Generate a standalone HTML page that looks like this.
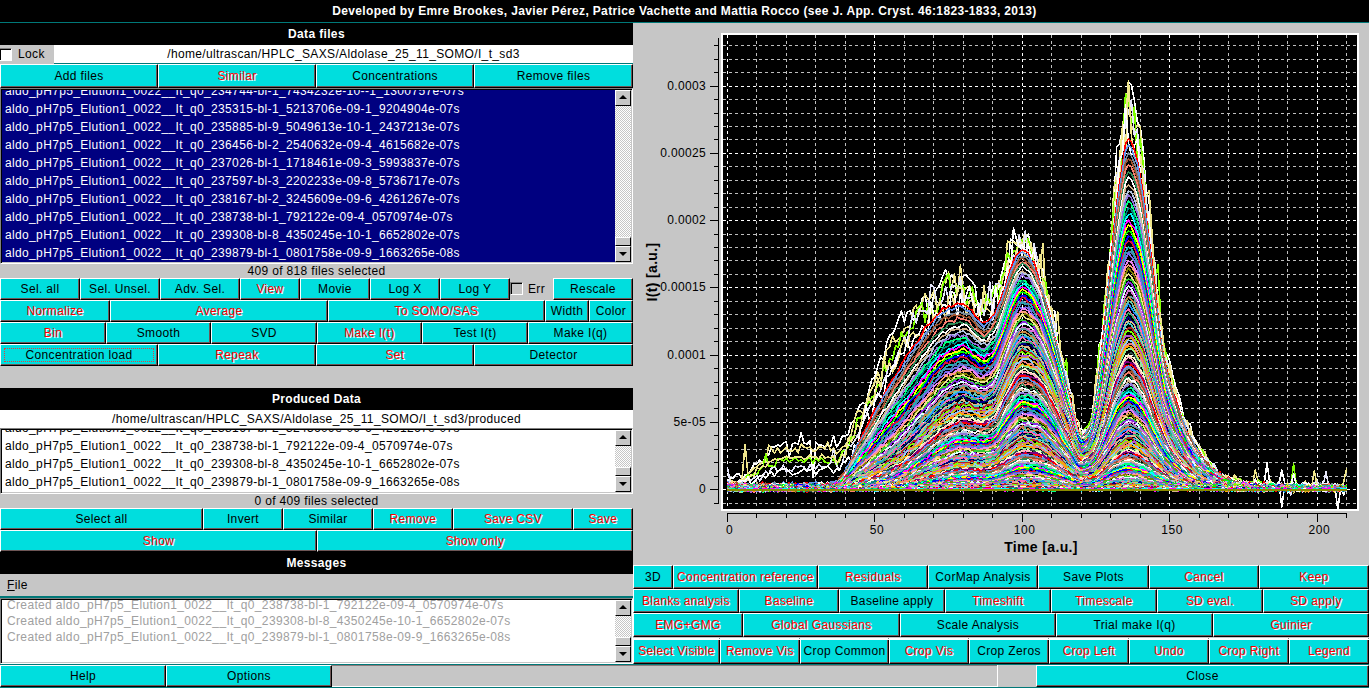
<!DOCTYPE html>
<html><head><meta charset="utf-8"><style>
*{margin:0;padding:0;box-sizing:content-box}
html,body{width:1369px;height:688px;overflow:hidden;background:#c6c6c6;position:relative;font-family:"Liberation Sans",sans-serif;font-size:12px;color:#000;letter-spacing:0.35px}
.t{position:absolute;white-space:nowrap}
.hdr{position:absolute;background:#000;color:#fff;font-weight:bold;text-align:center}
.b{position:absolute;background:#00dede;border-top:1px solid #fff;border-left:1px solid #fff;border-right:1px solid #000;border-bottom:1px solid #000;box-shadow:inset -1px -1px 0 #6e5656;white-space:nowrap;overflow:hidden;color:#000;display:flex;align-items:center;justify-content:center}
.b span{position:relative}
.b.r{color:#ff0000;text-shadow:1px 1px 0 #fff}
.cb{position:absolute;width:11px;height:11px;background:#fff;border-top:1px solid #808080;border-left:1px solid #808080;border-right:1px solid #fff;border-bottom:1px solid #fff;box-shadow:inset 1px 1px 0 #000}
.frame{position:absolute;box-sizing:border-box;border-top:1px solid #808080;border-left:1px solid #808080;border-right:1px solid #fff;border-bottom:1px solid #fff;box-shadow:inset 1px 1px 0 #000, inset -1px -1px 0 #c6c6c6}
.frame>div{}
.li{position:absolute;white-space:nowrap;line-height:18px}
.sb{position:absolute;width:16px;background:#c6c6c6}
.sbb{position:absolute;left:0;width:14px;height:14px;background:#c6c6c6;border-top:1px solid #fff;border-left:1px solid #fff;border-right:1px solid #000;border-bottom:1px solid #000}
.sbt{position:absolute;left:0;width:16px;background-color:#fff;background-image:linear-gradient(45deg,#c6c6c6 25%,transparent 25%,transparent 75%,#c6c6c6 75%),linear-gradient(45deg,#c6c6c6 25%,transparent 25%,transparent 75%,#c6c6c6 75%);background-size:2px 2px;background-position:0 0,1px 1px}
.au{position:absolute;left:3px;top:4px;width:0;height:0;border-left:4px solid transparent;border-right:4px solid transparent;border-bottom:4px solid #000}
.ad{position:absolute;left:3px;top:5px;width:0;height:0;border-left:4px solid transparent;border-right:4px solid transparent;border-top:4px solid #000}
.focus{position:absolute;left:3px;top:3px;right:3px;bottom:3px;border:1px dotted #e04040}
</style></head>
<body>
<svg width="1369" height="688" style="position:absolute;left:0;top:0" shape-rendering="crispEdges">
<rect x="721" y="33" width="638" height="478" fill="#fff"/>
<rect x="723" y="35" width="634" height="474" fill="#000"/>
<path d="M756.5 35V509M786.5 35V509M815.5 35V509M845.5 35V509M904.5 35V509M933.5 35V509M963.5 35V509M992.5 35V509M1051.5 35V509M1081.5 35V509M1110.5 35V509M1140.5 35V509M1199.5 35V509M1228.5 35V509M1258.5 35V509M1287.5 35V509M1346.5 35V509M723 503.5H1357M723 476.5H1357M723 462.5H1357M723 449.5H1357M723 435.5H1357M723 408.5H1357M723 395.5H1357M723 382.5H1357M723 368.5H1357M723 341.5H1357M723 328.5H1357M723 314.5H1357M723 301.5H1357M723 274.5H1357M723 260.5H1357M723 247.5H1357M723 234.5H1357M723 207.5H1357M723 193.5H1357M723 180.5H1357M723 166.5H1357M723 139.5H1357M723 126.5H1357M723 113.5H1357M723 99.5H1357M723 72.5H1357M723 59.5H1357M723 45.5H1357" stroke="#bebebe" stroke-width="1" stroke-dasharray="3 3" fill="none"/>
<path d="M727.5 35V509M874.5 35V509M1022.5 35V509M1169.5 35V509M1317.5 35V509M723 489.5H1357M723 422.5H1357M723 355.5H1357M723 287.5H1357M723 220.5H1357M723 153.5H1357M723 86.5H1357" stroke="#ffffff" stroke-width="1" stroke-dasharray="3 3" fill="none"/>
<svg x="723" y="35" width="634" height="474" viewBox="723 35 634 474" overflow="hidden">
<g transform="matrix(2.949,0,0,1,727.4,0)" fill="none" stroke-width="1.6" vector-effect="non-scaling-stroke" shape-rendering="crispEdges" stroke-linejoin="round">
<path d="M0 481l 1-3 1 0 1-4 1 0 1 5 1-4 1 0 1-5 1-6 1 0 1-4 1 3 1-8 1 0 1-8 1 0 1-2 1 1 1-3 1-1 1 15 1-13 1-1 1 1 1-11 1 10 1 1 1-3 1 36 1-35 1 3 1 0 1 2 1-2 1 1 1-10 1 11 1-4 1-7 1 0 1-2 1-11 1-3 1-9 1-6 1-2 1 1 1-14 1-11 1-2 1-11 1-9 1 3 1-17 1-8 1-1 1-6 1-9 1-8 1 11 1-10 1-1 1 9 1 2 1-9 1-14 1-4 1 15 1 1 1-17 1-5 1-4 1-9 1-6 1 9 1-4 1 5 1 11 1-13 1-2 1-1 1 4 1 3 1 4 1 26 1-5 1-8 1-2 1 8 1-19 1 9 1-8 1-13 1-12 1 16 1-39 1 2 1 4 1-9 1 20 1-16 1-6 1 14 1 3 1 8 1 8 1 2 1 21 1 15 1 5 1 1 1 32 1 7 1 26 1-5 1 17 1 9 1 19 1 16 1 8 1-11 1 2 1-2 1-22 1-19 1-43 1-7 1-33 1-36 1-16 1-42 1-64 1-3 1-15 1-13 1-34 1 3 1 15 1 22 1 5 1 23 1 40 1 10 1 57 1 20 1 20 1 25 1 28 1 4 1 7 1 14 1 12 1 7 1 12 1 15 1 3 1 0 1 16 1 1 1 7 1 6 1 5 1 0 1 4 1 3 1 8 1-1 1 18 1-16 1 2 1 1 1 0 1 1 1 5 1-2 1 3 1 4 1-1 1-9 1 8 1 2 1-3 1-5 1 4 1-1 1 1 1 0 1-15 1 13 1 2 1-2 1 0 1 3 1-1 1 0 1 2 1-4 1 3 1 1 1 2 1-1 1-6 1 6 1-3 1 1 1 0 1 24 1-23 1-1 1-1" stroke="#ffffff" vector-effect="non-scaling-stroke"/>
<path d="M0 484l 1-4 1 2 1 1 1 1 1-7 1-32 1 30 1-4 1-3 1-1 1-3 1-2 1 0 1-17 1 4 1 4 1-5 1 5 1-3 1-3 1 4 1 0 1-3 1 5 1-9 1 3 1 1 1-1 1 4 1 0 1-4 1 0 1 2 1-7 1 9 1-3 1 6 1-3 1-4 1-1 1-5 1-7 1-13 1-10 1 0 1 2 1-10 1-9 1-6 1-6 1-10 1 8 1-14 1-16 1-3 1-11 1 6 1-3 1-3 1-7 1-2 1 0 1-18 1-4 1 9 1-11 1-9 1 5 1-1 1-7 1 16 1-5 1-20 1 1 1-11 1 17 1-15 1 21 1-30 1 26 1-3 1-2 1 4 1 15 1 0 1 8 1-27 1 19 1-3 1 2 1-10 1-13 1 3 1-12 1-31 1 2 1-1 1 2 1-8 1 6 1-10 1 14 1 5 1 1 1 18 1-2 1-24 1 53 1 21 1-10 1 21 1-17 1 40 1 9 1 24 1 16 1 4 1 13 1 19 1 3 1-5 1-5 1-5 1-14 1-35 1-12 1-24 1-26 1-49 1-8 1-68 1-13 1-18 1-33 1-14 1-30 1 46 1 4 1-6 1 2 1 57 1 14 1-7 1 43 1 50 1 12 1 31 1 23 1 17 1-3 1 20 1 6 1 10 1 17 1 4 1 0 1 17 1-2 1 7 1 3 1 4 1 2 1 9 1 3 1 5 1 3 1 2 1 3 1-2 1 2 1 5 1-5 1 7 1-2 1 3 1-4 1 2 1 3 1-16 1 12 1 6 1-4 1 2 1-6 1 5 1-1 1 1 1-1 1 2 1-3 1 3 1 0 1-2 1 1 1 1 1 0 1 2 1-3 1 5 1-4 1-3 1 3 1 1 1-1 1 2 1-1 1-3 1 3 1-5 1-14" stroke="#f0e68c" vector-effect="non-scaling-stroke"/>
<path d="M0 482l 1 1 1 0 1-1 1 1 1-1 1-4 1-3 1 1 1-2 1 1 1-6 1-2 1-13 1 12 1 0 1 1 1-8 1 0 1 2 1-3 1 4 1-2 1-3 1 4 1-1 1 2 1-3 1-1 1 5 1-5 1 3 1-3 1 4 1 1 1-1 1-3 1 6 1-6 1-8 1 0 1-4 1-10 1 0 1-19 1 0 1-3 1-8 1-5 1-5 1-2 1-11 1 3 1-24 1 10 1-14 1 1 1-14 1 1 1-15 1 8 1-8 1-3 1-1 1-16 1-5 1-4 1 19 1-18 1 10 1-3 1 2 1-11 1-16 1-8 1-4 1 23 1-3 1-8 1 1 1-1 1 19 1-10 1-8 1 12 1 6 1 9 1-4 1-15 1 7 1-8 1-10 1 17 1-23 1-7 1-18 1 6 1-8 1 0 1-13 1 3 1 0 1-2 1 12 1 12 1 4 1 11 1 1 1 4 1 26 1 29 1-15 1 20 1 19 1 8 1-11 1 47 1 5 1 7 1 24 1-6 1-7 1-2 1-5 1-9 1-22 1-42 1-12 1-41 1-8 1-46 1-35 1-28 1 7 1-45 1-47 1 6 1 24 1-17 1 52 1-20 1 25 1 36 1 30 1 32 1 23 1-20 1 56 1 23 1 13 1 19 1 4 1 29 1-4 1 8 1 6 1 8 1 3 1 11 1 0 1 9 1 0 1 7 1 2 1 5 1 6 1 0 1 7 1-1 1 1 1 3 1 1 1-2 1 0 1 0 1 5 1 1 1-3 1 0 1 7 1-9 1 2 1 6 1-6 1 4 1 0 1 1 1 0 1-1 1-1 1 3 1-2 1-22 1 23 1 1 1-1 1-5 1 7 1 0 1-3 1-4 1 6 1-3 1 3 1-2 1-2 1 1 1 2 1-1 1 0 1-1" stroke="#7fff00" vector-effect="non-scaling-stroke"/>
<path d="M0 467l 1 17 1 0 1 1 1-5 1 7 1-5 1-2 1 0 1-2 1-2 1 5 1-5 1-5 1 3 1-6 1-1 1 4 1-1 1-5 1 7 1-2 1 1 1-5 1 1 1-1 1 1 1 4 1-6 1 3 1 1 1-5 1 3 1 0 1-1 1-3 1-14 1 16 1 5 1-7 1-12 1-6 1 1 1-5 1-4 1-7 1-8 1-6 1-8 1-6 1 0 1-6 1-6 1-9 1-7 1-11 1 10 1-14 1-7 1-6 1-9 1 5 1-17 1-12 1 10 1-13 1 1 1 0 1 3 1-29 1 2 1 14 1 4 1-5 1-13 1 13 1-15 1 1 1 4 1-13 1 27 1-6 1 0 1-1 1 19 1-3 1-13 1 15 1-11 1-22 1 38 1-36 1-1 1 4 1 5 1-15 1-13 1-9 1 2 1-22 1 18 1-22 1 26 1 3 1-16 1 14 1 20 1 12 1 8 1 9 1 11 1 5 1 27 1 7 1 12 1 5 1 14 1 10 1 20 1 19 1 1 1-8 1 8 1-11 1-12 1-26 1-26 1-29 1 5 1-53 1-26 1-31 1-51 1-20 1-5 1-33 1-7 1-13 1 36 1-7 1 35 1 5 1 31 1 21 1 29 1 13 1 48 1 26 1 16 1 7 1 10 1 15 1 13 1 8 1 10 1 2 1 9 1 5 1 7 1 5 1 2 1 9 1 2 1 3 1 7 1-3 1 6 1 7 1-3 1 3 1 1 1 3 1 1 1 0 1 4 1-3 1 0 1-1 1 3 1-2 1 5 1-1 1-4 1-1 1 1 1 4 1 0 1 0 1-4 1 4 1-2 1 10 1-10 1 1 1-1 1-1 1 1 1 1 1-2 1-1 1-2 1 7 1-3 1-13 1 16 1-1 1 0 1 1 1-1 1-2 1 3" stroke="#e6e6fa" vector-effect="non-scaling-stroke"/>
<path d="M0 485l 1-1 1-2 1 0 1 4 1-5 1-3 1 2 1-5 1 1 1-8 1 1 1-3 1 1 1-5 1-1 1-2 1 1 1-1 1-1 1-2 1 2 1 0 1-1 1 0 1 0 1 2 1-1 1-3 1 2 1 0 1 2 1-5 1 4 1-1 1 1 1-2 1 6 1-1 1-7 1 3 1-19 1 4 1-7 1-10 1 3 1-14 1-9 1-7 1 7 1-10 1-17 1 10 1-31 1 12 1-6 1 9 1-5 1-8 1-14 1-6 1 8 1-12 1-3 1 5 1-3 1 4 1-10 1-5 1-20 1 20 1-15 1-7 1 8 1 11 1-23 1-3 1 11 1-18 1 1 1 2 1 25 1-14 1-1 1 16 1 1 1-8 1-9 1 9 1 2 1 3 1 1 1-9 1-19 1 0 1-26 1 18 1-11 1-17 1-7 1-1 1 14 1-1 1-13 1 20 1 9 1-17 1 28 1 15 1-3 1 37 1 17 1 0 1 3 1 24 1 3 1 18 1-3 1 24 1 3 1 17 1-2 1-7 1 3 1-14 1-33 1-22 1-11 1-48 1-25 1-31 1-15 1-52 1-4 1-50 1 25 1-67 1 51 1 18 1 7 1-6 1 26 1 32 1 7 1 14 1 46 1 22 1 17 1 27 1 30 1-9 1 20 1 8 1 4 1 27 1-4 1 15 1-9 1 19 1-6 1 6 1 6 1 6 1 6 1 1 1 5 1 4 1-1 1 3 1 0 1-1 1 5 1-6 1 4 1 1 1 7 1-3 1 3 1-1 1 0 1-1 1 1 1-1 1-1 1-2 1 2 1 4 1-2 1-1 1 3 1 0 1-2 1 7 1-8 1 4 1-2 1-6 1 9 1-1 1-18 1 14 1 2 1-1 1 0 1 2 1-2 1 0 1-1 1 0 1 3 1-2" stroke="#f0e68c" vector-effect="non-scaling-stroke"/>
<path d="M0 483l 1 3 1-1 1-3 1-1 1 0 1 0 1-4 1 7 1-2 1-3 1-3 1-1 1 3 1-4 1-2 1 4 1-5 1-1 1-1 1 0 1 3 1 3 1-1 1-1 1-2 1-2 1 2 1-1 1-2 1 7 1-5 1-1 1-1 1-2 1 3 1 4 1-4 1 1 1-7 1-1 1-5 1 4 1-16 1 4 1-18 1-8 1-18 1 14 1-3 1-16 1-7 1 4 1-1 1-19 1-2 1-9 1 0 1-13 1 1 1-1 1-13 1 12 1-12 1-5 1-1 1-8 1 2 1 6 1-32 1 13 1-2 1 6 1-14 1 0 1 10 1-23 1 1 1 23 1-22 1 13 1-12 1-9 1 14 1 7 1-4 1 17 1 2 1-1 1-2 1-11 1-21 1 19 1-15 1-5 1-19 1 5 1-44 1 11 1 8 1-2 1 7 1-8 1 14 1-8 1 23 1 5 1 18 1 0 1 9 1 16 1 14 1 8 1 14 1 11 1 19 1 13 1 10 1 14 1 6 1-2 1 6 1 3 1 11 1-29 1-27 1-21 1-37 1-18 1-27 1-44 1-8 1-40 1-36 1-9 1-47 1 38 1 13 1-10 1-7 1 35 1 27 1 28 1-15 1 60 1 17 1 31 1 9 1 35 1 11 1 25 1-5 1-1 1 6 1 13 1 19 1-1 1 4 1 0 1 5 1 6 1 7 1 5 1 4 1 4 1 3 1 3 1 1 1 12 1-5 1-6 1 3 1 1 1 2 1 1 1-2 1 4 1 1 1-1 1 1 1-4 1 3 1-1 1-21 1 22 1-2 1 2 1-3 1 25 1-22 1 8 1-7 1-12 1 12 1 0 1-3 1 0 1 1 1 1 1 0 1 0 1-1 1 2 1-2 1 0 1 3 1-2 1 2 1 1 1 7 1-8" stroke="#ffffff" vector-effect="non-scaling-stroke"/>
<path d="M0 482l 1 3 1-2 1 1 1 2 1-2 1-1 1 3 1-1 1 2 1-2 1 0 1-3 1 5 1-3 1 0 1 0 1 0 1 0 1 1 1-1 1-1 1 4 1-4 1 2 1-1 1-1 1 0 1 1 1 0 1 2 1-2 1 0 1 0 1 1 1-2 1-1 1 0 1-2 1-6 1-3 1-5 1-7 1-7 1-6 1-6 1-7 1-5 1-6 1-7 1-6 1-2 1-6 1-6 1-6 1-5 1-5 1-3 1-5 1-7 1-5 1-5 1-3 1-5 1-2 1-4 1-6 1-7 1-2 1-2 1-4 1-3 1-3 1-5 1 1 1-3 1 1 1-2 1-2 1 1 1 0 1 2 1 3 1 1 1 6 1 2 1 5 1-1 1 0 1-3 1-3 1-4 1-8 1-8 1-6 1-12 1-9 1-8 1-6 1-3 1-2 1 1 1 2 1 8 1 1 1 10 1 11 1 8 1 12 1 8 1 14 1 12 1 11 1 13 1 11 1 12 1 13 1 13 1 10 1 12 1 5 1-3 1-3 1-1 1-15 1-16 1-23 1-27 1-29 1-29 1-29 1-31 1-27 1-22 1-18 1-20 1-5 1 3 1 8 1 10 1 16 1 17 1 24 1 23 1 22 1 25 1 28 1 25 1 18 1 11 1 12 1 11 1 6 1 10 1 10 1 8 1 7 1 7 1 3 1 6 1 2 1 6 1 4 1 2 1 6 1 0 1 6 1-3 1 7 1 1 1-3 1 5 1-1 1 2 1 3 1-2 1 1 1-3 1 4 1-3 1 3 1-1 1-3 1 4 1 0 1-1 1 2 1-2 1 0 1 1 1 2 1 1 1-2 1 0 1 2 1-3 1 0 1 0 1-1 1 2 1-1 1 1 1-2 1 2 1 0 1-1 1 3 1-4 1 2 1 0 1 0" stroke="#ff0000" vector-effect="non-scaling-stroke"/>
<path d="M0 481l 1 4 1 1 1-1 1 0 1 1 1-1 1-1 1 3 1-2 1 1 1-1 1-1 1 1 1 3 1-4 1 0 1 0 1 1 1-3 1 3 1 0 1-3 1 5 1-3 1 0 1 1 1 0 1-2 1 0 1-1 1 2 1 0 1 0 1 1 1-3 1 0 1-1 1 0 1-6 1-5 1-5 1-5 1-8 1-8 1-2 1-6 1-5 1-5 1-6 1-7 1-6 1-4 1-7 1-4 1-4 1-6 1-4 1-5 1-3 1-7 1-3 1-7 1-2 1-6 1-2 1-3 1-6 1-3 1-4 1-4 1-6 1-1 1-3 1-1 1-3 1 1 1-1 1-3 1 0 1 2 1 3 1 0 1 4 1 4 1 2 1 3 1 3 1-4 1-1 1-5 1-2 1-9 1-6 1-9 1-9 1-10 1-6 1-8 1-4 1-2 1 2 1 2 1 5 1 7 1 8 1 8 1 6 1 15 1 9 1 10 1 14 1 10 1 13 1 10 1 13 1 15 1 10 1 14 1 9 1 6 1-1 1-7 1-3 1-11 1-20 1-22 1-23 1-26 1-32 1-27 1-27 1-29 1-21 1-19 1-19 1-6 1 3 1 9 1 7 1 17 1 18 1 22 1 23 1 25 1 26 1 22 1 24 1 18 1 13 1 10 1 10 1 12 1 7 1 7 1 6 1 11 1 3 1 4 1 6 1 4 1 6 1 3 1 4 1 3 1 2 1 3 1 1 1 3 1 4 1-1 1 4 1-1 1 1 1 1 1-1 1-1 1 1 1 1 1 2 1-2 1 1 1 0 1-1 1 1 1 1 1-2 1 2 1-2 1 3 1-3 1 0 1 1 1 1 1-2 1 2 1-2 1 1 1 2 1-2 1 0 1 0 1 0 1 0 1-2 1 2 1-1 1 1 1 2 1-2 1 1" stroke="#6495ed" vector-effect="non-scaling-stroke"/>
<path d="M0 484l 1 1 1 1 1 0 1 0 1-1 1 1 1 0 1 1 1-3 1 2 1 0 1-1 1 1 1-1 1-1 1-2 1 3 1 0 1-1 1 1 1 1 1-1 1 0 1-1 1 4 1-3 1 0 1-1 1 1 1 0 1 2 1-2 1 1 1-3 1 0 1 1 1 0 1-5 1-4 1-2 1-6 1-6 1-7 1-6 1-5 1-5 1-8 1-4 1-6 1-4 1-6 1-6 1-3 1-6 1-5 1-3 1-8 1 0 1-5 1-5 1-6 1-5 1-5 1-4 1-2 1-6 1-1 1-8 1-1 1-1 1-7 1-4 1 0 1-3 1-1 1-1 1 0 1-3 1 1 1 2 1 0 1 0 1 3 1 4 1 4 1 3 1 2 1-1 1-6 1 2 1-7 1-9 1-7 1-6 1-10 1-11 1-6 1-6 1-6 1 0 1 0 1 3 1 4 1 5 1 7 1 8 1 9 1 11 1 12 1 12 1 12 1 9 1 14 1 13 1 11 1 12 1 11 1 14 1 9 1 3 1 0 1-2 1-5 1-12 1-18 1-21 1-22 1-30 1-27 1-28 1-32 1-23 1-21 1-20 1-15 1-7 1 3 1 7 1 10 1 15 1 18 1 22 1 24 1 20 1 23 1 30 1 19 1 16 1 13 1 10 1 9 1 11 1 7 1 8 1 10 1 7 1 1 1 7 1 6 1 6 1 5 1 1 1 4 1 4 1 2 1 1 1 3 1 2 1 4 1-3 1 3 1 1 1 0 1 2 1-1 1 1 1 0 1-1 1 1 1 2 1 0 1-1 1 1 1-1 1 1 1 1 1-2 1 1 1 1 1-1 1 0 1 1 1 2 1-3 1-2 1 2 1 0 1 0 1 1 1 1 1-5 1 3 1 0 1 0 1-2 1 5 1-3 1 2 1-1 1-1" stroke="#778899" vector-effect="non-scaling-stroke"/>
<path d="M0 485l 1 0 1 1 1-4 1 4 1 1 1-2 1 0 1 2 1-3 1 2 1-2 1 1 1-2 1 2 1 1 1-1 1 0 1 0 1 0 1-1 1 0 1 1 1 1 1 0 1-2 1-1 1 1 1 2 1-1 1-1 1 0 1 0 1 1 1 0 1 0 1-1 1-1 1-5 1-4 1-2 1-4 1-4 1-10 1-5 1-6 1-4 1-5 1-5 1-5 1-6 1-6 1-3 1-4 1-8 1-1 1-7 1-4 1-5 1-3 1-5 1-5 1-4 1-6 1-1 1-6 1-4 1-5 1-4 1-4 1-6 1-2 1-1 1-5 1-2 1 2 1-3 1-1 1 1 1-1 1 1 1 2 1-1 1 4 1 2 1 6 1 2 1 1 1-1 1-1 1-2 1-9 1-5 1-7 1-9 1-11 1-7 1-9 1-6 1-5 1-2 1 3 1 2 1 3 1 6 1 8 1 10 1 7 1 11 1 10 1 11 1 11 1 13 1 12 1 12 1 10 1 13 1 11 1 12 1 10 1 6 1-3 1-2 1-6 1-8 1-18 1-25 1-22 1-26 1-27 1-30 1-25 1-27 1-20 1-18 1-19 1-4 1 2 1 8 1 9 1 13 1 21 1 21 1 18 1 25 1 26 1 21 1 23 1 17 1 15 1 8 1 10 1 8 1 9 1 9 1 7 1 5 1 5 1 8 1 4 1 2 1 6 1 2 1 3 1 5 1 3 1 3 1 1 1 1 1 2 1 1 1 5 1-1 1-3 1 4 1 0 1-1 1 0 1 0 1 4 1-1 1-1 1-1 1 1 1 1 1-2 1-1 1 1 1-1 1 2 1 1 1 0 1-3 1 3 1 0 1-1 1 1 1 0 1-2 1 2 1 2 1-2 1-2 1 0 1 0 1 2 1 1 1 1 1-2 1-1 1 1" stroke="#a0522d" vector-effect="non-scaling-stroke"/>
<path d="M0 485l 1-2 1 2 1 0 1 1 1 0 1-3 1 3 1 1 1 0 1-1 1-2 1 2 1-1 1 1 1 1 1 0 1-2 1 0 1 1 1-1 1 1 1-1 1 1 1-2 1 1 1 0 1 1 1-1 1 0 1 0 1 1 1 0 1-1 1 0 1 2 1-2 1-2 1-3 1-3 1-4 1-5 1-6 1-4 1-8 1-4 1-4 1-8 1-2 1-6 1-3 1-7 1-2 1-6 1-5 1-6 1-4 1-6 1-4 1-4 1-5 1-5 1-4 1-2 1-6 1-3 1-4 1-4 1-4 1-1 1-6 1-5 1-2 1-1 1-5 1-1 1 0 1 1 1-5 1 2 1 0 1 1 1 1 1 6 1 2 1 2 1 2 1 3 1-2 1-3 1-6 1-3 1-2 1-12 1-7 1-10 1-9 1-7 1-7 1-4 1-2 1 1 1 3 1 4 1 3 1 8 1 9 1 9 1 10 1 9 1 12 1 9 1 15 1 11 1 13 1 12 1 9 1 12 1 11 1 10 1 7 1-1 1-4 1-3 1-11 1-18 1-21 1-23 1-26 1-25 1-28 1-29 1-25 1-20 1-19 1-16 1-5 1 2 1 8 1 9 1 13 1 20 1 21 1 21 1 22 1 24 1 24 1 21 1 17 1 11 1 11 1 9 1 10 1 8 1 6 1 7 1 6 1 8 1 5 1 2 1 5 1 5 1 4 1 5 1-1 1 4 1 1 1 2 1 4 1 3 1-1 1 1 1 2 1 1 1 1 1-2 1 0 1 1 1 0 1 1 1 1 1-1 1 1 1-1 1-1 1 2 1-1 1-1 1 2 1 0 1-1 1 0 1 0 1 0 1 1 1-1 1 1 1-2 1 3 1 0 1-1 1 1 1-1 1 1 1-4 1 4 1-1 1 0 1 2 1-3 1-1" stroke="#fa8072" vector-effect="non-scaling-stroke"/>
<path d="M0 487l 1 0 1-2 1 0 1 1 1 1 1 0 1 0 1-1 1 0 1 0 1-1 1 1 1 0 1-1 1 0 1 0 1 1 1-1 1 0 1-1 1 1 1-1 1 1 1-1 1 1 1 0 1 1 1-1 1 0 1 0 1 0 1-1 1 2 1 1 1-1 1-2 1-1 1-2 1-3 1-2 1-9 1-2 1-6 1-8 1-4 1-5 1-4 1-5 1-5 1-3 1-8 1-2 1-5 1-7 1-4 1-3 1-7 1-1 1-4 1-8 1-1 1-5 1-5 1-4 1-4 1-5 1-2 1-4 1-5 1-4 1-2 1-2 1-4 1-1 1-4 1 0 1 0 1-1 1-1 1 2 1-1 1 2 1 3 1 4 1 3 1 1 1 2 1-2 1-3 1-3 1-3 1-9 1-9 1-5 1-10 1-9 1-9 1-5 1-4 1-4 1 2 1 3 1 5 1 5 1 7 1 9 1 5 1 11 1 10 1 10 1 12 1 12 1 12 1 11 1 13 1 13 1 11 1 11 1 9 1 4 1-1 1-4 1-3 1-9 1-18 1-22 1-20 1-26 1-28 1-25 1-26 1-25 1-21 1-18 1-15 1-5 1 2 1 6 1 10 1 15 1 18 1 20 1 19 1 22 1 24 1 22 1 22 1 17 1 12 1 9 1 13 1 4 1 9 1 9 1 6 1 6 1 7 1 4 1 4 1 5 1 4 1 3 1 2 1 4 1 3 1 3 1 2 1 0 1 3 1 1 1-2 1 4 1-1 1 0 1-1 1 3 1 0 1 1 1 0 1-2 1 0 1 1 1 1 1-2 1 3 1-3 1 2 1 2 1-3 1 0 1 3 1-4 1 1 1 3 1-2 1 1 1 1 1-2 1 0 1 1 1 0 1 0 1 0 1 1 1-1 1-1 1 0 1 0 1 0 1 1" stroke="#2e8b57" vector-effect="non-scaling-stroke"/>
<path d="M0 486l 1 1 1-3 1 1 1 1 1 0 1 0 1 0 1 0 1 0 1 2 1 0 1-2 1 0 1 0 1-2 1 1 1-1 1 1 1-2 1 3 1-1 1 0 1 1 1-1 1 0 1 0 1 1 1 2 1-2 1 2 1-5 1-1 1 3 1-3 1 5 1-2 1-2 1-1 1-3 1-5 1-4 1-7 1-4 1-6 1-2 1-5 1-6 1-5 1-4 1-5 1-5 1-6 1-5 1-1 1-5 1-5 1-5 1-3 1-5 1-4 1-4 1-4 1-5 1-4 1-2 1-6 1-3 1-4 1-5 1-4 1-2 1-4 1-3 1 1 1-3 1-2 1-1 1 1 1-2 1-2 1 1 1 3 1 4 1 3 1 2 1 3 1 0 1 1 1-6 1-1 1-5 1-5 1-9 1-9 1-9 1-9 1-7 1-7 1-4 1-4 1 3 1 2 1 3 1 7 1 5 1 7 1 10 1 10 1 10 1 10 1 13 1 13 1 9 1 12 1 10 1 12 1 12 1 10 1 11 1 3 1-1 1 0 1-6 1-10 1-16 1-20 1-21 1-27 1-25 1-25 1-28 1-22 1-20 1-19 1-15 1-6 1 3 1 7 1 9 1 14 1 17 1 21 1 18 1 22 1 22 1 23 1 20 1 17 1 13 1 9 1 9 1 8 1 10 1 6 1 9 1 3 1 5 1 6 1 5 1 5 1 1 1 9 1-1 1 5 1 1 1 1 1 4 1 1 1 2 1 1 1 0 1 1 1 0 1 1 1 2 1 1 1-3 1 0 1 2 1 0 1-2 1 2 1 2 1-2 1-1 1 2 1 0 1 0 1-1 1-1 1 2 1 1 1-3 1 2 1 1 1-2 1-2 1 2 1 0 1 0 1 0 1 1 1 0 1 0 1 0 1-3 1 3 1 1 1 0 1-2" stroke="#ffffff" vector-effect="non-scaling-stroke"/>
<path d="M0 486l 1-1 1 1 1 1 1-3 1-1 1 2 1 3 1-3 1 3 1-5 1 4 1-3 1 2 1 2 1-3 1 1 1 0 1-2 1 1 1 1 1-1 1 1 1-1 1-1 1 0 1 1 1 2 1-1 1 0 1 0 1-1 1-1 1 1 1 1 1-1 1 0 1-2 1-2 1-2 1-3 1-7 1-6 1-4 1-4 1-6 1-4 1-5 1-3 1-4 1-5 1-5 1-3 1-5 1-5 1-3 1-5 1-4 1-5 1-2 1-6 1-5 1-4 1-5 1-1 1-7 1-3 1-2 1-5 1-4 1-2 1-4 1-4 1-3 1-1 1-2 1-3 1 0 1-1 1 1 1-1 1 0 1 2 1 3 1 3 1 1 1 6 1-1 1-2 1-2 1 0 1-3 1-9 1-9 1-9 1-11 1-8 1-7 1-7 1-3 1-2 1 2 1 2 1 2 1 7 1 5 1 8 1 10 1 9 1 10 1 8 1 13 1 11 1 12 1 10 1 12 1 13 1 9 1 10 1 14 1 0 1 1 1-5 1-1 1-12 1-15 1-19 1-23 1-23 1-25 1-26 1-25 1-25 1-16 1-20 1-16 1-3 1 3 1 3 1 11 1 13 1 17 1 18 1 22 1 20 1 23 1 23 1 18 1 17 1 12 1 10 1 7 1 9 1 8 1 7 1 5 1 9 1 4 1 5 1 4 1 7 1 2 1 2 1 6 1 1 1 4 1 1 1 2 1 0 1 2 1 3 1-1 1 2 1 0 1 1 1 0 1-1 1 0 1 2 1 0 1-1 1 1 1-1 1 0 1 1 1 2 1 0 1-1 1 0 1-1 1 1 1 0 1 2 1-3 1 1 1-1 1 0 1 0 1 1 1-2 1 1 1 3 1-3 1 2 1-2 1 1 1 0 1-1 1 1 1-1 1 2" stroke="#d2b48c" vector-effect="non-scaling-stroke"/>
<path d="M0 487l 1-1 1-1 1-1 1 1 1-3 1 5 1 0 1-2 1 1 1 1 1 0 1-1 1 0 1 0 1 0 1-1 1 1 1 1 1-2 1 1 1 1 1-2 1 0 1 2 1 0 1-4 1 2 1 0 1 0 1 1 1-1 1 0 1 1 1-1 1 0 1 0 1-2 1-3 1-1 1-2 1-7 1-4 1-5 1-4 1-6 1-4 1-6 1-1 1-5 1-5 1-5 1-3 1-4 1-5 1-4 1-2 1-8 1-1 1-6 1-3 1-4 1-3 1-6 1-1 1-6 1-5 1-4 1-4 1-2 1-7 1-4 1-1 1-2 1-1 1-4 1 0 1 0 1-2 1-1 1-1 1 3 1 0 1 2 1 3 1 2 1 3 1-1 1 2 1-2 1-6 1-1 1-8 1-8 1-8 1-10 1-7 1-10 1-5 1-6 1-1 1 1 1 1 1 4 1 6 1 5 1 7 1 11 1 7 1 12 1 11 1 9 1 12 1 12 1 11 1 10 1 13 1 8 1 11 1 12 1 4 1 3 1-5 1-5 1-10 1-15 1-19 1-22 1-24 1-24 1-24 1-26 1-24 1-17 1-18 1-13 1-6 1 1 1 7 1 10 1 12 1 17 1 17 1 20 1 24 1 20 1 21 1 20 1 14 1 12 1 9 1 10 1 8 1 11 1 2 1 9 1 7 1 4 1 5 1 4 1 6 1 0 1 4 1 3 1 3 1 4 1-1 1 5 1 1 1 2 1 0 1 1 1 1 1-1 1 0 1 3 1-1 1 0 1 1 1-1 1 1 1 1 1-3 1 1 1 0 1 0 1 0 1 0 1 1 1 0 1 0 1 1 1-1 1 0 1 2 1 0 1-2 1 2 1-2 1-1 1 2 1 1 1-1 1 2 1-3 1 0 1-1 1 0 1 2 1 3 1-3" stroke="#b0c4de" vector-effect="non-scaling-stroke"/>
<path d="M0 486l 1 1 1-2 1 0 1 0 1 1 1 1 1-1 1 0 1 1 1-1 1 0 1 1 1 0 1 0 1 0 1-1 1-1 1 0 1 1 1 2 1-3 1 3 1-2 1 0 1 0 1-1 1 0 1 1 1 1 1-2 1 1 1-1 1 1 1 0 1-1 1 1 1-2 1-3 1-1 1-2 1-6 1-5 1-4 1-7 1-4 1-4 1-3 1-5 1-2 1-6 1-3 1-5 1-4 1-4 1-7 1-4 1-1 1-6 1-2 1-6 1-2 1-4 1-5 1-4 1-3 1-4 1-3 1-2 1-8 1-2 1-5 1-1 1-5 1-2 1-1 1-4 1 2 1-3 1 3 1-2 1 1 1 4 1 3 1 1 1 1 1 4 1 0 1-2 1-2 1-1 1-6 1-5 1-10 1-8 1-11 1-8 1-5 1-9 1-3 1-5 1 4 1 0 1 3 1 8 1 6 1 3 1 11 1 10 1 11 1 9 1 9 1 15 1 10 1 8 1 13 1 11 1 10 1 14 1 10 1 1 1 1 1-4 1-4 1-8 1-15 1-19 1-21 1-25 1-24 1-21 1-29 1-22 1-16 1-18 1-14 1-6 1 3 1 8 1 7 1 12 1 17 1 19 1 21 1 18 1 20 1 26 1 17 1 13 1 12 1 9 1 9 1 7 1 10 1 8 1 5 1 6 1 5 1 5 1 3 1 5 1 4 1 2 1 4 1 3 1 0 1 5 1 0 1 5 1-2 1 1 1 0 1 2 1-1 1 3 1-2 1 2 1 2 1-1 1-2 1 0 1 1 1 1 1 0 1 0 1 0 1 0 1-1 1 1 1 1 1 0 1 0 1-1 1 0 1 1 1-1 1-1 1 1 1 0 1 1 1 1 1-3 1 2 1 0 1 0 1 1 1-1 1-1 1 0 1 0 1 0" stroke="#9370db" vector-effect="non-scaling-stroke"/>
<path d="M0 488l 1-3 1 1 1 0 1 2 1-2 1 1 1-1 1 0 1-2 1 2 1 1 1-1 1 0 1 0 1 1 1 0 1 0 1-1 1-1 1-1 1 2 1 1 1 0 1-1 1 0 1 0 1 2 1-1 1 1 1-3 1 1 1 0 1 0 1-2 1 2 1-1 1 0 1-3 1-3 1-2 1-4 1-4 1-6 1-4 1-3 1-6 1-3 1-4 1-4 1-4 1-6 1-2 1-4 1-7 1-3 1-4 1-4 1-3 1-3 1-4 1-7 1-2 1-5 1-3 1-4 1-3 1-6 1-1 1-4 1-4 1-4 1-5 1 1 1-6 1 0 1-1 1-1 1-1 1 0 1-1 1 0 1 5 1 2 1 2 1 1 1 2 1 1 1-2 1-3 1-4 1-1 1-8 1-8 1-10 1-8 1-6 1-10 1-4 1-6 1 0 1 0 1 4 1 1 1 5 1 5 1 10 1 4 1 10 1 9 1 11 1 12 1 9 1 10 1 12 1 10 1 13 1 12 1 12 1 8 1 4 1-2 1-3 1-2 1-10 1-16 1-17 1-22 1-21 1-25 1-23 1-24 1-23 1-16 1-15 1-16 1-6 1 3 1 8 1 8 1 12 1 14 1 20 1 17 1 20 1 22 1 20 1 19 1 16 1 11 1 9 1 7 1 10 1 8 1 7 1 4 1 8 1 5 1 5 1 3 1 1 1 8 1 1 1 1 1 3 1 4 1 2 1 0 1 3 1 2 1 0 1 0 1 3 1 0 1-1 1 2 1-2 1 3 1-1 1 0 1-1 1 1 1-1 1 2 1-3 1 0 1 2 1 2 1-1 1 0 1 0 1 0 1-2 1-1 1 3 1-1 1 0 1 1 1 1 1 1 1 0 1-1 1-1 1 1 1 0 1 0 1 0 1 0 1-1 1 2 1-3" stroke="#00ff7f" vector-effect="non-scaling-stroke"/>
<path d="M0 487l 1-1 1 1 1 0 1 0 1-1 1 0 1 2 1 1 1-3 1 2 1 0 1-1 1 0 1-2 1 2 1-1 1-1 1 0 1 2 1-2 1 1 1 0 1-1 1 2 1 1 1-1 1-2 1 1 1-2 1 3 1-1 1 1 1-1 1-2 1 1 1 2 1-3 1-3 1-1 1-3 1-4 1-5 1-4 1-4 1-3 1-4 1-6 1-3 1-3 1-6 1-4 1-4 1-3 1-3 1-3 1-6 1-2 1-6 1-4 1-4 1-3 1-4 1-2 1-4 1-7 1-2 1-5 1-3 1-3 1-3 1-5 1-2 1-4 1-2 1-1 1-4 1 2 1-3 1 0 1 1 1-1 1 1 1 4 1 2 1 1 1 3 1 3 1-3 1-4 1 1 1-7 1-5 1-8 1-8 1-10 1-9 1-6 1-8 1-4 1-3 1 4 1 2 1 3 1 3 1 6 1 9 1 5 1 10 1 8 1 11 1 8 1 13 1 12 1 10 1 10 1 13 1 10 1 12 1 6 1 5 1-1 1 0 1-7 1-8 1-12 1-20 1-20 1-21 1-23 1-25 1-24 1-19 1-21 1-13 1-12 1-7 1 1 1 8 1 8 1 11 1 17 1 18 1 18 1 20 1 22 1 19 1 16 1 17 1 8 1 11 1 7 1 9 1 8 1 4 1 7 1 7 1 3 1 6 1 5 1 3 1 4 1 2 1 2 1 5 1 0 1 2 1 3 1 1 1 0 1 2 1 3 1-1 1 1 1 0 1 1 1 0 1 1 1-2 1-1 1 3 1 1 1-1 1-1 1 1 1-1 1 1 1-2 1 4 1-4 1 2 1 0 1 0 1 0 1 0 1 0 1 0 1 2 1-2 1 0 1 2 1-1 1-1 1-1 1 2 1 1 1-1 1-1 1 1 1 0 1-1" stroke="#008080" vector-effect="non-scaling-stroke"/>
<path d="M0 486l 1 2 1 0 1-2 1 1 1 0 1-1 1 0 1 2 1 0 1-3 1 3 1-1 1 0 1 1 1-2 1 1 1-1 1 0 1-1 1-1 1 2 1-1 1 1 1 1 1-1 1-1 1 1 1 0 1 1 1-2 1 0 1 0 1 3 1-2 1 0 1 0 1-3 1 1 1-6 1-2 1-1 1-6 1-4 1-4 1-5 1-4 1 0 1-8 1-4 1 0 1-5 1-4 1-6 1-3 1-5 1-1 1-2 1-8 1-3 1-3 1-2 1-4 1-5 1-3 1-2 1-6 1-3 1-4 1-6 1-3 1-4 1-3 1-1 1-1 1-4 1 0 1-2 1-2 1 0 1-2 1-1 1 6 1 2 1 0 1 3 1 2 1 1 1-2 1 0 1-2 1-6 1-7 1-6 1-11 1-8 1-10 1-8 1-5 1-4 1-2 1-1 1 4 1 4 1 4 1 6 1 5 1 7 1 11 1 10 1 9 1 11 1 10 1 9 1 12 1 11 1 9 1 14 1 9 1 10 1 2 1 2 1-3 1-5 1-9 1-12 1-20 1-17 1-23 1-23 1-21 1-27 1-18 1-17 1-18 1-11 1-4 1-1 1 8 1 10 1 11 1 16 1 16 1 16 1 22 1 17 1 20 1 21 1 12 1 11 1 9 1 10 1 7 1 7 1 7 1 6 1 5 1 4 1 5 1 2 1 7 1 3 1 2 1 3 1 0 1 2 1 4 1 0 1 5 1-2 1 5 1 0 1 0 1 1 1 0 1 1 1-3 1 3 1-2 1 2 1-2 1 2 1 1 1-2 1 1 1 1 1-2 1 0 1 0 1 1 1 1 1-2 1 1 1 0 1-1 1-1 1 3 1 2 1-3 1 0 1 0 1 1 1-1 1 1 1-1 1 2 1-2 1 1 1-3 1 2 1 0" stroke="#00ffff" vector-effect="non-scaling-stroke"/>
<path d="M0 485l 1 0 1 0 1 1 1 1 1 1 1-4 1 4 1 0 1-3 1 1 1 0 1 2 1-2 1 2 1-1 1-1 1 0 1 2 1-2 1 0 1-1 1 2 1 0 1 2 1-2 1-1 1 1 1-1 1 1 1-3 1 3 1 0 1-2 1 2 1 1 1-4 1-1 1 0 1-2 1-3 1-2 1-5 1-3 1-4 1-5 1-6 1-2 1-3 1-5 1-3 1-6 1-3 1-1 1-5 1-3 1-4 1-3 1-5 1-5 1-2 1-2 1-6 1-3 1-6 1-1 1-6 1-1 1-6 1-3 1-3 1-3 1-7 1 1 1-3 1-2 1-3 1 1 1-2 1-2 1-1 1 2 1 2 1 5 1 2 1-1 1 2 1 2 1-4 1-1 1-1 1-5 1-7 1-7 1-10 1-7 1-9 1-7 1-7 1-5 1-2 1 1 1 2 1 5 1 3 1 5 1 5 1 8 1 9 1 12 1 10 1 9 1 11 1 9 1 10 1 12 1 11 1 9 1 14 1 8 1 3 1-1 1-1 1-5 1-8 1-14 1-18 1-17 1-24 1-21 1-24 1-22 1-19 1-17 1-15 1-13 1-4 1 5 1 3 1 7 1 14 1 14 1 15 1 18 1 20 1 19 1 18 1 16 1 15 1 12 1 9 1 8 1 8 1 8 1 5 1 6 1 6 1 4 1 5 1 4 1 4 1 1 1 5 1 3 1 2 1 0 1 3 1 2 1 0 1 4 1 0 1 1 1 1 1 0 1 1 1-4 1 4 1 0 1 0 1 0 1 2 1-1 1 0 1-1 1 1 1 1 1-1 1-1 1 1 1-1 1 1 1 2 1-3 1 1 1 1 1 0 1-1 1 1 1-1 1-1 1 3 1-2 1 0 1 1 1-1 1 1 1-1 1 2 1-1 1-1 1-2" stroke="#ff00ff" vector-effect="non-scaling-stroke"/>
<path d="M0 487l 1-1 1 0 1 1 1-1 1 0 1 2 1-1 1-1 1 0 1-1 1 1 1 0 1 1 1 0 1 0 1 0 1 0 1 0 1-1 1-1 1 1 1-1 1 4 1-2 1 1 1 0 1 0 1-2 1 2 1 0 1-2 1 0 1 1 1-1 1 0 1-1 1 1 1-1 1-6 1-1 1-4 1-2 1-4 1-4 1-6 1 0 1-4 1-4 1-6 1-1 1-3 1-4 1-5 1-2 1-4 1-3 1-4 1-7 1-2 1-3 1-4 1-2 1-3 1-6 1-4 1-3 1-2 1-6 1-4 1-2 1-6 1-3 1-1 1-4 1-2 1 0 1-2 1 0 1-2 1-2 1 3 1 3 1 2 1 0 1 2 1 3 1 0 1 0 1-3 1-2 1-5 1-8 1-7 1-6 1-11 1-9 1-6 1-7 1-5 1-3 1 2 1 2 1 2 1 5 1 7 1 5 1 9 1 7 1 8 1 9 1 11 1 11 1 10 1 11 1 10 1 11 1 11 1 11 1 9 1 5 1-4 1-2 1-1 1-9 1-13 1-18 1-18 1-21 1-22 1-23 1-20 1-22 1-16 1-16 1-10 1-5 1 2 1 8 1 7 1 9 1 14 1 20 1 15 1 17 1 19 1 17 1 18 1 14 1 15 1 7 1 7 1 9 1 6 1 8 1 6 1 5 1 5 1 5 1 2 1 4 1 3 1 3 1 1 1 3 1 2 1 3 1 0 1 2 1 0 1 3 1-1 1 1 1 1 1 1 1-2 1 1 1 2 1 0 1 0 1 2 1-3 1 0 1 1 1-1 1 0 1 1 1 0 1-2 1 3 1-3 1 2 1-1 1 3 1-1 1 0 1 1 1-4 1 2 1 0 1 0 1-1 1 0 1 1 1 0 1 2 1-2 1 0 1 1 1 2 1-1" stroke="#ffff00" vector-effect="non-scaling-stroke"/>
<path d="M0 487l 1-1 1 2 1-2 1 2 1-3 1 1 1 0 1 1 1 0 1 2 1-1 1-1 1 0 1 0 1 0 1-1 1 2 1-2 1-1 1 3 1 1 1-3 1 2 1-2 1 1 1 0 1 0 1-2 1 2 1-2 1 2 1 0 1-3 1 3 1-1 1 0 1 0 1-2 1-4 1-1 1-5 1-3 1-3 1-3 1-3 1-5 1-3 1-3 1-3 1-6 1-1 1-3 1-6 1-3 1-2 1-5 1-4 1-1 1-5 1-3 1-5 1-3 1-4 1-3 1-2 1-6 1-3 1-6 1-4 1-3 1-1 1-4 1-3 1-3 1-1 1-1 1-3 1 0 1-2 1 0 1 1 1-1 1 5 1 1 1 4 1-1 1 2 1 1 1-6 1 0 1-6 1-5 1-7 1-9 1-11 1-7 1-7 1-7 1-5 1-2 1 1 1 2 1 3 1 6 1 5 1 6 1 8 1 7 1 9 1 10 1 9 1 9 1 12 1 10 1 10 1 13 1 8 1 13 1 7 1 5 1-1 1-3 1-5 1-7 1-13 1-16 1-21 1-19 1-21 1-21 1-24 1-19 1-14 1-16 1-11 1-3 1 1 1 7 1 8 1 12 1 13 1 15 1 16 1 17 1 21 1 16 1 17 1 17 1 7 1 11 1 8 1 6 1 8 1 7 1 1 1 9 1 6 1 2 1 4 1 3 1 2 1 7 1 2 1-2 1 3 1 3 1 2 1 0 1 0 1 1 1 3 1 1 1-1 1 3 1-1 1 2 1-2 1-1 1 0 1 2 1-1 1-1 1 1 1-1 1 2 1 1 1-3 1 3 1-2 1 1 1 1 1 0 1-2 1 1 1 1 1 2 1-1 1 0 1-1 1-1 1-1 1 1 1 2 1-2 1-1 1 3 1-1 1-1 1 2 1-4" stroke="#00ff00" vector-effect="non-scaling-stroke"/>
<path d="M0 487l 1-1 1 1 1 1 1-2 1 2 1 0 1-1 1 1 1-1 1-1 1 3 1 0 1-4 1 5 1-3 1 1 1-1 1 0 1 0 1-1 1 1 1 0 1-1 1-2 1 1 1 0 1 2 1 1 1-2 1-2 1 3 1 0 1-1 1 0 1 1 1-1 1-1 1 0 1-3 1 0 1-6 1-4 1-3 1-5 1-2 1-3 1-2 1-5 1-5 1-3 1-1 1-6 1-2 1-3 1-4 1-2 1-3 1-5 1-3 1-3 1-7 1-4 1-3 1-2 1-2 1-5 1-4 1-4 1-5 1-3 1-3 1-3 1-2 1-3 1-2 1-1 1-2 1 0 1-1 1-2 1 3 1-2 1 5 1 0 1 4 1 3 1-2 1-1 1-1 1-4 1-4 1-7 1-8 1-6 1-8 1-9 1-10 1-3 1-7 1-1 1 0 1 4 1 0 1 7 1 5 1 3 1 8 1 10 1 7 1 11 1 7 1 12 1 12 1 9 1 11 1 8 1 12 1 9 1 9 1 3 1-1 1-2 1-3 1-6 1-15 1-13 1-20 1-21 1-20 1-22 1-21 1-17 1-18 1-12 1-10 1-6 1 1 1 7 1 7 1 10 1 14 1 15 1 17 1 18 1 20 1 15 1 18 1 15 1 7 1 11 1 7 1 6 1 9 1 5 1 6 1 4 1 2 1 9 1 3 1 3 1 5 1 1 1 3 1 1 1 0 1 2 1 3 1 2 1 1 1-1 1 2 1 0 1 0 1 3 1 0 1 1 1-4 1 2 1-2 1 3 1-1 1-1 1 0 1 2 1 1 1-2 1-1 1 2 1-2 1 4 1 0 1 0 1 0 1-2 1 1 1-1 1 0 1 2 1-2 1 2 1-2 1 1 1 0 1 0 1-1 1 0 1 2 1-3 1 3 1 1" stroke="#0000ff" vector-effect="non-scaling-stroke"/>
<path d="M0 486l 1 3 1-2 1-3 1 3 1-2 1 4 1-1 1 0 1 0 1 0 1 1 1-2 1-2 1 2 1-2 1 2 1 2 1-1 1-2 1 1 1-1 1 0 1 2 1-1 1 0 1 0 1 0 1 1 1-2 1 0 1 0 1-1 1 0 1-2 1 5 1-4 1 2 1-3 1 0 1-7 1 0 1-2 1-3 1-5 1-4 1-2 1-3 1-4 1-3 1-5 1 1 1-5 1-5 1-1 1-4 1-7 1-1 1-2 1-4 1-4 1-1 1-7 1-1 1-6 1-3 1-6 1-1 1-2 1-5 1-6 1-2 1-3 1-3 1-5 1 2 1-4 1 2 1-2 1-3 1 0 1 1 1 3 1 2 1 2 1 3 1 0 1 0 1 0 1-2 1-2 1-7 1-5 1-9 1-7 1-9 1-8 1-9 1-6 1-2 1-5 1 1 1 5 1 1 1 1 1 8 1 3 1 12 1 7 1 8 1 9 1 8 1 10 1 14 1 8 1 10 1 9 1 10 1 11 1 11 1 3 1 0 1-7 1-3 1-6 1-10 1-19 1-17 1-20 1-18 1-23 1-21 1-17 1-15 1-14 1-12 1-3 1 1 1 6 1 7 1 11 1 14 1 15 1 15 1 18 1 17 1 18 1 17 1 12 1 11 1 9 1 7 1 7 1 8 1 4 1 4 1 8 1 5 1 2 1 5 1 3 1 4 1 1 1 5 1-2 1 2 1 3 1 0 1 4 1 0 1 2 1 2 1 0 1 0 1 2 1-4 1 2 1 2 1-2 1 0 1-1 1 4 1-3 1 1 1 0 1 0 1 0 1 0 1 2 1-2 1 0 1 1 1 1 1-1 1 0 1 0 1 0 1 1 1 0 1-1 1 0 1 1 1-1 1 0 1 1 1-1 1-2 1 1 1 1 1-1 1 0" stroke="#dc143c" vector-effect="non-scaling-stroke"/>
<path d="M0 486l 1-1 1 2 1 1 1-3 1 2 1-1 1 3 1-1 1 1 1-1 1 1 1-1 1-1 1-1 1 2 1-2 1 1 1 0 1 1 1-2 1 1 1 0 1 2 1-3 1 0 1 2 1 0 1 1 1-2 1-1 1 0 1 1 1 0 1 1 1 0 1 0 1-3 1 0 1-3 1-4 1 0 1-3 1-4 1-4 1-1 1-7 1-2 1-2 1-2 1-4 1-4 1-3 1-5 1-2 1-3 1-3 1-4 1-2 1-3 1-4 1-5 1 0 1-6 1-4 1-4 1-1 1-4 1-5 1-3 1-6 1-1 1-5 1-2 1-3 1-2 1 0 1 0 1-3 1 0 1-1 1 0 1 4 1 1 1 2 1 1 1 2 1-1 1-4 1 1 1-2 1-4 1-7 1-7 1-11 1-6 1-8 1-8 1-5 1-7 1 1 1 1 1 0 1 1 1 7 1 6 1 3 1 6 1 8 1 10 1 9 1 9 1 10 1 10 1 10 1 10 1 10 1 11 1 9 1 9 1 6 1-4 1 0 1-8 1-4 1-11 1-18 1-16 1-19 1-21 1-19 1-22 1-18 1-16 1-10 1-11 1-4 1 2 1 6 1 7 1 7 1 13 1 16 1 18 1 17 1 15 1 18 1 16 1 12 1 12 1 9 1 6 1 8 1 9 1 2 1 6 1 6 1 3 1 4 1 2 1 5 1 3 1 3 1 1 1 4 1 0 1 4 1-1 1 2 1 0 1 2 1 0 1 2 1 0 1-1 1 1 1 1 1 0 1-1 1 1 1 1 1-3 1 2 1-2 1 1 1 1 1 0 1 2 1-1 1-1 1-1 1 2 1-3 1 3 1-1 1-1 1 2 1-2 1 1 1 0 1 2 1 0 1-3 1 0 1 0 1 2 1-1 1 1 1 0 1 1 1 0" stroke="#20b2aa" vector-effect="non-scaling-stroke"/>
<path d="M0 487l 1 0 1 1 1 0 1-3 1 2 1 0 1-1 1 1 1 0 1-2 1 3 1 0 1-2 1 2 1-3 1 3 1 0 1-2 1 1 1 0 1-2 1 3 1-1 1 0 1 0 1-2 1 4 1-2 1 1 1-3 1 2 1 0 1 0 1 1 1 0 1-2 1 0 1-2 1-2 1 0 1-5 1-3 1-5 1-3 1-2 1-2 1-2 1-5 1-2 1-3 1-3 1-3 1-3 1-4 1-1 1-7 1-1 1-2 1-5 1-3 1-4 1-3 1-4 1-3 1-5 1-2 1-3 1-4 1-5 1-1 1-4 1-4 1-5 1-2 1 0 1 0 1-5 1 2 1-3 1 2 1 0 1 0 1 3 1 2 1 1 1 1 1-2 1 2 1-2 1-5 1 0 1-9 1-9 1-8 1-7 1-7 1-9 1-4 1-5 1-6 1 2 1 2 1 5 1 2 1 5 1 7 1 4 1 10 1 9 1 6 1 9 1 13 1 11 1 9 1 8 1 10 1 11 1 11 1 8 1 5 1-4 1-2 1-2 1-10 1-10 1-15 1-15 1-22 1-14 1-24 1-20 1-16 1-13 1-16 1-11 1-2 1 0 1 5 1 7 1 9 1 16 1 12 1 18 1 15 1 17 1 15 1 17 1 12 1 10 1 8 1 8 1 7 1 8 1 5 1 6 1 4 1 4 1 4 1 4 1 0 1 3 1 4 1 5 1 3 1 0 1 1 1 1 1 2 1 0 1 1 1 1 1-1 1 1 1 1 1 2 1-2 1 0 1 2 1 0 1 1 1 1 1 0 1-2 1 0 1 2 1-2 1 0 1 1 1-1 1 0 1 0 1-1 1 1 1 1 1 0 1-1 1 0 1 1 1 0 1 1 1-2 1 1 1 0 1 2 1-2 1 1 1 0 1 0 1 0 1 1" stroke="#4682b4" vector-effect="non-scaling-stroke"/>
<path d="M0 486l 1 1 1 1 1-1 1 1 1 0 1-1 1-1 1 0 1 2 1-2 1 3 1-2 1-1 1 0 1 1 1 3 1-2 1 0 1-1 1-1 1 1 1 1 1 2 1-5 1 2 1 3 1-1 1-2 1 1 1-1 1 1 1-2 1 0 1 1 1 3 1-5 1 0 1-3 1 2 1-4 1-2 1-4 1-4 1-2 1-5 1 0 1-1 1-5 1-2 1-4 1-3 1-2 1-2 1-6 1-2 1-2 1-5 1-3 1-4 1-2 1-1 1-5 1-3 1-5 1-2 1-3 1-7 1-2 1-4 1-5 1-2 1-3 1-2 1-4 1 0 1-1 1-3 1 0 1-3 1 1 1 1 1 1 1 2 1 1 1 2 1 1 1 2 1-3 1-1 1-2 1-4 1-8 1-10 1-7 1-8 1-6 1-8 1-7 1-5 1 2 1-2 1 1 1 4 1 5 1 3 1 5 1 5 1 10 1 9 1 5 1 12 1 9 1 10 1 9 1 14 1 9 1 9 1 8 1 9 1 4 1-2 1-2 1-4 1-6 1-12 1-12 1-19 1-19 1-16 1-24 1-16 1-19 1-11 1-16 1-10 1-6 1 4 1 4 1 7 1 11 1 12 1 16 1 13 1 18 1 16 1 16 1 14 1 14 1 9 1 8 1 6 1 7 1 7 1 4 1 10 1 3 1 4 1 3 1 3 1 4 1 3 1 2 1 2 1 4 1-1 1 3 1 2 1 1 1 2 1 0 1-1 1 3 1-2 1 2 1 0 1-1 1 2 1 0 1-2 1 2 1-1 1 1 1 2 1-1 1-1 1-1 1 2 1-1 1 0 1-1 1 5 1-5 1 1 1 1 1 1 1-2 1 1 1-1 1 3 1-2 1 0 1 0 1 2 1-2 1 1 1 0 1-2 1 1 1 0 1 1" stroke="#7b68ee" vector-effect="non-scaling-stroke"/>
<path d="M0 487l 1-1 1 0 1 0 1 3 1-1 1 0 1 2 1-4 1 4 1-3 1-1 1 2 1 3 1-5 1 2 1-1 1 0 1 1 1-1 1 1 1-2 1 0 1 2 1-2 1 0 1 2 1-3 1 1 1 2 1-1 1 2 1-3 1-1 1 1 1 1 1 1 1-2 1-1 1-3 1-4 1 2 1-6 1-2 1-3 1-3 1-2 1-3 1-2 1-3 1-3 1-4 1-4 1 0 1-5 1-2 1-3 1-2 1-4 1-3 1-5 1-2 1-5 1-2 1-5 1-1 1-4 1-3 1-4 1-3 1-5 1-3 1-2 1-3 1-3 1-3 1 2 1-3 1-2 1 0 1-4 1 3 1 1 1 0 1 3 1 3 1 2 1-2 1-1 1-1 1-3 1-4 1-5 1-9 1-8 1-8 1-6 1-11 1-5 1-2 1-4 1 0 1 2 1 4 1 3 1 2 1 5 1 10 1 7 1 8 1 9 1 8 1 10 1 10 1 9 1 10 1 8 1 11 1 11 1 6 1 8 1-4 1 1 1-6 1-8 1-10 1-15 1-17 1-18 1-17 1-20 1-19 1-16 1-13 1-14 1-9 1-4 1 1 1 6 1 5 1 11 1 12 1 13 1 16 1 16 1 12 1 20 1 14 1 15 1 7 1 9 1 6 1 9 1 6 1 4 1 5 1 5 1 5 1 2 1 5 1 1 1 3 1 2 1 4 1 1 1 4 1-1 1 2 1 0 1 1 1 1 1 2 1-2 1 3 1-1 1-1 1 5 1-4 1 2 1 0 1 0 1 1 1-2 1-1 1 4 1-1 1-2 1 2 1 1 1 0 1-1 1 0 1 0 1 2 1-2 1 0 1-1 1 1 1 1 1-2 1 1 1 0 1 1 1-2 1 1 1 1 1-1 1 1 1-1 1-1 1 0" stroke="#ee82ee" vector-effect="non-scaling-stroke"/>
<path d="M0 487l 1 2 1-3 1 1 1 0 1-1 1 2 1-1 1 1 1 1 1-2 1 2 1-2 1 0 1-1 1 2 1 0 1-2 1 2 1-2 1 2 1 0 1-2 1 3 1-1 1 2 1-3 1 0 1 0 1-1 1 1 1 1 1-1 1 1 1 1 1 0 1-3 1-1 1 1 1-2 1-3 1-2 1-2 1-2 1-7 1-2 1-1 1-5 1-1 1-2 1-3 1-2 1-5 1 0 1-3 1-3 1-4 1-2 1-6 1-1 1-5 1-3 1 0 1-8 1-1 1-3 1-5 1-2 1-5 1-3 1-1 1-4 1-6 1-3 1-4 1 2 1-3 1 0 1-2 1 0 1-1 1 0 1 0 1 3 1 3 1 1 1 1 1-1 1 1 1-2 1-5 1-2 1-6 1-9 1-7 1-10 1-8 1-6 1-6 1-5 1-1 1 0 1 3 1 1 1 4 1 5 1 5 1 6 1 8 1 7 1 8 1 10 1 8 1 14 1 6 1 10 1 10 1 11 1 8 1 9 1 2 1 1 1-4 1-3 1-3 1-14 1-14 1-17 1-16 1-20 1-18 1-19 1-15 1-12 1-14 1-11 1-3 1 2 1 4 1 8 1 8 1 12 1 15 1 15 1 16 1 15 1 15 1 14 1 11 1 11 1 9 1 7 1 6 1 5 1 8 1 5 1 3 1 4 1 5 1 2 1 3 1 2 1 4 1 1 1 2 1 1 1 3 1 0 1 1 1 4 1-1 1 0 1-1 1 2 1-1 1 2 1 1 1-1 1 0 1-1 1 0 1 2 1-1 1 0 1 1 1-1 1 0 1 2 1-1 1 0 1 3 1-3 1 2 1-2 1 1 1 0 1-1 1 0 1 0 1 0 1 1 1 0 1-1 1-1 1 1 1 0 1 0 1 0 1 1 1-2 1 2" stroke="#ffa07a" vector-effect="non-scaling-stroke"/>
<path d="M0 489l 1-3 1 0 1 3 1-1 1 0 1-2 1-1 1 3 1-1 1 0 1 0 1 2 1-1 1 0 1-1 1 0 1 1 1-1 1 1 1 0 1-2 1 2 1-2 1 3 1 0 1-3 1 1 1 0 1 1 1-1 1 2 1 0 1-3 1 1 1 0 1 0 1-3 1 2 1-3 1-3 1-2 1-3 1 0 1-5 1-3 1-1 1-3 1-1 1-5 1-1 1-2 1-3 1-3 1-3 1-5 1-1 1-2 1-5 1-3 1-2 1-2 1-4 1-4 1-5 1-4 1 0 1-4 1-4 1-4 1-3 1-5 1-3 1-3 1 0 1-5 1 2 1-2 1-5 1 2 1 0 1 0 1 2 1-2 1 5 1 0 1 1 1 1 1-3 1 0 1-1 1-7 1-3 1-10 1-8 1-7 1-7 1-8 1-6 1-4 1-2 1-1 1 1 1 5 1 0 1 6 1 4 1 10 1 5 1 9 1 8 1 9 1 9 1 9 1 8 1 11 1 9 1 10 1 10 1 7 1 4 1 1 1-3 1-5 1-6 1-10 1-13 1-14 1-22 1-16 1-17 1-18 1-15 1-15 1-14 1-7 1-6 1 4 1 4 1 7 1 7 1 14 1 12 1 14 1 16 1 15 1 16 1 15 1 13 1 7 1 8 1 4 1 9 1 8 1 3 1 7 1 3 1 4 1 4 1 3 1 5 1 1 1 1 1 5 1 2 1-1 1 2 1 1 1-1 1 4 1 2 1 1 1-2 1 3 1-2 1-1 1 3 1-2 1 0 1 0 1-1 1 3 1 1 1-3 1 1 1 1 1 0 1-1 1 1 1-1 1-1 1 2 1 0 1 0 1 4 1-6 1 2 1-1 1 1 1 1 1 0 1-2 1 1 1 1 1-2 1 2 1-1 1 1 1-4 1 4 1 0" stroke="#808000" vector-effect="non-scaling-stroke"/>
<path d="M0 487l 1 1 1 0 1-1 1 2 1-1 1-3 1 3 1 1 1-1 1 2 1-3 1 2 1 1 1 0 1-3 1 1 1 0 1-2 1 2 1-3 1 3 1 0 1-1 1 0 1 1 1 0 1 0 1-1 1 1 1-1 1 2 1-1 1-1 1 0 1-1 1-1 1 3 1-3 1 0 1-2 1-3 1-2 1-4 1-2 1-1 1-4 1-1 1-4 1-4 1-2 1 1 1-6 1-1 1-5 1 0 1-3 1-5 1-3 1-2 1-5 1-2 1-3 1-4 1-4 1-4 1-1 1-5 1-3 1-3 1-2 1-7 1 0 1-4 1-3 1-3 1 4 1-6 1-1 1 0 1-1 1 2 1 1 1 1 1 1 1 1 1 1 1 0 1-1 1-3 1-1 1-5 1-5 1-8 1-7 1-7 1-8 1-8 1-8 1-1 1-6 1 4 1 1 1 1 1 4 1 3 1 7 1 4 1 10 1 7 1 10 1 5 1 11 1 7 1 11 1 9 1 10 1 12 1 8 1 9 1 3 1-2 1-1 1-4 1-8 1-9 1-13 1-17 1-15 1-19 1-17 1-18 1-15 1-12 1-13 1-10 1-3 1 3 1 5 1 3 1 10 1 12 1 15 1 11 1 16 1 16 1 15 1 13 1 12 1 9 1 5 1 10 1 5 1 6 1 6 1 3 1 5 1 4 1 4 1 4 1 2 1 3 1 2 1 4 1 2 1-2 1 3 1 1 1 1 1 1 1 0 1 3 1-1 1-2 1 2 1 1 1 0 1 2 1 1 1-1 1 0 1-2 1 0 1 1 1 0 1 0 1 2 1-2 1-1 1 2 1-1 1 1 1 0 1 2 1 0 1 0 1-3 1 0 1 1 1 0 1 2 1-1 1-1 1 1 1 0 1-2 1 1 1-1 1 3 1-2 1 4" stroke="#f0e68c" vector-effect="non-scaling-stroke"/>
<path d="M0 486l 1 2 1 2 1 0 1-2 1 0 1-1 1 3 1-5 1 3 1-1 1 2 1-1 1 0 1-2 1 2 1 2 1-3 1-2 1 3 1 0 1-1 1-2 1 3 1 0 1-1 1 2 1-1 1-2 1 1 1-1 1 1 1 2 1-2 1-1 1 1 1 1 1-3 1 1 1 0 1-4 1-4 1-1 1 0 1-2 1-6 1-1 1-2 1-2 1-4 1-2 1-2 1-3 1-5 1 0 1-5 1-1 1-2 1-5 1-3 1-2 1-1 1-7 1-2 1-2 1-3 1-3 1-5 1-4 1-2 1-5 1-2 1-4 1-3 1 0 1-4 1-2 1-1 1-2 1 0 1-1 1 1 1 3 1 1 1 2 1-1 1 2 1 1 1-1 1-3 1-2 1-4 1-5 1-8 1-9 1-7 1-7 1-8 1-7 1-4 1-1 1 1 1 2 1 1 1 2 1 5 1 6 1 5 1 7 1 7 1 7 1 11 1 10 1 7 1 10 1 9 1 9 1 11 1 9 1 8 1 1 1 0 1-1 1-4 1-5 1-12 1-11 1-17 1-16 1-16 1-16 1-20 1-17 1-13 1-10 1-9 1-2 1 1 1 4 1 7 1 9 1 11 1 13 1 14 1 14 1 16 1 12 1 15 1 10 1 11 1 6 1 7 1 7 1 4 1 6 1 4 1 7 1 5 1 2 1 4 1 0 1 3 1 2 1 3 1 0 1 3 1 3 1 1 1-1 1 4 1-4 1 3 1 3 1-3 1 0 1 2 1 2 1-2 1-1 1 2 1 1 1-2 1-2 1 2 1 2 1-2 1 1 1-1 1 2 1-2 1-1 1 2 1 1 1 2 1-2 1-3 1 2 1 1 1 0 1 0 1-2 1-1 1 3 1 1 1-2 1 0 1 1 1 0 1 1 1-3 1 0" stroke="#32cd32" vector-effect="non-scaling-stroke"/>
<path d="M0 487l 1-1 1 0 1 2 1-1 1 0 1 1 1-2 1 3 1 0 1-2 1 3 1-2 1-1 1 3 1-1 1-1 1 0 1 0 1-1 1 2 1-3 1 4 1-1 1-1 1 1 1-1 1 0 1 0 1 1 1-1 1 0 1 0 1 0 1-1 1 0 1 0 1 0 1-1 1-3 1 0 1-3 1-1 1-3 1-3 1-2 1-3 1-3 1-1 1-2 1-2 1-1 1-5 1-1 1-4 1-3 1-4 1-1 1-2 1-6 1-1 1-4 1-2 1-4 1-4 1-3 1-4 1-2 1-4 1-3 1-3 1-2 1-6 1-2 1 0 1-3 1-2 1-3 1 1 1-3 1 1 1 1 1 1 1 1 1 3 1 0 1 1 1 0 1-1 1-2 1-2 1-4 1-7 1-6 1-9 1-8 1-8 1-6 1-6 1-3 1-3 1 0 1 3 1 3 1-1 1 6 1 5 1 5 1 8 1 8 1 7 1 8 1 12 1 4 1 12 1 10 1 8 1 10 1 11 1 4 1 5 1-1 1-3 1-1 1-9 1-7 1-13 1-16 1-15 1-17 1-20 1-14 1-18 1-11 1-10 1-9 1-4 1 2 1 5 1 7 1 9 1 8 1 15 1 12 1 16 1 13 1 13 1 14 1 10 1 9 1 9 1 7 1 5 1 7 1 6 1 4 1 4 1 3 1 5 1 2 1 2 1 5 1 0 1 2 1 1 1 3 1-1 1 3 1 1 1 2 1 1 1-1 1 0 1 0 1 1 1 1 1 1 1-1 1-1 1 3 1-1 1-2 1 0 1 2 1-1 1 0 1 0 1-1 1 2 1 0 1-1 1-1 1 1 1 1 1 0 1 2 1-3 1 1 1 0 1 0 1 0 1 1 1 2 1-4 1 2 1 0 1-1 1 1 1 0 1-1 1 1" stroke="#8a2be2" vector-effect="non-scaling-stroke"/>
<path d="M0 490l 1-3 1 0 1 0 1 2 1-2 1 0 1 1 1 0 1-1 1 1 1 1 1-2 1 2 1 0 1-2 1 0 1 2 1 0 1-3 1 1 1 0 1 1 1-1 1 1 1 2 1-2 1-1 1 0 1 0 1 2 1-2 1 1 1 0 1 0 1-2 1 1 1 1 1-3 1 1 1-2 1-3 1-1 1-4 1-2 1-4 1-1 1-3 1-3 1 1 1-2 1-5 1-2 1 0 1-6 1-2 1 0 1-5 1-1 1-5 1-3 1-2 1-5 1-1 1-5 1-3 1-3 1 0 1-6 1-3 1-3 1-3 1-4 1-4 1-1 1-2 1-2 1-1 1-1 1-2 1 0 1 1 1 2 1 1 1 0 1 3 1-1 1 1 1-1 1-2 1-2 1-5 1-8 1-2 1-9 1-10 1-8 1-4 1-8 1-4 1-2 1 0 1 1 1 3 1 3 1 5 1 4 1 5 1 7 1 7 1 8 1 8 1 8 1 12 1 9 1 9 1 8 1 9 1 10 1 8 1 4 1-3 1-2 1-3 1-4 1-10 1-14 1-14 1-16 1-17 1-15 1-19 1-14 1-9 1-14 1-8 1-4 1 3 1 5 1 6 1 9 1 9 1 11 1 13 1 17 1 14 1 13 1 12 1 10 1 10 1 7 1 6 1 6 1 7 1 6 1 4 1 3 1 5 1 0 1 5 1 2 1 3 1 2 1 3 1 2 1 3 1-3 1 4 1 0 1 2 1 0 1 0 1 1 1 0 1 2 1-1 1-1 1 1 1 0 1-1 1 2 1-1 1 0 1-1 1 2 1 0 1 1 1-1 1 0 1 0 1 0 1-1 1 1 1 1 1 1 1-3 1 3 1-2 1 0 1 2 1 0 1 0 1-1 1 0 1 0 1 0 1 0 1 0 1 1 1-2 1 1" stroke="#e0ffff" vector-effect="non-scaling-stroke"/>
<path d="M0 487l 1 0 1 2 1-1 1 0 1-2 1 1 1 2 1 0 1-3 1 1 1 1 1 0 1 1 1-1 1 0 1 1 1-1 1 0 1 0 1-1 1 1 1 2 1-3 1 0 1-1 1 2 1 3 1-5 1 4 1-2 1 0 1-1 1 0 1 0 1 2 1 0 1-1 1-1 1-2 1-3 1-3 1 0 1-2 1-3 1-2 1-2 1-2 1-2 1-3 1-1 1-3 1-2 1-2 1-4 1 0 1-4 1-3 1-2 1-2 1-4 1-4 1-2 1-4 1-3 1-2 1-3 1-4 1-3 1-6 1-1 1-4 1-3 1-2 1-3 1 0 1-5 1 1 1-1 1-1 1-1 1-1 1 2 1 2 1 0 1 3 1 0 1-1 1 0 1-3 1 0 1-7 1-2 1-10 1-7 1-7 1-7 1-9 1-5 1-2 1-4 1 1 1 1 1 2 1 0 1 6 1 4 1 7 1 8 1 4 1 11 1 6 1 8 1 9 1 10 1 11 1 8 1 7 1 11 1 6 1 6 1-4 1 0 1-5 1-2 1-10 1-15 1-15 1-13 1-18 1-14 1-19 1-13 1-11 1-10 1-8 1-6 1 2 1 5 1 5 1 8 1 9 1 14 1 12 1 13 1 16 1 13 1 11 1 12 1 8 1 7 1 7 1 6 1 8 1 4 1 4 1 4 1 5 1 3 1 1 1 4 1 2 1 1 1 2 1 2 1 4 1-1 1 1 1 2 1 1 1 0 1 1 1 2 1-1 1 1 1-2 1-2 1 1 1 2 1 0 1 2 1-3 1 1 1 0 1-1 1 2 1-1 1 1 1-3 1 2 1 1 1 0 1 0 1-1 1 2 1-2 1 1 1 1 1 1 1-1 1 0 1 0 1-2 1 4 1-1 1-1 1 0 1-2 1 3 1-3 1 2" stroke="#da70d6" vector-effect="non-scaling-stroke"/>
<path d="M0 489l 1 0 1-2 1 2 1-2 1 2 1-1 1 0 1 0 1-1 1 3 1-2 1-1 1 0 1 1 1 1 1 0 1 0 1-1 1-1 1-1 1 1 1 1 1-1 1 1 1-1 1 1 1-1 1 1 1-1 1 0 1 2 1-3 1 2 1-1 1-1 1 0 1 1 1-2 1 1 1 0 1-3 1-4 1-1 1-5 1-1 1-1 1 1 1-5 1-1 1-5 1 0 1-3 1-2 1-2 1-4 1-2 1-3 1-1 1-4 1-1 1-3 1-5 1-3 1-6 1 0 1-6 1-1 1-3 1-4 1-2 1-2 1-4 1-3 1-2 1-3 1 0 1-4 1-2 1 1 1-1 1 0 1 3 1 1 1 2 1-1 1 2 1 0 1-1 1-2 1-1 1-4 1-7 1-7 1-7 1-7 1-8 1-7 1-7 1-5 1-1 1 0 1 2 1 2 1 3 1 5 1 4 1 5 1 7 1 7 1 6 1 10 1 7 1 10 1 9 1 8 1 10 1 8 1 8 1 9 1 4 1-2 1-4 1-3 1-3 1-10 1-12 1-12 1-18 1-16 1-14 1-19 1-11 1-13 1-9 1-7 1-3 1 0 1 2 1 8 1 7 1 11 1 12 1 13 1 14 1 10 1 16 1 11 1 11 1 9 1 7 1 7 1 3 1 7 1 8 1 2 1 4 1 2 1 6 1 2 1 1 1 2 1 3 1 1 1 4 1 2 1-2 1 3 1 0 1 1 1 1 1 0 1 1 1 2 1 0 1 0 1-1 1 1 1 1 1-2 1 3 1 0 1-5 1 5 1-2 1-1 1 3 1-1 1-2 1 2 1 0 1 1 1-2 1 0 1 0 1 3 1-4 1 0 1 1 1 1 1-1 1-1 1 2 1-1 1 0 1 0 1 2 1 0 1-1 1-1 1 1" stroke="#5f9ea0" vector-effect="non-scaling-stroke"/>
<path d="M0 487l 1 1 1-1 1-1 1 4 1-2 1 0 1-1 1 0 1 1 1 1 1 0 1-2 1 0 1 2 1-1 1 2 1-1 1-1 1 3 1-2 1-2 1 0 1 0 1 1 1 0 1 0 1-1 1 0 1 1 1-1 1 0 1 1 1-1 1 0 1-1 1 3 1-4 1-1 1 0 1 0 1-1 1 0 1-4 1-3 1-1 1-3 1-4 1 1 1-5 1-2 1 0 1-4 1-1 1 0 1-4 1-1 1-3 1-4 1 0 1-7 1-1 1-3 1-3 1-2 1-4 1-5 1-5 1 0 1-5 1-2 1-3 1-4 1 0 1-4 1-4 1 0 1-2 1 0 1-2 1-2 1 4 1 0 1 0 1 0 1 2 1 0 1 2 1-3 1-1 1-2 1-3 1-6 1-6 1-9 1-9 1-6 1-6 1-6 1-5 1-1 1 0 1 2 1 2 1 2 1 6 1 4 1 4 1 8 1 5 1 8 1 7 1 10 1 7 1 11 1 8 1 7 1 10 1 8 1 7 1 4 1-1 1-1 1-4 1-4 1-8 1-14 1-15 1-14 1-14 1-17 1-16 1-13 1-13 1-7 1-9 1-5 1 3 1 3 1 8 1 6 1 10 1 13 1 12 1 11 1 15 1 12 1 12 1 13 1 5 1 9 1 7 1 5 1 6 1 7 1 0 1 6 1 3 1 3 1 1 1 4 1 3 1 2 1 1 1 4 1 0 1 0 1 2 1 1 1 0 1 2 1 0 1 1 1-1 1 1 1 1 1-2 1 3 1-2 1 1 1 1 1-1 1 0 1 1 1 2 1-5 1 3 1-2 1 1 1 0 1 0 1 0 1-1 1 4 1-3 1 1 1 0 1-1 1-1 1 1 1 0 1 0 1 0 1 1 1-2 1 2 1-2 1 0 1 1 1-1 1 2" stroke="#cd853f" vector-effect="non-scaling-stroke"/>
<path d="M0 490l 1-3 1 0 1 1 1-1 1-1 1 2 1 0 1 1 1-1 1 1 1-1 1-1 1 1 1-1 1 1 1 1 1-2 1 1 1 0 1 0 1 0 1 0 1-2 1 2 1 0 1 0 1 2 1-2 1-2 1 2 1 0 1 0 1 1 1-1 1-2 1 1 1 1 1 1 1-5 1 0 1-1 1-3 1-2 1-2 1-3 1-1 1-1 1-1 1-3 1-2 1-3 1-1 1-2 1-2 1-5 1-1 1-4 1-1 1-3 1-3 1-3 1-5 1 0 1-4 1-2 1-4 1-4 1-2 1-3 1-4 1-2 1-4 1-2 1-3 1 0 1-1 1-5 1 0 1 0 1 0 1 1 1-1 1 4 1-2 1 2 1-1 1 1 1-1 1-2 1-2 1-5 1-7 1-5 1-8 1-6 1-6 1-9 1-5 1-4 1-2 1 1 1 2 1 1 1 3 1 5 1 2 1 6 1 6 1 8 1 5 1 9 1 9 1 12 1 5 1 8 1 9 1 10 1 6 1 8 1 6 1-2 1-1 1-6 1-3 1-9 1-13 1-12 1-16 1-15 1-14 1-18 1-12 1-13 1-6 1-8 1-6 1 1 1 7 1 5 1 7 1 11 1 10 1 12 1 15 1 11 1 13 1 12 1 9 1 10 1 5 1 5 1 7 1 7 1 6 1 3 1 4 1 3 1 4 1 1 1 1 1 6 1 0 1 2 1 2 1-2 1 3 1 4 1-2 1 3 1-1 1 1 1 0 1 0 1 1 1 0 1 1 1 0 1 0 1-2 1 1 1 0 1 0 1-1 1 4 1-3 1-1 1 2 1 1 1 0 1 1 1-1 1 0 1 1 1-1 1-2 1-1 1 2 1 0 1 1 1 0 1 1 1-2 1 1 1 3 1-3 1-1 1 1 1-1 1 1 1 0" stroke="#66cdaa" vector-effect="non-scaling-stroke"/>
<path d="M0 489l 1 0 1-1 1 0 1-1 1 2 1-2 1 1 1-1 1 4 1-3 1-1 1 1 1 0 1 0 1 0 1 0 1 0 1 1 1-2 1 2 1 0 1-1 1 0 1 0 1 2 1-2 1 0 1 0 1 2 1-2 1 1 1-1 1 0 1-2 1 3 1-2 1 3 1-4 1 0 1-3 1 1 1-2 1-4 1 1 1-4 1-2 1-2 1-1 1-1 1-1 1-6 1 0 1-2 1-2 1-3 1-1 1-4 1-2 1-3 1-4 1-1 1-2 1-5 1-3 1-4 1 1 1-5 1-4 1-3 1-4 1-4 1 0 1-5 1-1 1-2 1-3 1-1 1-2 1-1 1 0 1 0 1 2 1 2 1 2 1-1 1-1 1 3 1-3 1-2 1-2 1-1 1-9 1-7 1-6 1-6 1-7 1-8 1-6 1-4 1-2 1 1 1 1 1 4 1 1 1 3 1 5 1 4 1 7 1 6 1 9 1 6 1 9 1 11 1 7 1 8 1 6 1 12 1 7 1 7 1 4 1-3 1 0 1-3 1-6 1-8 1-10 1-16 1-12 1-13 1-19 1-14 1-12 1-12 1-9 1-8 1-5 1 4 1 5 1 3 1 7 1 11 1 14 1 9 1 14 1 11 1 13 1 12 1 10 1 9 1 5 1 8 1 4 1 4 1 4 1 7 1 4 1 4 1-1 1 6 1 1 1 2 1 1 1 2 1 3 1 0 1 1 1 1 1 1 1 4 1-2 1 1 1-1 1 2 1-1 1 0 1 1 1 1 1-1 1 0 1 1 1 0 1 1 1-1 1 0 1 1 1-3 1 1 1 3 1-3 1 1 1 2 1-1 1-1 1 0 1 0 1 2 1-2 1 0 1 2 1-2 1 1 1-1 1 1 1 0 1 1 1 0 1-2 1 2 1 0 1-2" stroke="#1e90ff" vector-effect="non-scaling-stroke"/>
<path d="M0 488l 1 0 1-2 1 1 1 1 1 0 1 2 1-3 1 2 1-1 1 1 1-2 1 1 1 0 1 0 1-1 1-1 1 0 1 2 1 0 1-1 1 3 1-2 1 1 1 0 1-1 1 2 1-1 1 0 1 0 1-1 1 0 1 1 1 0 1-2 1 0 1 2 1-1 1-2 1-3 1 2 1-3 1 0 1-2 1-3 1-2 1 1 1-6 1 1 1-3 1-2 1-1 1-2 1-2 1-3 1-3 1-2 1-4 1 1 1-5 1-3 1-1 1-4 1-2 1-2 1-3 1-6 1-1 1-1 1-4 1-3 1-5 1-2 1-3 1-3 1-2 1 0 1-1 1-4 1 1 1-1 1 0 1 2 1 1 1 1 1 0 1-1 1 2 1-3 1 1 1-3 1-5 1-6 1-5 1-7 1-7 1-8 1-7 1-5 1-4 1-4 1 3 1 1 1 1 1 1 1 5 1 4 1 7 1 4 1 9 1 7 1 7 1 6 1 10 1 8 1 9 1 7 1 10 1 8 1 7 1 4 1-1 1-2 1-4 1-4 1-7 1-14 1-11 1-16 1-13 1-15 1-14 1-13 1-12 1-8 1-9 1-3 1 5 1 3 1 4 1 8 1 10 1 9 1 11 1 14 1 14 1 11 1 12 1 7 1 8 1 9 1 4 1 8 1 4 1 4 1 2 1 3 1 5 1 5 1 2 1 1 1 3 1 2 1 2 1 2 1-1 1 3 1 1 1 1 1 0 1 0 1 2 1-2 1 4 1-3 1 0 1 2 1-1 1 0 1 1 1 0 1 1 1-2 1 1 1 2 1-1 1 0 1-2 1 1 1-1 1 2 1 0 1 0 1-2 1 1 1 0 1 0 1 0 1 1 1-1 1 2 1-2 1 1 1 0 1 0 1-2 1 0 1 1 1 2 1-1 1 0" stroke="#ff69b4" vector-effect="non-scaling-stroke"/>
<path d="M0 489l 1-1 1 0 1 0 1-2 1 3 1 1 1-2 1-2 1 1 1 2 1-1 1 0 1 1 1-2 1 3 1-1 1-1 1 1 1-2 1 1 1 0 1 1 1-2 1 0 1 2 1-2 1 2 1 0 1-1 1 1 1 1 1-3 1 0 1 3 1-4 1 3 1-3 1 1 1-1 1-2 1 0 1-2 1 0 1-3 1-1 1-6 1 2 1-3 1-1 1-2 1-4 1-1 1-2 1-2 1-1 1-4 1 1 1-5 1-2 1-3 1-3 1-3 1-1 1-1 1-7 1-3 1-3 1-2 1-4 1-3 1-4 1-3 1-2 1-2 1 1 1-6 1 0 1-2 1-1 1 1 1-1 1 1 1 2 1 0 1 1 1 3 1-1 1-4 1 0 1-3 1-2 1-5 1-7 1-7 1-8 1-6 1-8 1-5 1-4 1 0 1 0 1-1 1 1 1 4 1 1 1 8 1 3 1 9 1 4 1 6 1 8 1 8 1 10 1 8 1 8 1 9 1 9 1 5 1 10 1 1 1-1 1-2 1-3 1-4 1-8 1-10 1-14 1-13 1-15 1-13 1-16 1-10 1-11 1-10 1-7 1-4 1 2 1 4 1 5 1 10 1 6 1 11 1 12 1 12 1 12 1 12 1 12 1 7 1 10 1 4 1 7 1 5 1 6 1 4 1 4 1 3 1 6 1 3 1-2 1 5 1 2 1 1 1 4 1 2 1 0 1 0 1 2 1 1 1 0 1 2 1 0 1 0 1 2 1-3 1 2 1-1 1-1 1 2 1 0 1 0 1 1 1 2 1-3 1 1 1-1 1 1 1 0 1 0 1-3 1 1 1-1 1 1 1 1 1-1 1 0 1 1 1 0 1 1 1-1 1 0 1 1 1-1 1 2 1-1 1 0 1-1 1 1 1-2 1 2 1-2" stroke="#3cb371" vector-effect="non-scaling-stroke"/>
<path d="M0 487l 1 0 1 4 1-3 1 1 1-1 1 0 1 1 1 1 1-2 1 2 1-3 1 2 1-1 1-1 1 1 1 1 1-1 1 1 1-1 1 1 1 0 1 1 1-1 1-1 1 1 1 1 1-3 1 1 1-1 1-1 1 5 1-3 1-1 1 1 1 1 1-2 1 1 1 0 1-2 1-3 1 1 1-3 1-2 1-1 1 0 1-4 1 1 1-2 1-3 1-2 1-2 1-1 1-2 1-1 1-3 1-2 1-2 1-3 1-2 1-5 1-2 1-3 1-2 1-4 1-2 1-4 1-3 1-2 1-3 1-3 1-4 1-2 1-2 1-3 1-3 1-1 1-1 1-2 1-2 1-1 1 3 1 1 1 1 1 0 1 3 1-2 1 0 1-1 1 0 1-4 1-2 1-6 1-6 1-9 1-7 1-7 1-4 1-6 1-5 1-1 1 0 1 2 1-1 1 4 1 2 1 6 1 4 1 6 1 7 1 5 1 9 1 9 1 9 1 6 1 7 1 10 1 9 1 7 1 7 1 3 1-2 1 0 1-4 1-4 1-9 1-10 1-12 1-13 1-16 1-13 1-13 1-13 1-10 1-9 1-6 1-4 1 4 1 2 1 6 1 7 1 8 1 10 1 11 1 14 1 11 1 11 1 10 1 11 1 5 1 9 1 4 1 8 1 2 1 6 1 2 1 5 1 3 1 3 1 3 1 2 1 1 1 2 1 2 1 2 1 0 1 0 1 2 1 1 1 3 1 0 1-1 1 0 1 1 1 0 1 2 1-1 1 0 1-1 1 2 1 0 1-3 1 2 1-1 1 0 1 1 1 0 1 1 1-2 1 0 1 4 1-1 1-1 1 0 1-1 1 1 1-1 1 2 1-1 1 0 1-2 1 2 1-2 1 2 1 0 1 0 1-1 1 1 1-2 1 2 1-2" stroke="#000080" vector-effect="non-scaling-stroke"/>
<path d="M0 489l 1-1 1 0 1 2 1-2 1 2 1 0 1 0 1-2 1 1 1 0 1 0 1-2 1 1 1 0 1 3 1-2 1 0 1-2 1 0 1 1 1 0 1 0 1 0 1 0 1-1 1 2 1-2 1 1 1 0 1 0 1-2 1 3 1-1 1 0 1 0 1 0 1 0 1 0 1-1 1-1 1-2 1-2 1-1 1-2 1-3 1-1 1 0 1-3 1-1 1-2 1-2 1-2 1-1 1-1 1-4 1 0 1-3 1-4 1-1 1-3 1-3 1-2 1-3 1-2 1-3 1-5 1-3 1-3 1 0 1-7 1-2 1-2 1-3 1-3 1-1 1-1 1-3 1 2 1-3 1-2 1 4 1-1 1 2 1 1 1-1 1 2 1-1 1 0 1-4 1-1 1-2 1-7 1-7 1-8 1-6 1-7 1-6 1-3 1-7 1-1 1 1 1 0 1 4 1-1 1 6 1 2 1 5 1 8 1 5 1 6 1 8 1 8 1 6 1 11 1 7 1 6 1 10 1 10 1 3 1 4 1 0 1-2 1-3 1-3 1-8 1-11 1-11 1-14 1-12 1-15 1-14 1-14 1-9 1-7 1-9 1-2 1 1 1 3 1 8 1 4 1 9 1 11 1 12 1 10 1 11 1 12 1 9 1 11 1 9 1 5 1 5 1 6 1 4 1 7 1 1 1 5 1 3 1 1 1 5 1 0 1 3 1 3 1 1 1 1 1 1 1 0 1 3 1-1 1-1 1 3 1 2 1-2 1 0 1 0 1 0 1 1 1-1 1 1 1 1 1 2 1-4 1 2 1 3 1-4 1 3 1-1 1-1 1 1 1 0 1-1 1 2 1-2 1 0 1 0 1 2 1-4 1 4 1 1 1-3 1 1 1 1 1-2 1 1 1 1 1-1 1-1 1 2 1-1 1 1 1-1" stroke="#deb887" vector-effect="non-scaling-stroke"/>
<path d="M0 488l 1 3 1-3 1 1 1-2 1 2 1 1 1-2 1-1 1 1 1 0 1-1 1 2 1 0 1 0 1-1 1 0 1 1 1-1 1 1 1 1 1 1 1-3 1-2 1 2 1 3 1-2 1-1 1 0 1 1 1-1 1 1 1 0 1 0 1-4 1 3 1 0 1 0 1-1 1-1 1-2 1 0 1-2 1-1 1-2 1-2 1 0 1-1 1-2 1-2 1 0 1-4 1-1 1-1 1-3 1-2 1-2 1-3 1-2 1-2 1-2 1-4 1-3 1-3 1 0 1-5 1-2 1-4 1-4 1-2 1-2 1-4 1-2 1-2 1-4 1-1 1-3 1-1 1 0 1-2 1 2 1-1 1 0 1 3 1 0 1 0 1-1 1 3 1-3 1-2 1-2 1-2 1-7 1-7 1-6 1-5 1-9 1-6 1-6 1-3 1-2 1 1 1 3 1-1 1 3 1 2 1 5 1 4 1 8 1 3 1 8 1 6 1 10 1 7 1 6 1 10 1 9 1 7 1 7 1 6 1 2 1 1 1-1 1-5 1-2 1-7 1-11 1-12 1-14 1-13 1-13 1-14 1-13 1-9 1-8 1-7 1-3 1 2 1 5 1 3 1 7 1 9 1 10 1 10 1 12 1 13 1 9 1 11 1 10 1 7 1 5 1 4 1 7 1 7 1 2 1 5 1 4 1 2 1 2 1 3 1 1 1 4 1 1 1 1 1 2 1 1 1 1 1 2 1 0 1 2 1-1 1-1 1 2 1 0 1 0 1 1 1 0 1 0 1 0 1 3 1-1 1-2 1 1 1-1 1-1 1 2 1-1 1 0 1 1 1 2 1-2 1 0 1-1 1-1 1 2 1 0 1 0 1 0 1 0 1-1 1 1 1 0 1 1 1 0 1-2 1 1 1 1 1-2 1 2 1-1 1 1" stroke="#48d1cc" vector-effect="non-scaling-stroke"/>
<path d="M0 488l 1-1 1 2 1-1 1 2 1-1 1-1 1 1 1 1 1-2 1 1 1-1 1 0 1 1 1-1 1 2 1-2 1 0 1 1 1 1 1 0 1-1 1-1 1-1 1 0 1 2 1 0 1-1 1 1 1-2 1 0 1 2 1-1 1 0 1-1 1 2 1 1 1-1 1-1 1 0 1-2 1-2 1-1 1-1 1-2 1-1 1-1 1-2 1 0 1-2 1-4 1-1 1-1 1-2 1-4 1-2 1 0 1-4 1-1 1-2 1-4 1-2 1-3 1-3 1 0 1-3 1-3 1-3 1-5 1-2 1-3 1-1 1-4 1-5 1-2 1 0 1 0 1-5 1-1 1 1 1-2 1 3 1-3 1 3 1 2 1 0 1 2 1-3 1-2 1 0 1 0 1-4 1-7 1-6 1-7 1-7 1-6 1-7 1-5 1-3 1-4 1 2 1 1 1 1 1 3 1 2 1 4 1 5 1 4 1 9 1 6 1 7 1 6 1 9 1 6 1 9 1 6 1 11 1 7 1 6 1 3 1-1 1-2 1-3 1-3 1-6 1-9 1-17 1-9 1-13 1-14 1-15 1-9 1-9 1-9 1-6 1-3 1 0 1 4 1 5 1 6 1 6 1 14 1 10 1 10 1 11 1 13 1 8 1 9 1 7 1 7 1 4 1 7 1 4 1 4 1 1 1 6 1 2 1 6 1 1 1 2 1 2 1 1 1 2 1 1 1 1 1 0 1 0 1 4 1-2 1 2 1 1 1 1 1-2 1 2 1 0 1-1 1 2 1-1 1 1 1 1 1-2 1 2 1 0 1-2 1 1 1-1 1 0 1 2 1-2 1 0 1 2 1-2 1 1 1-1 1 3 1-3 1 3 1-2 1 0 1-2 1 2 1 0 1-1 1 1 1 0 1-1 1 0 1 3 1-2 1 2" stroke="#b22222" vector-effect="non-scaling-stroke"/>
<path d="M0 488l 1 0 1 1 1-1 1 1 1 1 1-2 1 1 1 0 1-1 1 0 1 0 1 1 1-1 1 2 1-3 1 2 1-1 1 0 1-1 1 2 1-1 1 1 1 0 1 0 1-1 1 0 1 0 1-1 1 2 1-2 1 1 1 1 1-2 1 2 1-1 1 0 1 1 1-2 1-1 1-1 1 0 1-2 1-2 1-2 1-1 1 0 1 0 1-5 1-1 1 0 1-1 1-2 1-3 1-2 1 0 1-4 1-2 1-1 1-3 1 0 1-4 1-5 1-1 1 0 1-7 1-2 1-2 1-3 1-3 1-3 1-4 1-1 1-4 1-2 1-2 1 1 1-2 1-4 1 2 1-3 1 1 1-1 1 3 1 2 1 0 1-1 1 1 1-2 1-1 1-1 1-4 1-6 1-6 1-6 1-7 1-6 1-7 1-5 1-6 1-1 1 3 1-2 1 2 1 3 1 1 1 5 1 4 1 6 1 4 1 8 1 7 1 7 1 9 1 8 1 8 1 6 1 9 1 7 1 8 1 0 1 1 1-2 1-3 1-6 1-6 1-9 1-10 1-12 1-13 1-16 1-13 1-7 1-11 1-7 1-9 1-1 1 1 1 4 1 5 1 6 1 7 1 9 1 12 1 12 1 9 1 12 1 8 1 10 1 6 1 7 1 8 1 2 1 6 1 4 1 2 1 4 1 3 1 4 1 2 1 2 1 2 1 2 1-2 1 4 1 0 1 1 1 1 1 1 1 1 1 0 1 2 1-4 1 1 1 1 1 0 1 2 1 0 1 1 1-3 1 3 1 1 1-2 1 1 1-1 1 1 1-1 1 1 1 0 1-1 1 1 1-1 1 2 1 1 1-1 1 0 1-3 1 0 1 2 1 0 1-1 1 3 1-2 1 0 1 0 1-2 1 1 1 1 1-1 1-1 1 2" stroke="#7fff00" vector-effect="non-scaling-stroke"/>
<path d="M0 488l 1 0 1 1 1 0 1 0 1-1 1 2 1 0 1 2 1-4 1 0 1 1 1 3 1-5 1 1 1 0 1 2 1 0 1-3 1 3 1-2 1 2 1-3 1 3 1-1 1-1 1 0 1-1 1 2 1 0 1 1 1-1 1-2 1 1 1 1 1-2 1 2 1 0 1-2 1 0 1 0 1-4 1-1 1 1 1 0 1-4 1 0 1-3 1-2 1 0 1-4 1 1 1-3 1 2 1-4 1-2 1-2 1-2 1-4 1-1 1-2 1-3 1 0 1-3 1-4 1-5 1 0 1-3 1-5 1-1 1-4 1-2 1-2 1-4 1-3 1-1 1-2 1-3 1 2 1-2 1 1 1-1 1 0 1 2 1 1 1-1 1 2 1-2 1 1 1-2 1-2 1-6 1-2 1-9 1-5 1-7 1-7 1-5 1-5 1-6 1 1 1 0 1 0 1 1 1 2 1 1 1 7 1 4 1 5 1 7 1 6 1 6 1 7 1 7 1 9 1 7 1 6 1 11 1 7 1 5 1 5 1-2 1-2 1-3 1-3 1-8 1-9 1-11 1-11 1-15 1-11 1-15 1-8 1-8 1-11 1-6 1 0 1 0 1 4 1 5 1 5 1 7 1 10 1 9 1 12 1 10 1 10 1 9 1 8 1 7 1 8 1 4 1 6 1 5 1 5 1 2 1 6 1 0 1 4 1 3 1 0 1 2 1 2 1 3 1-3 1 3 1 0 1 2 1-1 1 1 1 2 1-1 1 2 1 1 1-1 1 0 1 1 1 0 1-1 1 1 1 1 1 0 1-1 1 2 1-3 1 1 1 0 1 0 1 2 1-1 1-2 1 1 1 1 1-1 1 0 1 2 1 0 1-1 1 1 1 0 1 0 1-2 1 2 1 0 1-3 1 1 1 1 1-1 1 0 1 1 1-2" stroke="#ba55d3" vector-effect="non-scaling-stroke"/>
<path d="M0 489l 1 0 1 1 1-1 1-1 1 0 1 0 1-1 1 2 1 1 1-1 1-1 1 2 1-2 1 1 1 1 1-1 1 0 1-2 1 2 1 0 1-1 1 0 1 1 1-1 1 1 1 0 1 2 1-2 1 0 1-2 1 2 1-1 1-1 1 2 1 0 1-1 1 1 1-2 1-1 1 1 1-4 1 1 1-1 1-2 1-1 1 0 1-3 1-2 1-2 1 0 1-1 1-2 1-3 1 1 1-4 1-1 1-4 1 0 1-1 1-4 1-3 1-3 1-1 1-3 1-1 1-3 1-4 1-1 1-6 1-3 1-2 1-3 1-3 1-1 1-2 1 0 1-4 1-3 1 2 1 1 1-2 1 0 1 1 1 3 1-1 1 0 1 0 1-1 1-2 1 0 1-2 1-8 1-6 1-8 1-5 1-7 1-5 1-6 1-4 1 0 1 0 1-1 1 5 1 0 1 2 1 3 1 6 1 3 1 9 1 6 1 4 1 9 1 8 1 4 1 8 1 9 1 8 1 8 1 6 1 2 1 0 1-1 1-3 1-5 1-6 1-9 1-11 1-12 1-11 1-13 1-15 1-8 1-9 1-8 1-5 1-2 1-1 1 4 1 5 1 6 1 9 1 7 1 10 1 11 1 11 1 10 1 9 1 8 1 8 1 5 1 6 1 4 1 4 1 5 1 2 1 3 1 3 1 2 1 3 1 2 1 1 1 4 1 0 1 4 1-2 1 2 1 1 1 1 1 0 1 1 1-1 1 0 1 1 1 2 1-1 1-1 1 0 1 1 1 0 1 0 1-1 1 0 1 2 1 0 1 1 1-2 1 0 1 0 1-1 1 3 1-2 1 1 1-1 1 1 1-1 1-1 1 2 1 1 1 0 1-3 1 1 1 0 1 1 1-1 1 1 1 1 1-1 1-1 1 0 1 1" stroke="#daa520" vector-effect="non-scaling-stroke"/>
<path d="M0 490l 1-1 1-1 1 0 1 1 1 1 1 1 1-5 1 3 1 2 1-5 1 2 1 0 1-1 1 1 1 2 1-2 1 1 1-1 1 2 1-1 1 1 1 0 1 0 1-1 1 1 1 0 1-2 1-1 1 2 1 0 1-2 1 1 1 1 1-3 1 3 1 0 1-2 1 1 1 0 1-1 1-2 1-1 1-3 1 1 1-3 1-1 1-1 1 0 1-3 1 0 1 0 1-3 1-2 1-2 1-3 1-1 1 0 1-4 1 1 1-5 1-4 1 0 1-2 1-3 1-5 1 0 1-4 1-2 1-3 1-5 1 0 1-3 1-3 1-2 1-3 1-2 1 0 1-2 1-1 1-1 1 2 1-1 1 0 1 2 1 0 1 2 1 0 1-3 1-2 1 1 1-5 1-4 1-7 1-8 1-7 1-4 1-6 1-7 1 0 1-4 1 0 1 0 1 2 1 6 1 0 1 2 1 4 1 6 1 6 1 8 1 6 1 6 1 9 1 6 1 8 1 8 1 6 1 9 1 4 1 3 1-1 1-2 1-1 1-5 1-7 1-8 1-11 1-11 1-12 1-12 1-12 1-10 1-8 1-10 1-4 1-4 1 1 1 4 1 6 1 6 1 8 1 8 1 8 1 10 1 11 1 9 1 10 1 9 1 5 1 5 1 8 1 5 1 2 1 3 1 4 1 3 1 5 1 3 1 1 1 2 1 2 1 1 1-1 1 4 1 1 1 1 1 0 1 2 1 0 1 2 1-2 1 1 1 1 1 0 1 0 1 1 1-1 1 0 1 1 1-1 1 0 1 1 1-2 1 2 1 1 1-1 1 0 1-1 1 2 1-3 1 4 1-3 1 3 1-2 1 1 1-2 1 1 1-1 1 0 1 0 1 2 1-3 1 2 1 1 1 0 1 0 1-2 1 1 1 1 1 1" stroke="#87cefa" vector-effect="non-scaling-stroke"/>
<path d="M0 490l 1-1 1-1 1 0 1 2 1-2 1 3 1-2 1-2 1 2 1 0 1 1 1-2 1 2 1 0 1-1 1-1 1 1 1 0 1-1 1 2 1 0 1-2 1 0 1 0 1 2 1-2 1 0 1 1 1 0 1-1 1 1 1 0 1 1 1 0 1-2 1 2 1-1 1-1 1-1 1-1 1 1 1-3 1-1 1-1 1-2 1-1 1 0 1-2 1-1 1-2 1-3 1 1 1-3 1-1 1-3 1-2 1 1 1-3 1-1 1-2 1-3 1-6 1 0 1-2 1-3 1-4 1 1 1-5 1-3 1-2 1-6 1-1 1-3 1 1 1-4 1-1 1-2 1-1 1-2 1 1 1-1 1 2 1 1 1-1 1 2 1-1 1-1 1 2 1-4 1 0 1-5 1-4 1-6 1-5 1-9 1-5 1-6 1-4 1-4 1-3 1 1 1 2 1 0 1 3 1 1 1 4 1 2 1 8 1 6 1 6 1 5 1 7 1 7 1 9 1 5 1 7 1 9 1 8 1 5 1 1 1 1 1-2 1-3 1-5 1-3 1-11 1-9 1-13 1-11 1-12 1-11 1-9 1-11 1-6 1-6 1-2 1 0 1 3 1 5 1 5 1 7 1 9 1 11 1 10 1 9 1 9 1 10 1 8 1 7 1 5 1 6 1 4 1 5 1 3 1 3 1 3 1 4 1 4 1 0 1 4 1 0 1 0 1 3 1 1 1-2 1 2 1 4 1 0 1 0 1 0 1 0 1 1 1 0 1 0 1 1 1 1 1 0 1-2 1 2 1-2 1 3 1-1 1-2 1 4 1-3 1 0 1 1 1-2 1-1 1 2 1 0 1 2 1-1 1-1 1 2 1-2 1 1 1 1 1-1 1 1 1 0 1 0 1-2 1 0 1 0 1 0 1 0 1 1 1 0 1 1" stroke="#f08080" vector-effect="non-scaling-stroke"/>
<path d="M0 489l 1 0 1-1 1 1 1-2 1 3 1 0 1 0 1-1 1-1 1 1 1-1 1 1 1 2 1-2 1 0 1 1 1-1 1 0 1 0 1 1 1-2 1 1 1 0 1-1 1 1 1-1 1 1 1 0 1 2 1-1 1-1 1-1 1 0 1 1 1 0 1 0 1-1 1 0 1 0 1-1 1-1 1-1 1-1 1 0 1-2 1-3 1 0 1-1 1-3 1-1 1-2 1 0 1-1 1-2 1-1 1 0 1-4 1-4 1 0 1-3 1-1 1-3 1-2 1-5 1 0 1-3 1-4 1-2 1-2 1-4 1-1 1-6 1 0 1-1 1-4 1-1 1 0 1-4 1-1 1 2 1 0 1 0 1 0 1-1 1 1 1 3 1-1 1-1 1-1 1-3 1-1 1-7 1-7 1-6 1-6 1-5 1-5 1-4 1-5 1-2 1 2 1-1 1 2 1 2 1 2 1 4 1 2 1 7 1 4 1 7 1 6 1 8 1 6 1 7 1 7 1 8 1 8 1 5 1 7 1 2 1 0 1-2 1-3 1-2 1-9 1-7 1-9 1-15 1-8 1-13 1-11 1-8 1-12 1-6 1-6 1-2 1 1 1 4 1 5 1 6 1 7 1 8 1 11 1 7 1 10 1 10 1 8 1 8 1 7 1 6 1 7 1 2 1 4 1 4 1 4 1 2 1 3 1 4 1 1 1 3 1 0 1 1 1 4 1 0 1 1 1 0 1 1 1 1 1-1 1 3 1 0 1 0 1-1 1 2 1-2 1 2 1 1 1-1 1 0 1-3 1 3 1 0 1-1 1 0 1 2 1-2 1 1 1 0 1-2 1 0 1 3 1-1 1 0 1 0 1 0 1-1 1 0 1 1 1 0 1-1 1 3 1-2 1 1 1-1 1 2 1-2 1 0 1 2 1-3 1 1" stroke="#ffa500" vector-effect="non-scaling-stroke"/>
<path d="M0 490l 1 0 1-1 1 0 1 0 1 0 1 1 1-1 1 1 1 0 1-2 1 3 1-1 1-1 1-2 1 3 1 0 1 0 1-1 1-1 1 1 1-1 1 1 1-1 1 1 1 1 1-1 1 1 1-1 1-2 1 0 1 3 1-2 1 1 1-2 1 1 1 1 1 0 1-3 1 1 1-1 1-1 1-1 1 0 1-4 1 2 1-2 1 0 1-1 1-1 1-2 1 0 1-3 1 1 1-4 1-2 1-2 1-1 1-4 1 1 1-3 1-2 1-3 1-4 1-2 1-1 1-2 1-6 1-3 1 0 1-4 1-2 1-4 1 0 1-4 1-1 1 0 1 0 1-5 1-1 1 1 1 0 1 0 1 2 1 1 1-1 1 1 1 0 1-2 1-1 1-2 1-4 1-5 1-4 1-8 1-4 1-8 1-5 1-5 1-3 1-3 1 2 1 0 1 2 1 0 1 1 1 5 1 5 1 4 1 7 1 6 1 5 1 5 1 9 1 7 1 7 1 5 1 9 1 7 1 6 1 4 1-3 1 0 1-3 1-3 1-8 1-9 1-10 1-9 1-11 1-13 1-11 1-10 1-7 1-7 1-6 1-2 1 0 1 3 1 6 1 4 1 7 1 10 1 9 1 12 1 8 1 9 1 8 1 10 1 3 1 6 1 4 1 6 1 4 1 4 1 2 1 3 1 2 1 4 1 2 1 2 1 2 1 1 1 1 1 4 1-4 1 4 1-1 1 0 1 1 1 3 1-3 1 2 1 0 1 1 1 2 1-1 1-1 1-1 1 2 1 0 1-1 1-1 1 2 1 0 1 1 1-2 1 1 1-1 1 0 1 1 1 0 1-2 1 1 1 2 1-2 1 2 1 0 1-1 1 0 1 1 1 0 1-2 1 2 1-2 1 2 1 0 1-2 1 2 1-1 1 0" stroke="#90ee90" vector-effect="non-scaling-stroke"/>
<path d="M0 490l 1-2 1 0 1 2 1-3 1 1 1 1 1 1 1 0 1-1 1 0 1 1 1-4 1 2 1 2 1-1 1 0 1 1 1 1 1-3 1 0 1 0 1 0 1 4 1-3 1 1 1 0 1-1 1 1 1 1 1-3 1 1 1 1 1-1 1-1 1 0 1 1 1 0 1-3 1 1 1-1 1 1 1-2 1-2 1-1 1 1 1-3 1 0 1-1 1-2 1 1 1-4 1-1 1-2 1 0 1-2 1-1 1-2 1-2 1-2 1-3 1 0 1-5 1-2 1-1 1-4 1-1 1-5 1-1 1-3 1-4 1-2 1 0 1-6 1 0 1-1 1-3 1-3 1 1 1-2 1-1 1 3 1-2 1 1 1-1 1 2 1 2 1 0 1-1 1-3 1-2 1-1 1-7 1-5 1-6 1-7 1-4 1-7 1-5 1-4 1 0 1-1 1 2 1 0 1 2 1 4 1 1 1 5 1 4 1 7 1 4 1 7 1 6 1 6 1 8 1 7 1 6 1 8 1 8 1 4 1 5 1-2 1-1 1-3 1-3 1-5 1-10 1-9 1-12 1-11 1-11 1-10 1-10 1-9 1-5 1-4 1-3 1-1 1 3 1 5 1 7 1 6 1 6 1 10 1 9 1 9 1 9 1 10 1 8 1 5 1 5 1 7 1 4 1 2 1 4 1 5 1 2 1 1 1 6 1-1 1 2 1 2 1 3 1-1 1 0 1 2 1 2 1 0 1 1 1-1 1 1 1 1 1 0 1 0 1 1 1 0 1 0 1 0 1 2 1-2 1 0 1 0 1-1 1 0 1 2 1 0 1-1 1-2 1 3 1 0 1 0 1 1 1-2 1 3 1-2 1 1 1 0 1-2 1 1 1-1 1-1 1 3 1 0 1-3 1 1 1 2 1-2 1 1 1 0 1 0 1 0" stroke="#2f4f4f" vector-effect="non-scaling-stroke"/>
<path d="M0 490l 1-2 1 0 1 2 1-3 1 2 1 1 1-2 1 1 1 0 1-1 1 0 1 1 1-2 1 3 1-1 1 0 1-2 1 2 1 0 1-1 1 0 1 0 1 2 1 0 1-1 1-1 1 1 1 1 1 0 1 0 1-1 1-1 1 1 1 0 1 1 1-2 1 2 1-2 1-1 1-1 1 0 1 1 1-4 1 0 1-3 1 1 1 1 1-4 1-1 1 1 1-1 1-4 1-1 1 0 1 1 1-4 1-4 1 0 1-2 1-2 1-4 1 0 1-3 1-3 1-2 1-4 1-2 1-1 1-4 1-2 1-2 1-5 1-1 1-1 1-3 1-2 1-4 1 0 1 1 1-1 1 1 1 1 1-3 1 4 1-1 1 3 1-3 1-1 1 1 1-3 1-2 1-8 1-5 1-5 1-5 1-6 1-5 1-6 1-3 1-2 1-1 1 3 1 1 1 1 1 3 1 3 1 4 1 3 1 8 1 4 1 7 1 4 1 9 1 7 1 5 1 8 1 6 1 8 1 5 1 4 1-4 1 0 1-1 1-3 1-8 1-8 1-8 1-12 1-10 1-12 1-11 1-8 1-7 1-8 1-5 1-2 1 2 1 1 1 7 1 5 1 4 1 11 1 7 1 10 1 9 1 7 1 8 1 9 1 5 1 6 1 5 1 3 1 5 1 4 1 3 1 2 1 5 1 1 1 2 1 1 1 2 1 3 1-1 1 1 1 2 1 0 1 1 1-1 1 4 1-2 1 2 1 0 1-1 1-1 1 3 1-2 1 0 1 1 1 0 1 1 1 0 1-1 1 2 1-1 1 0 1 0 1 1 1-2 1 0 1 0 1 2 1 1 1-3 1 2 1-2 1 1 1 1 1 0 1 0 1 0 1-1 1 1 1-2 1 0 1 2 1 0 1 0 1-1 1 0 1-1" stroke="#fffacd" vector-effect="non-scaling-stroke"/>
<path d="M0 490l 1 0 1 0 1-3 1 3 1 1 1-2 1 1 1-2 1 0 1 0 1 2 1-2 1 1 1-1 1 1 1 0 1 0 1-2 1 2 1 0 1-1 1 1 1-1 1 1 1 0 1 0 1-1 1 2 1 0 1-1 1-1 1-1 1 1 1 2 1 0 1-3 1 2 1 1 1-2 1-2 1 2 1-1 1-1 1-2 1-2 1 0 1-2 1 0 1-2 1 1 1-4 1 1 1-4 1 1 1-2 1-2 1-1 1-3 1 0 1-3 1-3 1-2 1-3 1-1 1-4 1-2 1-3 1-3 1-2 1-2 1-2 1-2 1-3 1-4 1-1 1-1 1 0 1-2 1-4 1 2 1-1 1 0 1 3 1 0 1 0 1 3 1-2 1 1 1-5 1 1 1-4 1-5 1-5 1-7 1-5 1-6 1-5 1-7 1-3 1-1 1 0 1 1 1 1 1 1 1 3 1 3 1 4 1 5 1 6 1 4 1 7 1 4 1 8 1 8 1 3 1 10 1 5 1 8 1 4 1 5 1 0 1-2 1-2 1-3 1-7 1-7 1-11 1-10 1-10 1-13 1-8 1-10 1-7 1-6 1-6 1-3 1 2 1 4 1 5 1 4 1 6 1 7 1 10 1 9 1 7 1 8 1 10 1 7 1 5 1 6 1 3 1 5 1 5 1 4 1 1 1 5 1 3 1 1 1 2 1 0 1 2 1 2 1 2 1 0 1 1 1 0 1 2 1-1 1 1 1 1 1 0 1 2 1 0 1-1 1 0 1 1 1 0 1-1 1 2 1-1 1 1 1 0 1 0 1-1 1 1 1 0 1 1 1 0 1-4 1 4 1 1 1-2 1 0 1-1 1 2 1 1 1-4 1 3 1 0 1-2 1 2 1-2 1 0 1 0 1 1 1 2 1-1 1-1 1-1 1 3" stroke="#ffb6c1" vector-effect="non-scaling-stroke"/>
<path d="M0 488l 1 3 1 0 1-1 1-2 1 2 1-1 1 1 1 1 1 0 1-2 1-1 1 1 1 0 1 0 1-1 1 1 1-1 1-1 1 3 1-1 1 0 1 2 1-3 1 0 1 0 1-1 1 4 1-1 1 0 1-2 1 2 1-1 1 0 1-1 1 0 1 1 1-1 1 1 1-1 1-1 1 0 1-1 1-1 1 0 1-4 1 0 1-1 1 2 1-4 1-2 1 1 1-2 1 1 1-4 1-1 1-2 1-3 1 0 1-2 1-1 1-2 1-3 1-3 1-2 1-3 1-1 1-3 1-3 1-2 1-3 1-2 1-3 1-3 1-1 1 0 1-3 1-2 1 0 1-1 1-2 1 0 1 2 1-1 1 1 1 1 1 0 1 0 1-3 1 1 1-2 1-1 1-6 1-6 1-9 1-3 1-5 1-6 1-6 1-3 1 0 1 0 1 1 1 1 1 1 1 1 1 4 1 2 1 6 1 7 1 3 1 7 1 5 1 8 1 7 1 5 1 8 1 7 1 4 1 8 1 2 1-1 1-2 1-2 1-3 1-4 1-9 1-11 1-6 1-14 1-9 1-12 1-9 1-4 1-7 1-7 1 0 1 1 1 2 1 5 1 5 1 4 1 9 1 9 1 8 1 8 1 9 1 7 1 7 1 7 1 7 1 6 1 0 1 5 1 4 1 3 1 2 1 1 1 3 1 3 1 0 1 4 1 0 1 2 1-1 1 1 1 0 1 2 1 1 1 2 1-1 1 1 1-1 1 3 1-3 1 1 1-1 1 2 1-1 1 0 1 2 1-1 1-1 1 0 1 2 1 0 1-2 1 0 1 2 1-2 1 2 1-2 1 1 1-1 1 1 1 0 1-1 1 1 1 0 1-1 1 1 1 0 1-1 1 1 1 0 1 0 1 0 1 1 1 1 1-2 1 0" stroke="#800080" vector-effect="non-scaling-stroke"/>
<path d="M0 490l 1-1 1-1 1-1 1 1 1 2 1-1 1 0 1 1 1 0 1-1 1-2 1 3 1-3 1 3 1 0 1 1 1-1 1 1 1-3 1 3 1-3 1 1 1-1 1 0 1 0 1 0 1 1 1 1 1-1 1-1 1 0 1 1 1 1 1 1 1-4 1 1 1 0 1 0 1 3 1-3 1 1 1-4 1-1 1 1 1-2 1-3 1 1 1 1 1-3 1-1 1-1 1-2 1-1 1-1 1-1 1-2 1 0 1-4 1-2 1 1 1-4 1-2 1-2 1-1 1-3 1-3 1-3 1-2 1-4 1 0 1-5 1-2 1-1 1-4 1-1 1-2 1 0 1-3 1-1 1 1 1 0 1 1 1 2 1-3 1 2 1-1 1 1 1-1 1 0 1-1 1-4 1-5 1-5 1-7 1-6 1-4 1-8 1-3 1-5 1 0 1 0 1 1 1 3 1 1 1 2 1 1 1 3 1 6 1 5 1 4 1 7 1 5 1 10 1 4 1 7 1 4 1 9 1 6 1 4 1 3 1 1 1-2 1-2 1-2 1-8 1-6 1-9 1-9 1-11 1-11 1-8 1-10 1-7 1-4 1-7 1 0 1-1 1 3 1 3 1 6 1 4 1 10 1 7 1 9 1 6 1 10 1 8 1 8 1 6 1 3 1 5 1 5 1 3 1 5 1 2 1 0 1 4 1 2 1 3 1 2 1 1 1 0 1 2 1 0 1 3 1 0 1 0 1 1 1-2 1 3 1-1 1 1 1 0 1 1 1-2 1 2 1 0 1 0 1 1 1-3 1 1 1 2 1-1 1 2 1-4 1 3 1 0 1 0 1 2 1-3 1 2 1-3 1 2 1 1 1-1 1-1 1 1 1 1 1-2 1 0 1 1 1-1 1 0 1 1 1 1 1 0 1-2 1 0 1 1 1-2" stroke="#ff0000" vector-effect="non-scaling-stroke"/>
<path d="M0 488l 1 1 1 0 1 0 1 1 1-1 1 1 1 0 1 1 1-3 1 2 1-1 1 0 1 0 1-1 1 2 1-1 1 1 1 0 1 1 1-3 1 2 1-2 1 2 1-3 1 2 1-1 1 0 1 2 1-1 1 1 1-2 1 1 1 1 1 0 1-1 1 0 1-1 1-2 1 3 1-1 1 0 1-1 1-2 1 0 1-2 1 0 1-3 1 1 1-1 1-2 1 0 1-1 1-4 1 0 1-2 1 1 1-3 1-2 1 1 1-6 1-2 1 0 1-2 1-3 1-1 1-3 1-4 1-2 1-1 1-3 1-1 1-3 1-4 1-3 1 0 1-2 1-2 1 0 1-2 1 3 1-2 1 1 1 0 1-1 1 1 1 1 1 1 1-1 1-5 1-2 1 0 1-6 1-5 1-7 1-5 1-5 1-4 1-5 1-4 1-1 1 0 1 0 1 3 1 1 1 2 1 3 1 3 1 5 1 5 1 6 1 5 1 6 1 5 1 8 1 5 1 7 1 8 1 6 1 4 1 3 1 0 1-3 1-1 1-3 1-6 1-8 1-8 1-11 1-9 1-8 1-13 1-7 1-8 1-6 1-4 1-2 1 2 1 3 1 4 1 3 1 7 1 6 1 10 1 8 1 10 1 5 1 9 1 5 1 6 1 6 1 4 1 3 1 5 1 6 1 2 1 2 1 1 1 4 1-1 1 1 1 3 1 0 1 1 1 0 1 3 1 1 1 2 1-2 1 4 1-1 1-2 1 1 1 0 1 1 1-1 1 2 1 2 1-3 1 1 1 1 1 0 1-2 1 2 1-1 1 1 1-2 1 0 1 1 1-2 1 3 1-1 1 0 1 1 1 0 1-1 1-1 1 0 1 3 1-3 1 3 1 0 1-2 1 0 1 1 1-1 1 0 1-1 1 3 1-3 1 2" stroke="#6495ed" vector-effect="non-scaling-stroke"/>
<path d="M0 489l 1 0 1 0 1 0 1 1 1 0 1-1 1 0 1 1 1-2 1 2 1 1 1-2 1 1 1-1 1-1 1 0 1 0 1 1 1 1 1 1 1-2 1-1 1 2 1 0 1 0 1-2 1-1 1 1 1 2 1-2 1 0 1 0 1 2 1-3 1 2 1-1 1 2 1-2 1 0 1 0 1-2 1 1 1-1 1-2 1 1 1-3 1 0 1 1 1-3 1-1 1 1 1-3 1 0 1-5 1 2 1-3 1 0 1-2 1-3 1-1 1-1 1-3 1-2 1-3 1-2 1-2 1-2 1-2 1-3 1-2 1-3 1-3 1-4 1-1 1-1 1-2 1 1 1-2 1-6 1 3 1 2 1-1 1 2 1-1 1 0 1 2 1-1 1-2 1 0 1-2 1-3 1-3 1-7 1-3 1-7 1-7 1-4 1-4 1-4 1-1 1 0 1 1 1 1 1 1 1 1 1 4 1 3 1 5 1 5 1 4 1 5 1 7 1 6 1 6 1 7 1 6 1 5 1 6 1 7 1 1 1 0 1-3 1 0 1-3 1-7 1-6 1-8 1-8 1-12 1-9 1-9 1-10 1-3 1-9 1-5 1-2 1 1 1 5 1 2 1 4 1 6 1 8 1 7 1 9 1 9 1 7 1 9 1 3 1 8 1 3 1 6 1 2 1 7 1 3 1 1 1 2 1 3 1 1 1 4 1 1 1 0 1 1 1 2 1 1 1 1 1 0 1 0 1 2 1 3 1-3 1 0 1 1 1 3 1-2 1 0 1 1 1-1 1 0 1 1 1 0 1 2 1-4 1 2 1-1 1 0 1 0 1 0 1 1 1 1 1-1 1-2 1 1 1 1 1 1 1-2 1 2 1-1 1 1 1 0 1 0 1-1 1 1 1 0 1-2 1 1 1-1 1 2 1 0 1 0 1-1" stroke="#778899" vector-effect="non-scaling-stroke"/>
<path d="M0 487l 1 2 1 1 1-2 1 1 1 2 1-3 1 1 1 0 1 0 1 1 1-1 1 2 1-2 1-1 1 1 1-2 1 2 1 0 1 0 1 0 1 0 1 0 1 3 1-2 1-1 1 1 1 1 1-3 1 1 1 0 1 0 1 0 1 0 1 0 1 1 1-2 1 0 1 1 1-2 1 2 1-3 1 1 1-1 1-1 1-1 1-1 1 0 1-2 1-2 1-1 1 1 1-1 1-3 1 0 1-1 1-1 1-1 1-4 1-1 1-1 1-3 1-2 1-2 1-1 1-2 1-4 1-2 1-3 1-2 1-3 1-2 1-2 1-1 1-2 1-2 1-2 1 0 1-2 1-1 1 0 1-2 1 2 1 0 1 2 1 1 1-2 1 0 1-1 1-2 1 0 1 0 1-7 1-8 1-4 1-5 1-6 1-5 1-3 1-6 1 2 1-3 1 2 1 0 1 3 1 1 1 2 1 6 1 2 1 6 1 4 1 6 1 6 1 6 1 8 1 4 1 7 1 5 1 7 1 5 1 3 1 0 1-3 1 1 1-4 1-6 1-7 1-10 1-9 1-8 1-12 1-7 1-9 1-5 1-6 1-5 1-1 1-2 1 6 1 1 1 6 1 4 1 8 1 7 1 10 1 5 1 8 1 8 1 8 1 5 1 6 1 3 1 3 1 5 1 2 1 3 1 3 1 3 1 1 1 1 1 3 1 2 1-1 1 1 1 2 1 0 1 2 1 0 1 0 1 2 1-1 1 1 1 2 1 0 1-3 1 1 1 1 1 0 1 0 1 0 1-1 1 0 1 1 1 0 1 0 1 0 1 0 1 0 1 0 1 0 1 0 1 0 1-2 1 3 1 1 1-1 1 1 1-2 1 2 1-1 1-2 1 1 1 1 1 1 1-2 1-1 1 0 1 0 1 2 1 0 1 0" stroke="#a0522d" vector-effect="non-scaling-stroke"/>
<path d="M0 488l 1 1 1 1 1 0 1 0 1-1 1 0 1 1 1 0 1 0 1-1 1 1 1 0 1-1 1 0 1 0 1-1 1 0 1 2 1 1 1-2 1 0 1 0 1 0 1-1 1 1 1-2 1 3 1-1 1 1 1 2 1-3 1 0 1 0 1-1 1 1 1 0 1 1 1-1 1-1 1-1 1 0 1-1 1 1 1-1 1-1 1-2 1-1 1 0 1-2 1 0 1-1 1-1 1 0 1-4 1 1 1-4 1-1 1 0 1-4 1 1 1-3 1-1 1-4 1 0 1-2 1-3 1-3 1-3 1 0 1-3 1-2 1-3 1-4 1-1 1-1 1-2 1-1 1 0 1-2 1-1 1 2 1-2 1 2 1-1 1 2 1 0 1-2 1 0 1 0 1-2 1-2 1-5 1-6 1-5 1-5 1-5 1-5 1-5 1-5 1-1 1 2 1-1 1 1 1 3 1 2 1 4 1 1 1 6 1 2 1 5 1 6 1 7 1 7 1 4 1 6 1 6 1 6 1 7 1 6 1 2 1 0 1-2 1-4 1-2 1-4 1-8 1-10 1-5 1-10 1-11 1-8 1-7 1-8 1-5 1-6 1-3 1 3 1 4 1 2 1 5 1 5 1 8 1 7 1 9 1 6 1 7 1 7 1 6 1 7 1 4 1 6 1 1 1 2 1 5 1 4 1 1 1 3 1 1 1 3 1 2 1-1 1 2 1 1 1 1 1-1 1 4 1-1 1 2 1 1 1-1 1 2 1-2 1 1 1 1 1-1 1-1 1 3 1 0 1 0 1 0 1 0 1-1 1-1 1 0 1 1 1-1 1 1 1 0 1-2 1 1 1-1 1 2 1-1 1 1 1 1 1 0 1-1 1 0 1 1 1 0 1 1 1-4 1 3 1 0 1-2 1 2 1 0 1-1 1 1 1-1" stroke="#fa8072" vector-effect="non-scaling-stroke"/>
<path d="M0 487l 1 2 1 0 1-2 1 1 1 3 1-2 1 1 1-1 1 3 1-2 1-1 1-2 1 3 1-2 1 2 1-1 1 0 1 0 1 0 1 0 1 0 1 1 1-2 1 2 1-1 1-3 1 4 1-1 1 3 1-2 1 0 1 0 1 0 1 1 1-3 1 2 1-1 1 0 1-1 1 1 1-2 1-2 1 1 1-1 1 0 1-1 1-2 1 0 1 0 1-1 1 0 1-4 1 0 1-1 1-3 1 1 1-4 1 1 1-2 1-3 1-1 1-3 1-1 1-1 1-4 1-3 1-1 1-4 1-2 1 1 1-6 1 0 1-3 1-1 1-1 1-2 1-2 1 0 1-3 1 2 1-2 1 1 1 0 1 0 1 1 1 2 1-1 1-2 1 0 1-3 1-2 1-4 1-5 1-6 1-5 1-5 1-3 1-7 1-2 1-4 1 3 1 3 1-1 1-2 1 4 1 4 1 1 1 4 1 6 1 5 1 6 1 4 1 6 1 8 1 6 1 2 1 9 1 5 1 5 1 2 1-1 1-1 1-2 1 0 1-6 1-9 1-6 1-10 1-8 1-10 1-8 1-8 1-7 1-6 1-5 1 1 1-1 1 5 1 1 1 5 1 5 1 9 1 6 1 7 1 7 1 8 1 6 1 7 1 5 1 3 1 5 1 5 1 2 1 4 1 2 1 2 1 4 1 2 1 2 1-1 1 3 1 0 1 3 1-1 1 3 1 1 1-3 1 4 1-1 1 1 1 1 1-1 1 0 1 1 1-1 1-1 1 2 1 0 1-1 1 1 1 0 1-2 1 1 1 1 1 1 1-3 1 3 1-1 1 1 1-2 1 1 1 0 1-1 1 1 1 0 1 0 1 0 1 2 1-1 1-2 1 2 1-2 1 1 1 0 1 1 1-1 1 0 1 1 1 0 1-2" stroke="#2e8b57" vector-effect="non-scaling-stroke"/>
<path d="M0 489l 1 0 1 1 1-1 1 1 1-2 1 2 1-2 1 0 1 2 1 1 1-1 1-1 1-1 1 1 1 0 1-1 1 0 1-1 1 4 1-2 1 0 1 1 1 1 1-3 1 2 1-2 1 1 1 2 1-4 1 2 1 1 1 0 1-1 1 1 1-1 1 1 1-1 1-1 1 0 1 0 1-1 1 0 1-1 1 0 1-1 1-1 1 0 1-2 1-2 1 1 1-2 1 1 1-2 1-2 1 1 1-4 1 0 1-2 1 0 1-3 1-1 1-5 1 0 1-2 1-3 1-2 1-2 1-2 1-4 1-2 1-2 1-2 1-1 1-2 1-3 1-1 1 1 1-3 1 1 1-3 1 0 1 1 1 1 1 1 1-2 1 1 1 1 1 0 1-1 1-3 1-2 1-2 1-6 1-8 1-5 1-3 1-7 1-3 1-4 1-1 1 1 1 1 1 2 1-1 1 3 1 1 1 4 1 4 1 5 1 5 1 4 1 6 1 5 1 7 1 6 1 5 1 6 1 7 1 4 1-1 1 2 1-2 1 0 1-2 1-5 1-8 1-7 1-10 1-7 1-9 1-11 1-6 1-6 1-5 1-6 1-2 1 3 1 0 1 4 1 6 1 3 1 9 1 5 1 10 1 6 1 6 1 9 1 6 1 2 1 7 1 4 1 3 1 5 1 0 1 3 1 4 1 1 1 2 1 2 1 2 1 1 1 1 1 0 1-1 1 4 1 1 1 0 1 3 1-1 1 0 1-1 1 0 1 1 1 0 1-1 1 0 1 2 1 0 1 0 1-1 1 0 1 0 1 1 1 1 1-1 1 1 1-2 1 0 1 2 1-1 1 0 1-1 1 1 1 1 1 0 1 0 1 0 1 1 1-3 1 1 1-1 1 0 1 1 1 1 1 0 1 0 1 0 1-1 1 0 1 0" stroke="#ffffff" vector-effect="non-scaling-stroke"/>
<path d="M0 491l 1-1 1-1 1 0 1 0 1 2 1-2 1 2 1-1 1 1 1-3 1 3 1-2 1 1 1 0 1 0 1 1 1-2 1-1 1 2 1 1 1-2 1 1 1 0 1-1 1 0 1 0 1 1 1-2 1 1 1 0 1 1 1 0 1-1 1 0 1 0 1 1 1-2 1-1 1 2 1 1 1-1 1-2 1-2 1-1 1 1 1-1 1 0 1 0 1 0 1-3 1 1 1-3 1-2 1 1 1-1 1-2 1-3 1 0 1-2 1-2 1 0 1-3 1-3 1 0 1-3 1-3 1-3 1-2 1-1 1-3 1-3 1-1 1-4 1 0 1-3 1 0 1-3 1 2 1-1 1-3 1 3 1-2 1 3 1 1 1-2 1-2 1 3 1-2 1-2 1-1 1-3 1-4 1-4 1-4 1-7 1-5 1-3 1-7 1-3 1 0 1 1 1 0 1 2 1 1 1 0 1 2 1 4 1 5 1 2 1 6 1 7 1 2 1 7 1 8 1 3 1 8 1 5 1 5 1 6 1-1 1 2 1-3 1 0 1-3 1-3 1-7 1-9 1-8 1-9 1-8 1-8 1-9 1-7 1-6 1 1 1-6 1 4 1 1 1 4 1 3 1 6 1 6 1 7 1 8 1 6 1 6 1 8 1 6 1 5 1 4 1 5 1 2 1 4 1 4 1 3 1 1 1 2 1 2 1 1 1 2 1 0 1 3 1 1 1 0 1 1 1 0 1 2 1 1 1-3 1 4 1 0 1-2 1 0 1 2 1-1 1-2 1 2 1 1 1 0 1 2 1-3 1 2 1-2 1 0 1 3 1-3 1 2 1-1 1 1 1-1 1-2 1 1 1 1 1-1 1 2 1-1 1 1 1-1 1 1 1-3 1 2 1 2 1-3 1 1 1 1 1-1 1 1 1-1 1 1 1-1" stroke="#d2b48c" vector-effect="non-scaling-stroke"/>
<path d="M0 489l 1-1 1 0 1 1 1 0 1 0 1-1 1 0 1 1 1 0 1 1 1 0 1 0 1 0 1-2 1 2 1 0 1 0 1-1 1 1 1-1 1 0 1 0 1 0 1 0 1 1 1 2 1-2 1 0 1-1 1 0 1 0 1 2 1-1 1 0 1-2 1 0 1 2 1-1 1 0 1-3 1 2 1 0 1 1 1-2 1-1 1-2 1 1 1-2 1 0 1-2 1 0 1-2 1 1 1-2 1-1 1-3 1 0 1-2 1-3 1 0 1 0 1-2 1-3 1-1 1-3 1-2 1-1 1-4 1-5 1 1 1-2 1-4 1 0 1-3 1-1 1 0 1-3 1-3 1 0 1-1 1 0 1 2 1 0 1 2 1-1 1 0 1 0 1 0 1 0 1-2 1-3 1-3 1-7 1-5 1-4 1-5 1-4 1-7 1-3 1 1 1-2 1 0 1 4 1 1 1-1 1 4 1 3 1 5 1 4 1 5 1 3 1 5 1 5 1 6 1 7 1 5 1 7 1 5 1 5 1 4 1-2 1-3 1 1 1-2 1-8 1-7 1-6 1-9 1-6 1-11 1-9 1-7 1-6 1-2 1-6 1-1 1 1 1 2 1 3 1 4 1 4 1 8 1 8 1 7 1 7 1 4 1 9 1 3 1 7 1 4 1 5 1 3 1 1 1 4 1 3 1 3 1 1 1 2 1 2 1 1 1 2 1 1 1 0 1 1 1 2 1-1 1 2 1 0 1 0 1-1 1 1 1 1 1 1 1-1 1-1 1 4 1-3 1 0 1 2 1 1 1-3 1 1 1 0 1-2 1 4 1-3 1 0 1 1 1 0 1 0 1 0 1 0 1 1 1-2 1 0 1 3 1-2 1 0 1-1 1 3 1-3 1 2 1 0 1-2 1 1 1 2 1 0 1-2 1 0 1 1" stroke="#b0c4de" vector-effect="non-scaling-stroke"/>
<path d="M0 488l 1 0 1 3 1-2 1 2 1-2 1 1 1-2 1 1 1 0 1 1 1 2 1-1 1-3 1 0 1 1 1 2 1 1 1-3 1 0 1 0 1 1 1-1 1 2 1-1 1-2 1 2 1 0 1-1 1 0 1 0 1-1 1 1 1 0 1 0 1 0 1 2 1-3 1 1 1 1 1-1 1-2 1 2 1-2 1 0 1-2 1-1 1 0 1 0 1-1 1-2 1 0 1 1 1-4 1 0 1-2 1 1 1-3 1-3 1-1 1 0 1-1 1-5 1-2 1-2 1-1 1-2 1-3 1-1 1 1 1-5 1-1 1-3 1-3 1 0 1-3 1-2 1-1 1 0 1-2 1 0 1 0 1 2 1-2 1 2 1 0 1 0 1 1 1-2 1 0 1-2 1-2 1-4 1-4 1-8 1-3 1-3 1-7 1-5 1-3 1-1 1 1 1 0 1 1 1 3 1 1 1 2 1 1 1 5 1 3 1 4 1 4 1 7 1 7 1 5 1 7 1 4 1 4 1 7 1 5 1 1 1-1 1-1 1-1 1-2 1-4 1-6 1-7 1-9 1-9 1-7 1-7 1-8 1-5 1-8 1-3 1-2 1-1 1 5 1 3 1 4 1 6 1 6 1 6 1 7 1 8 1 5 1 6 1 6 1 5 1 4 1 4 1 4 1 3 1 4 1 3 1 2 1 1 1 3 1 1 1 2 1-1 1 2 1 0 1 1 1 1 1 1 1 2 1-1 1 0 1 0 1 1 1-1 1 2 1-1 1-1 1 1 1 2 1-4 1 2 1 0 1 1 1-2 1 2 1-1 1 0 1 1 1 0 1-1 1 2 1-1 1 2 1-2 1 1 1-2 1 2 1 0 1-1 1 0 1 2 1-3 1 1 1 1 1 2 1-2 1 0 1-1 1 0 1 1 1-1 1 0" stroke="#9370db" vector-effect="non-scaling-stroke"/>
<path d="M0 490l 1 0 1-1 1-2 1 3 1-1 1-1 1 1 1 1 1 0 1-2 1 1 1 1 1 0 1 0 1-1 1-1 1 1 1 1 1 0 1-2 1 1 1 1 1-1 1 2 1 0 1-2 1 1 1-1 1 1 1 0 1-1 1 2 1-2 1-1 1 3 1-1 1 0 1 0 1-2 1 2 1-2 1 1 1-3 1 0 1-2 1 2 1-2 1-1 1 3 1-4 1 0 1 0 1-2 1-1 1-1 1 0 1-3 1-2 1-1 1-2 1 1 1-6 1-1 1-2 1 0 1-3 1-2 1-2 1-2 1-3 1-3 1-1 1-2 1-2 1 0 1-4 1 0 1-1 1-1 1 1 1 0 1-1 1 3 1 1 1-3 1-2 1 1 1 0 1 0 1-2 1-2 1-4 1-6 1-4 1-5 1-4 1-6 1-3 1-3 1-1 1 1 1-2 1 2 1 3 1 0 1 1 1 4 1 4 1 4 1 5 1 4 1 5 1 5 1 6 1 5 1 6 1 5 1 7 1 5 1 1 1-1 1-2 1 0 1-3 1-4 1-7 1-6 1-10 1-7 1-7 1-10 1-5 1-4 1-8 1-1 1-3 1-1 1 4 1 3 1 2 1 9 1 5 1 5 1 6 1 7 1 5 1 10 1 4 1 5 1 5 1 2 1 5 1 2 1 3 1 3 1 2 1 1 1 2 1 2 1 1 1 1 1 2 1-1 1 2 1 0 1 1 1 1 1-2 1 3 1-1 1 0 1 1 1 1 1 0 1-1 1 2 1-3 1 2 1-2 1 1 1 3 1-4 1 1 1 1 1 2 1-4 1 3 1-2 1 0 1 1 1 1 1 0 1 0 1 1 1 0 1-1 1-2 1 2 1-2 1 2 1-1 1 1 1 0 1-2 1 3 1-2 1 0 1 0 1 1 1-2" stroke="#00ff7f" vector-effect="non-scaling-stroke"/>
<path d="M0 488l 1 2 1 0 1 0 1-1 1-1 1 0 1 1 1 0 1 0 1 1 1 1 1-2 1 2 1-1 1 0 1 1 1-2 1-1 1 1 1 2 1-2 1 1 1-1 1-1 1 1 1 1 1 0 1 1 1-1 1-1 1 0 1-1 1 1 1 0 1 1 1-1 1-1 1 2 1-2 1-2 1 4 1-3 1 0 1 1 1-3 1 0 1-1 1 1 1-2 1-2 1 2 1-1 1-3 1 0 1-2 1 0 1-2 1-2 1 0 1-3 1-1 1-1 1-2 1-2 1-4 1-2 1-1 1-3 1-2 1-1 1-3 1-1 1-3 1-1 1 0 1-5 1 2 1-2 1-1 1 0 1-1 1 1 1 2 1 0 1-1 1 1 1-1 1 1 1-3 1 0 1-4 1-2 1-5 1-5 1-5 1-4 1-5 1-4 1-3 1-2 1 3 1 1 1-2 1 2 1-1 1 4 1 5 1 2 1 4 1 3 1 6 1 4 1 6 1 6 1 4 1 6 1 7 1 4 1 5 1 0 1 0 1-1 1 0 1-4 1-5 1-3 1-10 1-5 1-10 1-6 1-11 1-5 1-4 1-7 1-3 1-2 1 2 1 2 1 2 1 7 1 2 1 4 1 7 1 10 1 5 1 4 1 8 1 7 1 2 1 4 1 6 1 2 1 1 1 6 1 0 1 4 1 1 1 3 1 2 1-1 1 2 1 0 1 2 1 0 1 1 1-1 1 2 1 1 1 0 1 0 1 1 1-1 1-1 1 2 1 1 1 0 1-2 1 1 1 0 1 2 1-1 1 0 1-1 1 1 1-1 1 0 1 2 1 0 1-1 1 0 1 1 1-1 1 0 1 1 1-1 1-2 1 0 1 4 1-3 1 2 1 1 1-1 1-1 1-1 1 1 1 1 1 0 1-2 1 1 1 0" stroke="#008080" vector-effect="non-scaling-stroke"/>
<path d="M0 489l 1 1 1 0 1 0 1 1 1-1 1 0 1 0 1 0 1 1 1-2 1 0 1 0 1-1 1 2 1-1 1 0 1 2 1-1 1 0 1 0 1-1 1-1 1 1 1 1 1-1 1 1 1 0 1 1 1-1 1 0 1-2 1-1 1 3 1 0 1-1 1 0 1 0 1-1 1-1 1 1 1-1 1 0 1 2 1-1 1 0 1-2 1-3 1 3 1-2 1-1 1-1 1 0 1-3 1 1 1-1 1-1 1-2 1 0 1-3 1-1 1-2 1-2 1 0 1-3 1-3 1 0 1-1 1-4 1-4 1-1 1-3 1 0 1-5 1 1 1-2 1-3 1-1 1-1 1 0 1 2 1-2 1 3 1-3 1 0 1 2 1 1 1 0 1-3 1 0 1-1 1-2 1-5 1-4 1-5 1-5 1-5 1-3 1-3 1-6 1 1 1-1 1 0 1 1 1 1 1 4 1-1 1 5 1 4 1 3 1 4 1 6 1 2 1 6 1 7 1 4 1 5 1 5 1 7 1 5 1 1 1-1 1-1 1-2 1 0 1-6 1-7 1-5 1-9 1-8 1-8 1-7 1-7 1-4 1-5 1-4 1-2 1 1 1 2 1 4 1 5 1 4 1 3 1 7 1 7 1 7 1 5 1 5 1 8 1 4 1 3 1 6 1 2 1 4 1 2 1 3 1 0 1 2 1 2 1 1 1 3 1 1 1 1 1 1 1 0 1 0 1 0 1 0 1 3 1 1 1-1 1 1 1-1 1 0 1 0 1 2 1-3 1 2 1-1 1 2 1-1 1-1 1 2 1-2 1 2 1-2 1 3 1-1 1 0 1-1 1 0 1-1 1 0 1 2 1 0 1-1 1 0 1 0 1 2 1-2 1 2 1-2 1 0 1 1 1 1 1-1 1 0 1-2 1 0 1 2 1-1" stroke="#00ffff" vector-effect="non-scaling-stroke"/>
<path d="M0 488l 1 1 1 2 1-2 1 1 1 0 1-1 1-1 1 2 1-1 1 0 1 0 1 1 1 0 1-1 1 0 1 1 1 0 1-1 1 1 1 0 1-1 1 1 1 1 1-1 1-2 1 2 1 0 1 0 1-1 1 2 1-2 1-1 1 1 1-1 1 2 1-2 1 2 1-3 1 2 1-3 1 3 1-1 1-1 1-1 1-1 1 0 1-2 1 2 1-1 1 0 1-1 1-1 1-1 1 0 1-1 1-2 1-2 1-2 1 0 1-3 1 0 1-3 1-3 1 1 1-1 1-4 1-2 1-1 1-5 1 1 1-4 1-2 1-1 1-2 1 0 1-3 1-1 1-1 1 0 1-1 1 1 1 0 1 1 1 0 1 2 1-3 1 1 1-2 1-1 1 0 1-3 1-3 1-5 1-5 1-6 1-3 1-4 1-4 1-3 1-1 1 3 1-1 1 1 1 0 1 0 1 4 1 3 1 4 1 2 1 6 1 4 1 2 1 8 1 5 1 4 1 4 1 8 1 5 1 3 1 3 1-1 1-2 1-1 1-3 1-3 1-7 1-6 1-8 1-8 1-6 1-8 1-7 1-5 1-5 1-2 1-1 1-1 1 2 1 5 1 1 1 4 1 7 1 7 1 6 1 7 1 5 1 6 1 6 1 4 1 5 1 3 1 1 1 5 1 2 1 3 1 1 1 1 1 4 1 0 1 2 1 0 1 1 1 0 1 2 1 0 1 0 1 1 1 1 1 1 1-2 1 2 1 1 1 0 1 1 1 0 1-3 1 1 1-1 1 3 1 0 1-1 1-2 1 1 1 1 1 0 1-2 1 2 1-1 1 1 1 2 1-1 1-2 1 3 1-1 1-2 1 0 1 3 1-4 1 3 1-1 1 1 1-1 1-2 1 4 1-1 1-2 1 3 1-1 1-1 1-1" stroke="#ff00ff" vector-effect="non-scaling-stroke"/>
<path d="M0 490l 1-1 1-1 1 1 1 1 1 0 1 0 1-1 1-1 1 2 1-1 1 0 1 0 1 0 1 1 1-1 1 1 1 0 1 0 1-1 1 0 1 2 1-1 1 0 1-1 1 0 1 0 1 0 1 1 1-2 1 2 1 0 1 0 1-2 1-1 1 1 1 0 1 1 1 1 1-1 1-1 1 0 1 0 1 0 1-1 1-1 1-1 1 2 1-3 1 1 1 0 1-3 1 1 1-3 1 0 1 0 1-2 1 0 1-1 1-3 1-1 1 0 1-3 1-2 1-4 1-1 1-1 1-1 1-1 1-3 1-1 1-4 1-2 1-2 1 0 1-2 1-1 1-2 1-2 1 1 1 0 1-2 1 2 1-1 1 1 1 1 1-1 1 0 1-2 1 1 1-1 1-3 1-4 1-7 1-2 1-6 1-3 1-4 1-4 1-3 1-2 1 0 1 1 1 2 1 1 1 0 1 4 1 2 1 4 1 5 1 2 1 6 1 3 1 5 1 5 1 4 1 5 1 6 1 6 1 3 1 2 1 0 1 0 1-1 1-4 1-3 1-6 1-7 1-7 1-7 1-9 1-7 1-8 1-4 1-3 1-3 1-2 1 1 1 1 1 4 1 4 1 3 1 8 1 3 1 7 1 6 1 6 1 6 1 5 1 5 1 4 1 3 1 2 1 3 1 3 1 3 1 2 1 0 1 1 1 3 1 2 1 1 1 1 1 0 1 1 1 2 1-2 1 1 1 1 1-1 1 2 1 1 1-1 1 1 1 0 1-1 1 1 1 0 1 1 1-2 1 1 1 0 1 0 1 0 1-1 1 0 1 0 1 0 1 0 1 2 1-2 1 2 1-1 1 0 1 1 1 0 1 0 1 0 1 0 1 1 1-1 1 0 1 0 1 1 1-1 1-1 1 0 1 0 1 0 1 0 1 1" stroke="#ffff00" vector-effect="non-scaling-stroke"/>
<path d="M0 488l 1 1 1 1 1-1 1 1 1 1 1-2 1 0 1-1 1 2 1 0 1-2 1 1 1 1 1 0 1-1 1 0 1 1 1 0 1-2 1 1 1-1 1 2 1 0 1-2 1 2 1 0 1-2 1 3 1 0 1-2 1-1 1 2 1-1 1 1 1 0 1 0 1-1 1-1 1 3 1-2 1-1 1-1 1 0 1 0 1-1 1-2 1 0 1 0 1 2 1 0 1-3 1-1 1-1 1 0 1-1 1-1 1-2 1 0 1-3 1 1 1-3 1-2 1-1 1-3 1 1 1-5 1-2 1 0 1-2 1-4 1 0 1-2 1-2 1-4 1 1 1-3 1 1 1-2 1-2 1 1 1 0 1 0 1 2 1-1 1-1 1 0 1 2 1-3 1 1 1-3 1-1 1-3 1-7 1-3 1-4 1-5 1-5 1-2 1-3 1-2 1 0 1 1 1 1 1 2 1-1 1 4 1 1 1 5 1 3 1 3 1 3 1 7 1 6 1 5 1 5 1 2 1 6 1 6 1 4 1 1 1 0 1-2 1 0 1-3 1-4 1-4 1-7 1-6 1-9 1-7 1-7 1-5 1-5 1-4 1-4 1 0 1-1 1 2 1 3 1 5 1 3 1 6 1 4 1 8 1 6 1 5 1 5 1 4 1 4 1 5 1 4 1 3 1 3 1 2 1 1 1 3 1 3 1 1 1 0 1 2 1 2 1-1 1 3 1-2 1 2 1 0 1 0 1 1 1 0 1-2 1 5 1-1 1 0 1 0 1-1 1 0 1 1 1-1 1 0 1 0 1 0 1 2 1-1 1-1 1 1 1-1 1 2 1 0 1-1 1 0 1-1 1 1 1-1 1-1 1 3 1 1 1 0 1-1 1-1 1 0 1-2 1 1 1 1 1 1 1-1 1 0 1 1 1 0 1 1 1-2" stroke="#00ff00" vector-effect="non-scaling-stroke"/>
<path d="M0 490l 1-1 1 0 1 0 1 0 1 1 1-1 1-1 1 1 1-1 1 1 1 1 1 0 1 0 1-1 1-1 1 0 1 1 1 2 1-3 1 0 1 1 1 1 1 0 1-1 1 1 1-3 1-1 1 3 1 0 1 2 1-1 1-1 1-1 1 2 1-1 1 1 1-1 1 0 1 0 1 0 1-1 1-1 1 1 1 0 1 1 1-4 1 1 1-1 1-1 1-1 1 1 1-3 1 0 1 1 1-2 1-1 1-1 1-2 1-3 1 1 1-1 1-2 1-1 1-3 1-3 1-2 1-2 1 0 1-3 1 0 1-1 1-4 1-1 1-2 1-2 1-1 1-2 1 0 1 0 1-1 1 1 1-1 1 0 1 0 1 2 1-2 1 1 1 0 1-2 1-1 1-2 1-4 1-5 1-4 1-4 1-4 1-5 1-3 1-2 1-2 1 1 1 0 1 2 1 0 1 0 1 2 1 4 1 4 1 2 1 4 1 4 1 5 1 7 1 3 1 4 1 6 1 3 1 6 1 3 1 4 1-1 1-1 1-2 1 0 1-5 1-6 1-6 1-8 1-8 1-6 1-7 1-5 1-4 1-4 1-5 1-1 1 1 1 3 1 0 1 5 1 6 1 3 1 7 1 6 1 4 1 7 1 5 1 4 1 5 1 3 1 4 1 3 1 4 1 0 1 3 1 3 1 2 1 1 1 1 1 2 1 1 1-2 1 2 1 2 1 0 1-1 1 1 1 2 1-1 1 3 1-1 1 0 1-1 1 1 1-1 1 0 1-1 1 1 1 0 1-1 1 2 1-1 1 2 1 0 1-2 1 0 1 1 1 0 1 0 1 0 1 0 1 0 1-1 1 2 1 0 1-2 1 1 1 0 1 0 1 0 1 1 1 0 1-1 1 2 1-3 1 2 1 0 1 0 1-2 1 0" stroke="#0000ff" vector-effect="non-scaling-stroke"/>
<path d="M0 489l 1-1 1 2 1-2 1 2 1-2 1 1 1 0 1 0 1-1 1 1 1 0 1 0 1 0 1 0 1 1 1-1 1 1 1-1 1 1 1 0 1 1 1 0 1-2 1 0 1 0 1 0 1-1 1 3 1-3 1 1 1-1 1 2 1 0 1-1 1 1 1-1 1 1 1-1 1-1 1 0 1 0 1-1 1 0 1 0 1 0 1 0 1 0 1-2 1 0 1 0 1-1 1 0 1-1 1-3 1-2 1 2 1 0 1-2 1-3 1 0 1-2 1-4 1-1 1 1 1-5 1 0 1-1 1-3 1-1 1-3 1-2 1-1 1-1 1-3 1-3 1 2 1-3 1 0 1 0 1-2 1 0 1 0 1 3 1-1 1-1 1 1 1 0 1 0 1-2 1-2 1 0 1-6 1-4 1-3 1-4 1-4 1-3 1-6 1-3 1-2 1 2 1-1 1 3 1 1 1 2 1 1 1 1 1 5 1 3 1 5 1 3 1 5 1 4 1 4 1 6 1 3 1 6 1 6 1 3 1 0 1 1 1 0 1-1 1-4 1-2 1-8 1-5 1-5 1-8 1-7 1-6 1-7 1-3 1-6 1-3 1-2 1 3 1 1 1 3 1 4 1 3 1 6 1 4 1 7 1 6 1 6 1 4 1 6 1 3 1 4 1 2 1 3 1 2 1 4 1 1 1 3 1 2 1 0 1 1 1 2 1 1 1 1 1 2 1-1 1 2 1-1 1 0 1 2 1 0 1-1 1 2 1 0 1 0 1-1 1 0 1-1 1 3 1-1 1 0 1 0 1 0 1 1 1-1 1-1 1 2 1-2 1 2 1-1 1-1 1 0 1 1 1 2 1-4 1 3 1-2 1 1 1 0 1 0 1 1 1-1 1 2 1-1 1-1 1-1 1 0 1 1 1 1 1 1 1-2 1 0" stroke="#dc143c" vector-effect="non-scaling-stroke"/>
<path d="M0 491l 1-2 1 0 1 1 1 0 1 0 1-2 1 1 1 1 1 0 1 1 1-3 1 2 1-2 1 0 1 1 1 1 1 0 1 0 1-1 1 1 1-1 1 1 1-1 1 0 1 1 1-2 1 2 1-1 1-1 1 2 1-1 1 3 1-2 1-1 1 0 1 0 1 0 1 0 1 1 1 1 1-3 1 1 1-2 1 0 1 1 1 1 1-5 1 3 1-3 1 2 1-2 1 1 1-2 1-1 1-2 1 0 1-1 1-2 1-2 1-1 1-1 1-1 1-3 1-1 1-1 1-2 1-2 1 1 1-6 1 0 1-3 1-2 1-2 1 0 1-1 1-4 1 0 1 2 1-4 1 2 1-1 1-1 1 4 1-2 1 1 1-2 1 1 1 1 1-2 1 1 1-3 1-5 1-5 1-5 1-3 1-4 1-3 1-6 1-2 1-1 1 1 1-2 1 3 1 0 1 2 1 2 1 2 1 4 1 4 1 2 1 5 1 4 1 6 1 3 1 5 1 5 1 4 1 6 1 3 1 3 1-2 1-1 1-1 1 0 1-4 1-6 1-8 1-6 1-3 1-10 1-6 1-6 1-5 1-4 1-2 1-3 1 2 1 0 1 5 1 2 1 5 1 5 1 5 1 6 1 4 1 8 1 2 1 7 1 3 1 4 1 4 1 2 1 3 1 2 1 2 1 2 1 2 1 1 1 2 1 0 1 2 1-1 1 1 1 2 1-1 1 2 1-1 1 2 1-1 1 1 1 1 1-2 1 0 1 0 1 1 1 3 1-2 1-1 1 2 1-1 1 0 1 0 1 0 1 1 1 1 1-2 1 0 1 0 1-1 1 1 1 1 1 0 1 1 1-3 1 0 1 2 1-2 1 0 1 2 1-1 1 0 1 1 1 1 1-1 1 0 1-2 1 0 1 2 1-1 1-1" stroke="#20b2aa" vector-effect="non-scaling-stroke"/>
<path d="M0 492l 1-4 1 1 1 1 1-1 1-1 1 1 1 1 1-1 1 0 1 0 1-1 1 1 1 1 1-1 1 1 1 0 1 1 1 0 1-2 1 1 1 0 1-3 1 4 1-2 1 1 1-1 1 1 1-1 1 1 1 0 1 1 1-1 1 0 1 0 1 0 1 1 1-2 1 0 1-1 1 0 1 3 1-4 1 0 1-1 1 2 1-1 1-1 1 0 1-2 1-1 1 1 1 1 1-3 1 0 1-1 1-3 1 1 1-3 1 0 1-2 1 1 1-2 1-2 1-2 1-1 1-3 1 0 1-4 1-2 1-1 1-1 1-3 1-1 1-2 1-1 1 0 1-3 1-1 1 0 1-1 1 1 1-1 1 2 1 0 1 2 1-2 1 0 1-1 1-1 1-1 1-3 1-3 1-2 1-7 1-1 1-6 1-3 1-4 1-2 1-2 1-2 1 1 1 2 1 2 1 1 1 1 1 3 1 3 1 3 1 3 1 4 1 4 1 7 1 4 1 4 1 5 1 6 1 3 1 3 1 2 1-1 1-2 1 2 1-4 1-3 1-4 1-8 1-5 1-5 1-8 1-10 1-3 1-3 1-5 1-4 1 0 1 1 1 3 1 2 1 2 1 4 1 5 1 6 1 6 1 6 1 5 1 3 1 4 1 6 1 3 1 3 1 2 1 2 1 3 1 1 1 3 1 1 1 2 1 1 1 1 1 2 1-1 1 2 1 2 1 1 1-3 1 2 1 1 1-1 1 1 1-1 1 1 1-1 1 2 1 1 1-1 1-1 1 0 1 2 1-1 1 1 1-2 1 1 1 0 1 0 1-1 1 1 1 1 1-2 1 2 1 0 1 0 1 1 1-1 1-1 1 1 1 0 1 1 1-1 1 0 1-2 1 1 1 1 1-1 1 2 1 0 1-1 1 0 1-1 1 0" stroke="#4682b4" vector-effect="non-scaling-stroke"/>
<path d="M0 490l 1-1 1 2 1-1 1-1 1 0 1 2 1-1 1 0 1-2 1 2 1-2 1 1 1 2 1-1 1 0 1-1 1 0 1 1 1-2 1 2 1-1 1 0 1 2 1-2 1-1 1 1 1-1 1 0 1 2 1-3 1 3 1-2 1 2 1 0 1-1 1 1 1-2 1 0 1 1 1-1 1 0 1 0 1 0 1 0 1-1 1-1 1 1 1-3 1 2 1-1 1-1 1 1 1-1 1-4 1-1 1 0 1 0 1-1 1-1 1-1 1-1 1-2 1-2 1-1 1-2 1-2 1-2 1-2 1-1 1-2 1 0 1-5 1 0 1-1 1-1 1-3 1 0 1-2 1-1 1 1 1 0 1 0 1 0 1 1 1-2 1 2 1-1 1 1 1-1 1-2 1-3 1-1 1-6 1-5 1-2 1-2 1-7 1-3 1-1 1-3 1 3 1-2 1 0 1 2 1 1 1 4 1-1 1 5 1 2 1 4 1 2 1 5 1 7 1 4 1 4 1 3 1 6 1 5 1 3 1 1 1 0 1-1 1-2 1-1 1-3 1-4 1-6 1-6 1-9 1-6 1-5 1-7 1-2 1-4 1-5 1-3 1 5 1 1 1 3 1 2 1 1 1 6 1 8 1 5 1 4 1 6 1 4 1 5 1 5 1 2 1 4 1 1 1 3 1 3 1 2 1 2 1 2 1 1 1 1 1 2 1 0 1-1 1 2 1 0 1-1 1 3 1-1 1 0 1 2 1-2 1 3 1 0 1 0 1 1 1-2 1-1 1 1 1 1 1-1 1 2 1-1 1-1 1 1 1 1 1-1 1-1 1 1 1-1 1 1 1 0 1-1 1 2 1 0 1 0 1-1 1 0 1 2 1-1 1-1 1 1 1-1 1-1 1 2 1 0 1-1 1-2 1 1 1 2 1-2 1 1" stroke="#7b68ee" vector-effect="non-scaling-stroke"/>
<path d="M0 489l 1 0 1 0 1 0 1-1 1 0 1 2 1 0 1 1 1-2 1 0 1 0 1 1 1-1 1-1 1 3 1-1 1 0 1-1 1 0 1-1 1 2 1-1 1 1 1-1 1 0 1 2 1-3 1 0 1 2 1 0 1-1 1 1 1-1 1 1 1-1 1 2 1-2 1-1 1 3 1 0 1-3 1 1 1 1 1-2 1-1 1-1 1 1 1-1 1-1 1 0 1-1 1-2 1 1 1 0 1-2 1 0 1-1 1-1 1-3 1-2 1 1 1-2 1-3 1 0 1-1 1-3 1 0 1-4 1 0 1-3 1 0 1-1 1-4 1-1 1-3 1 1 1-1 1-2 1-1 1 2 1-1 1 2 1-1 1-1 1 3 1-2 1-1 1 0 1-1 1 0 1-4 1-2 1-3 1-5 1-3 1-6 1-2 1-4 1-1 1-2 1-1 1 1 1 0 1 1 1 3 1 0 1 3 1 3 1 3 1 4 1 3 1 3 1 6 1 5 1 3 1 5 1 6 1 3 1 2 1 2 1 0 1-1 1-2 1-1 1-3 1-5 1-5 1-7 1-4 1-6 1-6 1-6 1-6 1-5 1-1 1-1 1-1 1 4 1 3 1 2 1 3 1 3 1 7 1 6 1 6 1 4 1 5 1 5 1 3 1 3 1 4 1 0 1 3 1 2 1 2 1 3 1 2 1 0 1 4 1-1 1 0 1 1 1 3 1-1 1 0 1 0 1 1 1 0 1 0 1 1 1 0 1-1 1 0 1 1 1 0 1 1 1 0 1 0 1 0 1 1 1-1 1 1 1 1 1-4 1 2 1-2 1 1 1 0 1 1 1-1 1 1 1 1 1-2 1 2 1-1 1 1 1-1 1 0 1 1 1-1 1 0 1 1 1-2 1 2 1 0 1 1 1-1 1 0 1 0 1-1" stroke="#ee82ee" vector-effect="non-scaling-stroke"/>
<path d="M0 490l 1 0 1 0 1 1 1-2 1 1 1-1 1 0 1 1 1-1 1-1 1 3 1-2 1 0 1 0 1 1 1-1 1 1 1-1 1 0 1 0 1 1 1-2 1 1 1 0 1 1 1 0 1-1 1 1 1-2 1 0 1 2 1 0 1 0 1 1 1-2 1 1 1 1 1-2 1 0 1 2 1-1 1-1 1-1 1 0 1-3 1 1 1 1 1-1 1 0 1 0 1-3 1 1 1-1 1 0 1-1 1-2 1 0 1-2 1-2 1 0 1-4 1 2 1-2 1-1 1-2 1-2 1-1 1-2 1 0 1-3 1-4 1 0 1-1 1-2 1-1 1-1 1-1 1-1 1-1 1 0 1 0 1 0 1 1 1 0 1 0 1 0 1 2 1-2 1-2 1-2 1 0 1-3 1-6 1-2 1-4 1-4 1-3 1-4 1-3 1 0 1 1 1-1 1 1 1 1 1 1 1 2 1 2 1 1 1 5 1 2 1 5 1 2 1 6 1 3 1 7 1 3 1 7 1 2 1 4 1-1 1 1 1-1 1 0 1-2 1-2 1-6 1-7 1-5 1-4 1-9 1-5 1-4 1-6 1-4 1 0 1-4 1 2 1 2 1 1 1 4 1 4 1 3 1 5 1 5 1 6 1 5 1 4 1 5 1 0 1 7 1 3 1 1 1 4 1 1 1 2 1 2 1 1 1 1 1 1 1 2 1 2 1-1 1 2 1-1 1 2 1 0 1 0 1-1 1 2 1 1 1-1 1 1 1-1 1 2 1-1 1 0 1-2 1 2 1-1 1 1 1 1 1 2 1-3 1-1 1 0 1 2 1-2 1 1 1-1 1 2 1-1 1 1 1 0 1-2 1 1 1 0 1 3 1-2 1-1 1 1 1-1 1 2 1-2 1 0 1 1 1 0 1-1 1 0 1 1 1-1" stroke="#ffa07a" vector-effect="non-scaling-stroke"/>
<path d="M0 490l 1 0 1-1 1 1 1-1 1-1 1 3 1-2 1-1 1 0 1 2 1-1 1 1 1-1 1 1 1-1 1 1 1 2 1-1 1-2 1 0 1 0 1 0 1 1 1-2 1 2 1-2 1 1 1 0 1 2 1-1 1-1 1 0 1 1 1 0 1-1 1-2 1 3 1-1 1 1 1-1 1 0 1 0 1-1 1 1 1-1 1-2 1 1 1-1 1-1 1-1 1 4 1-4 1 0 1 0 1-2 1 0 1-3 1 0 1 0 1-1 1-3 1-2 1 1 1-2 1-3 1-2 1-1 1-1 1-3 1 0 1-3 1 0 1-4 1-1 1-1 1 0 1-2 1 0 1 0 1-1 1 0 1-1 1 1 1 0 1 1 1 0 1-1 1 0 1-1 1-1 1-1 1-4 1-4 1-5 1-2 1-2 1-6 1-1 1-5 1 1 1 0 1-1 1 0 1 2 1 2 1 0 1 2 1 2 1 6 1 2 1 3 1 5 1 3 1 4 1 5 1 4 1 5 1 4 1 5 1 1 1-2 1-1 1-1 1-2 1-3 1-4 1-5 1-5 1-8 1-5 1-6 1-4 1-5 1-3 1-2 1-2 1-1 1 4 1 1 1 2 1 5 1 3 1 8 1 3 1 4 1 6 1 4 1 4 1 2 1 4 1 4 1 1 1 4 1 2 1 3 1 0 1 3 1-1 1 1 1 0 1 3 1 1 1 1 1 1 1 0 1 1 1-1 1 1 1 1 1-1 1 0 1 2 1-2 1-1 1 2 1 0 1 1 1-3 1 2 1 0 1-2 1 2 1 0 1 1 1 0 1-3 1 1 1 1 1 2 1-2 1 0 1 3 1-3 1 1 1 0 1-1 1 1 1-2 1 1 1 1 1 0 1-1 1 1 1-1 1-1 1 1 1 0 1 0 1 1 1-1" stroke="#808000" vector-effect="non-scaling-stroke"/>
<path d="M0 489l 1 2 1-2 1 0 1 2 1-2 1 0 1 1 1-1 1 0 1-1 1 1 1 0 1-1 1 0 1 3 1-1 1 0 1 1 1-1 1 1 1-1 1 0 1-1 1 0 1 0 1 1 1-1 1 1 1-2 1 1 1 2 1-2 1 2 1-1 1-1 1-1 1 0 1 1 1 0 1 2 1-2 1 0 1 0 1-1 1 0 1-1 1 1 1-2 1-1 1 0 1 0 1-1 1-2 1 0 1-1 1 1 1-2 1 0 1-1 1-1 1-1 1-2 1-1 1-3 1 1 1-3 1-3 1 0 1-3 1-1 1-4 1 1 1-1 1-1 1-3 1 1 1-2 1-1 1-2 1 1 1-2 1 0 1 4 1-2 1 1 1 0 1 0 1-2 1 0 1-1 1-2 1-2 1-6 1-4 1-3 1-2 1-4 1-4 1-2 1-1 1-1 1 3 1 1 1-2 1 3 1 2 1 2 1 2 1 5 1 1 1 3 1 6 1 3 1 4 1 3 1 5 1 5 1 2 1 4 1 2 1 0 1 0 1-1 1-4 1-2 1-4 1-4 1-8 1-5 1-6 1-5 1-5 1-4 1-4 1-3 1 1 1 0 1 3 1-1 1 4 1 2 1 6 1 4 1 4 1 5 1 6 1 3 1 4 1 5 1 4 1 1 1 4 1 2 1 2 1 1 1 1 1 1 1 1 1 2 1 0 1 4 1-1 1 0 1 0 1 2 1 0 1 2 1 0 1-1 1 1 1 0 1-2 1 1 1 1 1-1 1 1 1 0 1 0 1 1 1-1 1 0 1 0 1 1 1-2 1 0 1 2 1-1 1-1 1 1 1 1 1 0 1-2 1 2 1 0 1 0 1-2 1 1 1 1 1 1 1-2 1 1 1-1 1 0 1 0 1-1 1 1 1 1 1-1 1 1 1-1" stroke="#f0e68c" vector-effect="non-scaling-stroke"/>
<path d="M0 486l 1 3 1 0 1 1 1-2 1 1 1-1 1 1 1 2 1-1 1-1 1 0 1 2 1 1 1-2 1 0 1 1 1-2 1 1 1 0 1-1 1 1 1-1 1 0 1 0 1 0 1 1 1-1 1 1 1 0 1 0 1 0 1 0 1-1 1 2 1 0 1-2 1 1 1 0 1 2 1-4 1 2 1 0 1-3 1 2 1 0 1-1 1-1 1-2 1 2 1-1 1 0 1-1 1 0 1-1 1-1 1-2 1 0 1-1 1-1 1-1 1-2 1-1 1-1 1-2 1-1 1-2 1-2 1-1 1-1 1-1 1-3 1-1 1-3 1 0 1-1 1-1 1-1 1-2 1 0 1 0 1-1 1 2 1 0 1-2 1 0 1 0 1 0 1 1 1-1 1-2 1 0 1-4 1-4 1-4 1-4 1-1 1-4 1-3 1-5 1 0 1 2 1 0 1 0 1 1 1 1 1 1 1 3 1 1 1 5 1 2 1 4 1 4 1 4 1 5 1 3 1 3 1 4 1 6 1 2 1 1 1-1 1 1 1-3 1 0 1-3 1-3 1-5 1-8 1-4 1-5 1-6 1-5 1-7 1-2 1 0 1-3 1 2 1 0 1 4 1 1 1 5 1 4 1 3 1 5 1 6 1 3 1 4 1 2 1 6 1 1 1 4 1 3 1 2 1 3 1 1 1 2 1 2 1 1 1 2 1 0 1 1 1-1 1 1 1 0 1 0 1 0 1 2 1 0 1 0 1 0 1 2 1 0 1 0 1 0 1 0 1-1 1 1 1 0 1 0 1-1 1 1 1 2 1-2 1 1 1-2 1 1 1 1 1-1 1 0 1 0 1 0 1-1 1 2 1 0 1-2 1 0 1 1 1 2 1-2 1 2 1-2 1 0 1 2 1-1 1-1 1 1 1 1 1-3 1 2 1 0" stroke="#32cd32" vector-effect="non-scaling-stroke"/>
<path d="M0 490l 1-2 1 3 1-2 1 1 1-1 1 1 1-1 1 0 1 0 1 1 1 0 1-1 1 0 1 2 1-2 1 2 1 0 1-2 1-1 1 1 1 0 1 0 1 1 1-1 1 1 1 0 1 0 1 0 1-1 1-1 1 2 1 0 1-1 1 1 1 0 1-1 1 1 1 0 1-1 1 1 1 0 1-2 1 1 1 1 1-3 1 0 1 1 1 0 1-1 1-2 1 0 1-1 1 0 1 0 1-1 1-2 1 0 1 0 1-1 1-2 1-1 1-2 1-1 1-2 1-1 1-1 1-2 1-1 1 0 1-4 1-1 1-1 1-1 1-1 1-3 1 0 1-2 1-1 1-1 1-1 1 1 1 2 1 0 1-1 1 1 1 1 1-1 1 0 1 0 1-4 1-1 1-2 1-5 1-2 1-5 1-4 1-2 1-3 1-1 1-2 1 0 1-1 1 1 1 1 1 0 1 2 1 4 1 1 1 3 1 5 1 2 1 3 1 6 1 2 1 5 1 3 1 5 1 4 1 4 1 0 1-2 1 1 1-2 1 0 1-4 1-3 1-6 1-6 1-5 1-5 1-5 1-6 1-3 1-4 1-2 1-1 1 0 1 2 1 2 1 3 1 4 1 3 1 5 1 4 1 4 1 7 1 2 1 4 1 4 1 3 1 2 1 4 1 0 1 4 1 0 1 2 1 3 1-2 1 3 1 0 1 2 1 2 1-2 1 2 1 0 1-1 1 2 1 0 1 0 1 2 1-2 1 0 1 2 1 1 1-3 1 2 1-1 1 0 1-1 1 3 1-2 1 0 1 0 1-1 1-1 1 2 1 2 1-2 1 2 1-1 1-2 1 3 1-1 1 0 1 0 1-3 1 1 1 0 1 2 1-1 1 1 1-1 1 1 1-1 1 0 1 0 1 0 1-1 1 0 1 0" stroke="#8a2be2" vector-effect="non-scaling-stroke"/>
<path d="M0 490l 1 0 1 0 1 0 1 0 1 0 1 0 1 0 1 0 1-1 1 1 1-2 1 2 1-1 1 0 1 0 1 2 1-2 1 0 1 1 1-1 1 0 1 1 1-1 1 1 1-1 1-1 1 2 1 0 1 0 1 0 1-1 1 0 1 1 1-2 1 2 1 0 1 0 1-2 1 0 1 2 1-1 1 0 1 1 1-1 1-1 1-1 1 0 1 0 1-1 1 2 1-2 1-2 1-1 1 1 1 0 1-1 1-3 1 0 1-1 1 1 1-3 1-1 1-3 1-1 1-1 1 0 1-2 1 0 1-3 1-1 1-4 1-1 1-1 1-1 1 0 1-3 1-1 1-1 1-1 1 2 1-1 1 3 1-4 1 3 1-1 1 2 1 0 1-3 1 0 1-1 1-1 1-4 1-1 1-5 1-5 1-2 1-2 1-5 1-2 1-1 1 1 1-3 1 4 1 0 1 0 1 1 1 4 1 3 1 2 1 4 1 1 1 6 1 2 1 4 1 3 1 4 1 5 1 4 1 3 1 2 1-1 1 0 1-1 1 0 1-4 1-4 1-5 1-7 1-3 1-5 1-5 1-7 1-4 1-2 1-3 1-2 1 1 1 3 1-1 1 5 1 4 1 2 1 5 1 5 1 3 1 5 1 2 1 6 1 4 1 2 1 3 1 3 1 1 1 4 1 0 1 3 1 0 1 2 1-1 1 3 1 0 1 1 1 0 1 1 1-1 1 1 1 1 1 0 1 2 1-2 1 1 1-1 1 1 1 1 1-3 1 3 1-3 1 2 1 2 1-2 1 0 1-2 1 1 1 1 1 0 1 0 1 0 1 1 1 1 1-2 1 0 1 0 1 2 1-2 1 3 1-4 1 1 1-1 1 1 1 2 1-2 1-1 1 1 1 2 1-1 1-2 1 2 1 1 1-3 1 3" stroke="#e0ffff" vector-effect="non-scaling-stroke"/>
<path d="M0 489l 1 0 1-1 1 2 1 0 1 1 1 0 1-2 1 1 1 1 1-2 1 1 1-2 1 2 1-1 1 0 1 0 1 0 1 1 1 0 1 0 1-1 1 2 1-2 1 1 1-1 1 0 1 0 1 2 1 0 1-1 1-1 1 1 1 0 1-1 1-2 1 4 1-2 1-1 1 0 1 0 1 2 1-2 1 2 1-1 1-1 1-1 1 1 1 0 1-3 1 0 1 2 1-3 1 0 1 0 1-1 1-1 1 0 1-1 1-2 1 0 1-2 1 1 1-2 1-2 1-2 1 0 1-1 1-3 1-1 1-1 1-4 1 0 1-3 1 1 1-1 1-2 1 0 1-1 1-1 1 0 1-2 1 2 1 1 1-1 1 0 1 0 1-1 1 1 1-1 1-1 1-2 1-3 1-3 1-4 1-3 1-2 1-4 1-3 1-3 1 2 1-3 1 0 1 2 1 1 1-1 1 2 1 3 1 2 1 4 1 3 1 1 1 4 1 6 1 3 1 2 1 3 1 6 1 3 1 3 1 1 1 2 1-1 1-2 1-3 1-2 1-4 1-6 1-2 1-5 1-7 1-3 1-8 1-2 1-3 1-3 1 0 1-2 1 3 1 3 1 1 1 3 1 3 1 6 1 4 1 5 1 4 1 6 1 2 1 1 1 5 1 2 1 3 1 2 1 1 1 3 1 0 1 1 1 2 1 1 1 2 1 0 1 0 1 2 1 1 1 0 1 1 1-1 1-1 1 2 1 0 1 0 1 1 1-1 1-1 1 0 1 0 1 0 1-1 1 3 1 1 1-2 1 0 1-2 1 2 1-1 1 0 1 1 1 1 1-2 1 0 1 1 1 0 1 1 1-1 1 0 1 0 1 0 1 2 1 0 1 0 1-2 1 0 1 1 1 1 1-3 1 0 1 1 1 1 1-1 1 1" stroke="#da70d6" vector-effect="non-scaling-stroke"/>
<path d="M0 490l 1-1 1 1 1-1 1 0 1 1 1 0 1 0 1 0 1 1 1-1 1 0 1 0 1-1 1-1 1 2 1 1 1-1 1-1 1 0 1 1 1-2 1 1 1 0 1 1 1-1 1 0 1 1 1 0 1 0 1-1 1 0 1 1 1 0 1-2 1 1 1 0 1 0 1 0 1 0 1 1 1-2 1 1 1 0 1 0 1-1 1 0 1 0 1-1 1-1 1 1 1-2 1 0 1-1 1 0 1-1 1-1 1 1 1-1 1-2 1-3 1 2 1-2 1-2 1-3 1 2 1-3 1-2 1 0 1-1 1-3 1 1 1-4 1-1 1 0 1-2 1 0 1-3 1 0 1 0 1 0 1-2 1 2 1 2 1-2 1 2 1-1 1-2 1-1 1 1 1-1 1-2 1-3 1-3 1-5 1 0 1-4 1-4 1-2 1-2 1-2 1 0 1-1 1 2 1 1 1 1 1 1 1 1 1 4 1 2 1 4 1 2 1 3 1 3 1 5 1 4 1 3 1 4 1 6 1-1 1 2 1 0 1 1 1-3 1 0 1-4 1-3 1-4 1-5 1-5 1-5 1-5 1-6 1-2 1-5 1-1 1 0 1-1 1 2 1 1 1 3 1 4 1 2 1 6 1 3 1 6 1 3 1 2 1 5 1 3 1 5 1 1 1 1 1 3 1 2 1 2 1 1 1 1 1 2 1 1 1 1 1 0 1 2 1 0 1 0 1 0 1 1 1 0 1 1 1-1 1 0 1 1 1 1 1-2 1 0 1 1 1 1 1-2 1 2 1-1 1-1 1 1 1-1 1 0 1 1 1 0 1-2 1 1 1 2 1 0 1-2 1 3 1-4 1 4 1-2 1-1 1 2 1 0 1-2 1 1 1 1 1-1 1 1 1 0 1-3 1 3 1 0 1-1 1 1 1-2 1 3" stroke="#5f9ea0" vector-effect="non-scaling-stroke"/>
<path d="M0 489l 1 2 1-1 1 0 1 0 1 0 1 0 1 0 1 0 1 0 1 0 1 1 1 1 1-2 1 0 1-2 1 2 1-1 1 0 1 0 1 1 1 0 1 0 1 1 1-2 1 1 1-1 1 0 1 1 1-1 1 0 1 0 1 1 1-1 1 2 1-2 1-1 1 3 1-1 1 0 1-2 1 1 1-1 1 0 1 1 1-2 1 0 1-1 1 1 1 1 1-1 1-1 1-1 1 0 1-1 1 0 1-2 1 1 1-3 1 2 1-4 1 0 1-2 1 0 1-3 1 0 1-1 1-2 1-1 1-2 1 0 1-1 1-4 1-1 1 0 1-3 1 1 1-2 1-1 1 1 1-3 1 3 1 1 1-1 1-1 1 2 1-1 1-2 1 2 1-2 1 0 1-2 1-4 1-2 1-3 1-3 1-2 1-4 1-3 1-3 1-3 1 4 1-1 1 2 1 0 1-1 1 1 1 2 1 3 1 3 1 1 1 5 1 4 1 3 1 4 1 2 1 6 1 4 1 2 1 5 1-1 1 0 1 0 1-2 1-1 1-2 1-6 1-3 1-3 1-6 1-8 1-4 1-4 1-1 1-4 1-2 1-1 1 1 1 2 1 1 1 1 1 5 1 3 1 3 1 6 1 4 1 1 1 6 1 2 1 4 1 4 1 2 1 2 1 2 1 0 1 4 1-1 1 4 1-1 1 2 1-1 1 1 1 2 1-1 1 2 1-1 1 2 1-1 1 1 1 1 1-2 1 2 1 1 1 0 1-2 1 2 1 0 1-1 1 0 1 0 1-1 1 1 1 2 1-2 1 1 1-1 1 0 1 1 1-2 1 2 1-1 1 0 1 1 1-1 1 1 1 0 1-2 1 1 1 2 1-2 1 1 1 0 1 0 1-1 1-1 1 2 1-1 1 0 1 2 1-2 1 1" stroke="#cd853f" vector-effect="non-scaling-stroke"/>
<path d="M0 488l 1 2 1 1 1-3 1 0 1 3 1-3 1 3 1-1 1-2 1 2 1-1 1 1 1 0 1-2 1 1 1 0 1-1 1 2 1-2 1-1 1 3 1 0 1 0 1-1 1-1 1 1 1 1 1-1 1 0 1 1 1-1 1 0 1 1 1 0 1-1 1 0 1 0 1-2 1 1 1 1 1 1 1-2 1 1 1 0 1 0 1 0 1-4 1 1 1 2 1-1 1-1 1-1 1-2 1 2 1-2 1 2 1-3 1-1 1-1 1 0 1-1 1-3 1-1 1-1 1-1 1-1 1-2 1-1 1-2 1 0 1-2 1 0 1-1 1-3 1 1 1-3 1 0 1-2 1 0 1 0 1 0 1 1 1-1 1 1 1-1 1 1 1 0 1-2 1-1 1 1 1-1 1-4 1-4 1-2 1-3 1-4 1-3 1-1 1-4 1 1 1-2 1 4 1-2 1 1 1 3 1-1 1 0 1 4 1 3 1 1 1 4 1 4 1 2 1 6 1 3 1 3 1 3 1 5 1 1 1 0 1 2 1-1 1 0 1-3 1-2 1-3 1-4 1-6 1-4 1-5 1-7 1-3 1-3 1-2 1-2 1 0 1-2 1 4 1 0 1 3 1 2 1 5 1 4 1 2 1 5 1 4 1 1 1 6 1 3 1 3 1 1 1 3 1 1 1 2 1 3 1 1 1 1 1 1 1 1 1 1 1 1 1-1 1 1 1 1 1-1 1 1 1 1 1-1 1 2 1-1 1 1 1 1 1-2 1 1 1 0 1 0 1 0 1-1 1 0 1 0 1 0 1 2 1 1 1-1 1 0 1 0 1-1 1 1 1 0 1-1 1 0 1 1 1-1 1 1 1-1 1 2 1-1 1-1 1 1 1-1 1 2 1-1 1 1 1-1 1-1 1 0 1 1 1-1 1 2 1-1" stroke="#66cdaa" vector-effect="non-scaling-stroke"/>
<path d="M0 489l 1 0 1 0 1 1 1-1 1 0 1 0 1 0 1 0 1 1 1 0 1 0 1 0 1-1 1 0 1-1 1 2 1-1 1 2 1-2 1 1 1 0 1-1 1 1 1-1 1-1 1 1 1 1 1-1 1 0 1 0 1 2 1-2 1 0 1 0 1 1 1-2 1 3 1-2 1-1 1 1 1 1 1-2 1 1 1 0 1 1 1-1 1-2 1 1 1-1 1-1 1 0 1-1 1 0 1 0 1-1 1-1 1 1 1-2 1 0 1-3 1 0 1-1 1-2 1 0 1-2 1 0 1-3 1-1 1-1 1-2 1-1 1-2 1 0 1-3 1 0 1-1 1 0 1 0 1-3 1 1 1-1 1 0 1 2 1-1 1 2 1-2 1 1 1 0 1-1 1-1 1-4 1 1 1-6 1-2 1-2 1-5 1-3 1-2 1-1 1-2 1 1 1 1 1-1 1 1 1 2 1-1 1 2 1 4 1 0 1 4 1 4 1 2 1 5 1 2 1 4 1 4 1 2 1 4 1 3 1 1 1 0 1-1 1-1 1 0 1-3 1-5 1-3 1-4 1-6 1-5 1-4 1-6 1-1 1-4 1-2 1-1 1 1 1 0 1 1 1 2 1 5 1 4 1 4 1 4 1 3 1 3 1 4 1 4 1 3 1 2 1 3 1 1 1 3 1 3 1 1 1 1 1 0 1 3 1 0 1 1 1 0 1 1 1 1 1-1 1 0 1 1 1 2 1-1 1 1 1 0 1-1 1 1 1 1 1-2 1 1 1 0 1 1 1-1 1-2 1 3 1 1 1-1 1-2 1 2 1-2 1 2 1-1 1 1 1 2 1-3 1 1 1-2 1 0 1 1 1 0 1 1 1 1 1-1 1-1 1 1 1-2 1 3 1 0 1-2 1 1 1 0 1 1 1 0 1 0 1-1" stroke="#1e90ff" vector-effect="non-scaling-stroke"/>
<path d="M0 490l 1-1 1 2 1-2 1 0 1 0 1 1 1 1 1-1 1 2 1-3 1 2 1-1 1-1 1 0 1 1 1-1 1-1 1 2 1 0 1 0 1-1 1-1 1 1 1 0 1 0 1 0 1 1 1 0 1-3 1 1 1 2 1 0 1 1 1-1 1-1 1 2 1-2 1 0 1 0 1 0 1-1 1 2 1-2 1 0 1 1 1 0 1-2 1 0 1 0 1 0 1 0 1 0 1-2 1 1 1-1 1 1 1-3 1 0 1-1 1-2 1-2 1 2 1-4 1-1 1 0 1-2 1 0 1-3 1 1 1-3 1 0 1-3 1-2 1-2 1 0 1 2 1-4 1-1 1 0 1 0 1 0 1 1 1-1 1 1 1-1 1 2 1-1 1 0 1-2 1 0 1-3 1-1 1-3 1-3 1-3 1-3 1-3 1-2 1-3 1 0 1-1 1 1 1-1 1 2 1 1 1 0 1 4 1 1 1 5 1 1 1 3 1 2 1 4 1 4 1 3 1 2 1 5 1 2 1 2 1 2 1-1 1 0 1-1 1 1 1-4 1-3 1-6 1-4 1-4 1-6 1-3 1-6 1-1 1-2 1-2 1-3 1 2 1 1 1 3 1 1 1 3 1 4 1 2 1 4 1 4 1 4 1 5 1 2 1 4 1 1 1 2 1 5 1-1 1 0 1 5 1 0 1-1 1 4 1 1 1 1 1 0 1-1 1 2 1 0 1 0 1 1 1 0 1 1 1-1 1 0 1 1 1 0 1 0 1 0 1-1 1 0 1-1 1 2 1-1 1 1 1 0 1 1 1-1 1 0 1 0 1 1 1 0 1 1 1-2 1-1 1 1 1 0 1 0 1 0 1-1 1 3 1-1 1-1 1 0 1 1 1-1 1 1 1-1 1 1 1-2 1 2 1-1 1 1 1-1 1 0" stroke="#ff69b4" vector-effect="non-scaling-stroke"/>
<path d="M0 490l 1-1 1-1 1 2 1-1 1 2 1-2 1 0 1 1 1 1 1-2 1 0 1 0 1 0 1 0 1-1 1 2 1 0 1 0 1 1 1-1 1 0 1-1 1-1 1 2 1-1 1 0 1 2 1-1 1-1 1 1 1-2 1 2 1 0 1 0 1-1 1-1 1 2 1-1 1 1 1 0 1 0 1-2 1 0 1 1 1-2 1 3 1-3 1 1 1 1 1-1 1-2 1 1 1-3 1 2 1-2 1-1 1 1 1-1 1-2 1 1 1-2 1-3 1 0 1-1 1-2 1 2 1-4 1-1 1-1 1-1 1-2 1 1 1-3 1-1 1-1 1 0 1-2 1 0 1-1 1 2 1-2 1-1 1 2 1-1 1-1 1 1 1 1 1-2 1 0 1-2 1 0 1-4 1-2 1-3 1-2 1-5 1-2 1-2 1 1 1-4 1 1 1-1 1 1 1 1 1 2 1 0 1 1 1 3 1 2 1 3 1 3 1 3 1 3 1 2 1 4 1 3 1 4 1 4 1 1 1 1 1 0 1 0 1-1 1-1 1-1 1-4 1-4 1-5 1-5 1-3 1-5 1-4 1-3 1-2 1-3 1-1 1 1 1 1 1 0 1 4 1 3 1 4 1 3 1 2 1 5 1 1 1 6 1 2 1 4 1 3 1 0 1 4 1 1 1 2 1 3 1-1 1 1 1 1 1 2 1-1 1 1 1 0 1 2 1-1 1 2 1-1 1 0 1 1 1 1 1 0 1-1 1 0 1 1 1-1 1 2 1 0 1-1 1-1 1 2 1 0 1 1 1-2 1 0 1 0 1 0 1 0 1 0 1 1 1-1 1 0 1 0 1 2 1-1 1 0 1-1 1 2 1-3 1 2 1-1 1 0 1-1 1 3 1-1 1-1 1 0 1 0 1 0 1 2 1-1 1 0" stroke="#3cb371" vector-effect="non-scaling-stroke"/>
<path d="M0 489l 1 0 1 0 1 2 1-1 1-1 1 1 1 0 1-1 1 0 1 0 1 0 1 0 1-1 1 2 1-1 1 0 1 2 1-2 1 3 1-3 1 0 1 1 1-2 1 1 1 0 1 1 1 0 1-1 1 1 1-2 1 1 1-1 1 0 1 2 1-1 1 2 1-2 1 0 1 0 1 1 1-1 1 1 1-2 1 1 1-1 1 1 1-1 1 1 1-3 1 2 1-2 1 0 1 0 1-2 1 1 1 0 1-2 1 0 1-2 1 2 1-2 1-1 1-2 1 0 1-2 1-2 1-2 1-1 1 0 1-1 1-1 1-3 1-1 1-1 1-2 1-1 1 1 1-1 1 1 1-3 1 3 1-2 1 0 1 1 1-1 1 1 1-1 1 2 1-2 1-1 1-1 1-2 1-4 1-4 1-2 1-3 1-3 1-1 1-2 1-4 1 3 1 0 1 0 1 1 1 1 1 1 1 2 1 2 1 3 1 2 1 5 1 0 1 4 1 1 1 6 1 1 1 5 1 3 1 2 1 3 1-1 1-1 1-3 1 0 1-1 1-5 1-4 1-4 1-4 1-5 1-4 1-3 1-4 1-2 1-3 1 1 1-1 1 3 1 2 1 2 1 3 1 2 1 3 1 3 1 5 1 2 1 5 1 2 1 2 1 3 1 2 1 2 1 2 1 1 1 2 1 1 1 2 1-1 1 3 1-1 1 2 1 0 1 1 1 0 1 0 1-1 1 0 1 1 1 1 1 1 1-1 1 1 1-1 1 0 1 1 1 0 1-1 1 1 1 0 1-1 1 0 1 3 1-2 1-1 1 1 1 1 1-1 1 1 1-1 1 1 1 1 1-2 1 1 1 0 1 1 1-2 1 1 1 0 1-1 1 0 1 0 1 0 1 1 1 0 1-1 1 0 1 2 1-1 1 1 1-2" stroke="#000080" vector-effect="non-scaling-stroke"/>
<path d="M0 490l 1-3 1 1 1 2 1-1 1 2 1-2 1 0 1 1 1-1 1 0 1 1 1 0 1-1 1 0 1 1 1 0 1-2 1 2 1-1 1 1 1 1 1 0 1-2 1 1 1-1 1-1 1 1 1 1 1 0 1 1 1-1 1-2 1 2 1 0 1-1 1 1 1-1 1 1 1 0 1-1 1 0 1 0 1 1 1-2 1 0 1 1 1-1 1-2 1 1 1 0 1 0 1-1 1 1 1-3 1 2 1-2 1 0 1-3 1 1 1-1 1 0 1-1 1-1 1-2 1-1 1-1 1-1 1-2 1 0 1-3 1-1 1-1 1-1 1-1 1-1 1-1 1 0 1 0 1-2 1 0 1-1 1 2 1 0 1 0 1-1 1 1 1-1 1 0 1 0 1-2 1 0 1-3 1-2 1-5 1-3 1-2 1-2 1-2 1-3 1 0 1-1 1 2 1 0 1 1 1-1 1 4 1 1 1 1 1 2 1 4 1 2 1 2 1 4 1 2 1 4 1 3 1 2 1 6 1 1 1 1 1-1 1 1 1-1 1 0 1-4 1-3 1-4 1-5 1-2 1-6 1-4 1-5 1-3 1 0 1-3 1-1 1 0 1 0 1 3 1 3 1 2 1 3 1 2 1 3 1 5 1 3 1 2 1 4 1 4 1 3 1 1 1 1 1 2 1 3 1-1 1 3 1 3 1-2 1-1 1 4 1-1 1 1 1 2 1-3 1 1 1 2 1 0 1 1 1 0 1 0 1 0 1 0 1 1 1 0 1 0 1 1 1-2 1 0 1-1 1-1 1 3 1 0 1 0 1-1 1 0 1 1 1-2 1 0 1 1 1 2 1-2 1 0 1 1 1 0 1 0 1 0 1-1 1-1 1 2 1-2 1 0 1 0 1 1 1 0 1 1 1-1 1-1 1 1 1 0 1 1" stroke="#deb887" vector-effect="non-scaling-stroke"/>
<path d="M0 491l 1-2 1 1 1-1 1 1 1 0 1 0 1-2 1 2 1 0 1-1 1 1 1-1 1 0 1 1 1-1 1 2 1-2 1 1 1 0 1 0 1 0 1 0 1-1 1-1 1 2 1-1 1 2 1-3 1 1 1-1 1 0 1 1 1 1 1 0 1-1 1 2 1-2 1 0 1 0 1 0 1 0 1 0 1-1 1 1 1 0 1 0 1-1 1-1 1 0 1 1 1-2 1 1 1-1 1-1 1 1 1-1 1 1 1-3 1-1 1 0 1-2 1 0 1-2 1 0 1-1 1-2 1-2 1 0 1-2 1-1 1-1 1-1 1-2 1 1 1-2 1-1 1 0 1 0 1-2 1 0 1-1 1 2 1-1 1 1 1-2 1 1 1-1 1 2 1-3 1-1 1 0 1-2 1-1 1-5 1-3 1-3 1-2 1-2 1 1 1-3 1-1 1 1 1 0 1 1 1 0 1 0 1 1 1 5 1 2 1 3 1 2 1 2 1 3 1 3 1 3 1 2 1 4 1 3 1 3 1 2 1-1 1-2 1 1 1-2 1-2 1-3 1-4 1-4 1-3 1-5 1-5 1-2 1-3 1-3 1-1 1-3 1 2 1 1 1 1 1 2 1 2 1 4 1 4 1 1 1 4 1 4 1 2 1 4 1 4 1 0 1 2 1 4 1 2 1-1 1 2 1 2 1 1 1 0 1 2 1 0 1 1 1 2 1-1 1 1 1-1 1 0 1 0 1 0 1 0 1 2 1 0 1-1 1 3 1-1 1-1 1 1 1-1 1 1 1-1 1 1 1 0 1 0 1 0 1 0 1-1 1 1 1-1 1-1 1 1 1 0 1 0 1 1 1 1 1-1 1-1 1 2 1-1 1-1 1 0 1 0 1 0 1 0 1 1 1 0 1-1 1 2 1-2 1 0 1 0 1 0" stroke="#48d1cc" vector-effect="non-scaling-stroke"/>
<path d="M0 490l 1 0 1-1 1-1 1 0 1 3 1-1 1 0 1-2 1 1 1 2 1-1 1 1 1 0 1-2 1 0 1 1 1 0 1-1 1-1 1 3 1 0 1-1 1 0 1-2 1 1 1 1 1 0 1-2 1 3 1-2 1 1 1-1 1 2 1-1 1-1 1 1 1 0 1-1 1-1 1 2 1-1 1 0 1 0 1-1 1 0 1 0 1-1 1 2 1 0 1-1 1 0 1-1 1 1 1-3 1 1 1-3 1 2 1-2 1-1 1-1 1-1 1 1 1-3 1-2 1 0 1-2 1 0 1 0 1-2 1 1 1-2 1-2 1-3 1 0 1-1 1 2 1-4 1-1 1 1 1 0 1 0 1 0 1-2 1 3 1-1 1 1 1 0 1-1 1 0 1-2 1-1 1-3 1-3 1-4 1 0 1-4 1-2 1-3 1-1 1-2 1 1 1 2 1-1 1 0 1 1 1 2 1 1 1 2 1 2 1 4 1 1 1 4 1 1 1 4 1 4 1 2 1 3 1 3 1 1 1 2 1 0 1 0 1-1 1-1 1-2 1-3 1-5 1-2 1-5 1-4 1-5 1-3 1-2 1-2 1-3 1-1 1 0 1 3 1 2 1 1 1 2 1 2 1 5 1 3 1 3 1 2 1 4 1 3 1 3 1 1 1 2 1 3 1 2 1 1 1-1 1 2 1 1 1 1 1 3 1 1 1-2 1 2 1 0 1 1 1-1 1 0 1 1 1 0 1 1 1 0 1-1 1 1 1-1 1 2 1-1 1 0 1 1 1 0 1-1 1 1 1 0 1 0 1-1 1 0 1 1 1-2 1 1 1 1 1 0 1-1 1 0 1 1 1-1 1 1 1 0 1 0 1-2 1 1 1 0 1 1 1-1 1 0 1-1 1 3 1-1 1-1 1 0 1 0 1 1 1-1" stroke="#b22222" vector-effect="non-scaling-stroke"/>
<path d="M0 490l 1-2 1 2 1-2 1 1 1 0 1-1 1 1 1 1 1 0 1-1 1 0 1-1 1 3 1 0 1-3 1 1 1 3 1-2 1 0 1-1 1 2 1 0 1-2 1 2 1-2 1 2 1-1 1-1 1 0 1 2 1-2 1 0 1 0 1 0 1 1 1 0 1-1 1 1 1-1 1 0 1 2 1-1 1-1 1-1 1 2 1-2 1 0 1 1 1 0 1-1 1-1 1-1 1 1 1 0 1-1 1 1 1-3 1-1 1 0 1-2 1 0 1 0 1-1 1-2 1 1 1-3 1-2 1-1 1 0 1-2 1-2 1 1 1-2 1 1 1-3 1 0 1-1 1-2 1 1 1 0 1 0 1 1 1 0 1-2 1 2 1 0 1-1 1-1 1 0 1-1 1-1 1-3 1-1 1-4 1-2 1-2 1-2 1-3 1-1 1-3 1 3 1-2 1 0 1 3 1-1 1 1 1 3 1 1 1 1 1 4 1 3 1 1 1 4 1 2 1 4 1 1 1 3 1 4 1 2 1 0 1 1 1-1 1-1 1-1 1-3 1-3 1-4 1-3 1-5 1-3 1-3 1-3 1-3 1-2 1-3 1 2 1-1 1 1 1 1 1 3 1 2 1 2 1 3 1 4 1 4 1 2 1 4 1 3 1 1 1 3 1 2 1 1 1 2 1 1 1 1 1 2 1-1 1 3 1 0 1 0 1 0 1 3 1-1 1 0 1-1 1 1 1 0 1 2 1-1 1-1 1 1 1 2 1 0 1-2 1 1 1 1 1-1 1-1 1 1 1 1 1-1 1 2 1-2 1 1 1 0 1 0 1 0 1 0 1-1 1 1 1 0 1 0 1-1 1-1 1 1 1 0 1 1 1 0 1-1 1 0 1 0 1 0 1 0 1 0 1 1 1-1 1 1 1-2 1 3 1-2" stroke="#7fff00" vector-effect="non-scaling-stroke"/>
<path d="M0 489l 1 1 1-1 1 1 1-1 1 2 1-1 1 0 1-1 1 0 1 2 1 1 1-4 1 4 1-3 1 0 1 1 1-1 1 0 1 1 1 0 1 0 1 0 1-1 1 2 1-1 1 0 1-1 1 0 1 1 1 1 1-2 1-1 1 1 1 1 1-2 1 2 1-2 1 2 1-1 1 0 1 0 1 0 1 0 1 0 1 1 1-1 1-1 1-1 1 0 1 1 1-3 1 1 1 2 1-2 1 0 1 0 1 0 1-2 1-2 1 1 1-2 1 0 1-1 1-3 1 1 1-1 1-2 1-1 1 0 1-2 1-1 1-1 1-2 1-1 1-1 1-1 1 1 1 0 1-2 1 0 1 0 1 0 1 1 1 0 1 1 1-2 1 0 1 0 1-1 1 0 1-1 1-2 1-3 1-3 1-2 1-3 1-2 1-2 1-1 1-1 1 0 1-2 1 1 1 3 1 0 1 1 1 0 1 3 1 0 1 5 1 2 1 1 1 3 1 3 1 3 1 3 1 3 1 2 1 3 1 2 1-2 1-1 1-1 1 0 1-1 1-4 1-4 1-3 1-5 1-4 1-2 1-3 1-2 1-2 1-3 1 0 1 1 1-2 1 4 1 2 1 2 1 2 1 3 1 4 1 2 1 4 1 3 1 2 1 2 1 2 1 2 1 2 1 1 1 3 1 1 1 0 1 1 1 1 1 2 1 0 1 2 1-2 1 1 1 1 1 0 1-2 1 2 1-1 1 3 1-3 1 1 1 0 1 1 1 0 1-1 1 2 1-2 1 1 1 1 1 1 1-4 1 3 1-1 1 2 1 0 1-2 1-1 1 2 1 0 1-2 1 2 1 0 1-1 1 1 1 0 1-3 1 1 1 2 1-1 1 0 1 0 1 0 1 2 1-2 1 1 1 0 1-2 1 3 1-2 1 2" stroke="#ba55d3" vector-effect="non-scaling-stroke"/>
<path d="M0 488l 1 1 1 1 1 1 1-1 1 0 1-1 1 1 1 0 1-1 1 1 1 0 1-2 1 0 1 2 1-1 1 0 1 0 1 1 1 0 1 0 1-2 1 1 1 2 1-1 1 0 1-2 1 1 1-1 1 2 1 0 1-1 1-1 1 2 1-1 1 0 1 1 1-1 1 2 1-1 1-1 1 1 1-1 1-1 1 2 1-2 1 1 1 1 1 0 1-2 1 0 1-1 1-1 1 0 1 0 1-2 1 1 1 0 1-3 1 0 1 1 1-1 1-2 1 0 1-1 1-1 1-1 1 1 1-4 1-1 1 0 1-1 1-2 1 0 1-2 1 0 1-1 1 0 1-1 1-2 1 1 1-1 1 0 1 1 1 0 1 1 1 0 1-2 1 1 1-1 1 0 1 0 1-4 1-1 1-5 1-2 1-2 1 0 1-4 1-1 1-1 1 0 1-1 1 2 1 0 1 0 1 0 1 2 1 2 1 3 1 1 1 4 1 2 1 2 1 2 1 3 1 3 1 4 1 3 1 2 1 1 1-2 1 0 1-1 1-1 1 0 1-3 1-4 1-5 1-2 1-6 1-3 1-2 1-2 1-2 1-3 1-1 1 2 1 1 1 0 1 2 1 4 1 2 1 2 1 4 1 3 1 2 1 2 1 5 1 1 1 1 1 4 1 1 1 2 1 1 1 0 1 3 1-2 1 3 1 1 1 0 1 1 1 1 1-2 1 2 1-1 1 2 1-2 1 2 1-2 1 1 1-1 1 2 1 0 1 0 1-2 1 2 1-1 1 1 1 1 1 1 1-2 1 1 1-1 1-1 1 1 1 1 1-1 1 0 1 0 1 0 1 0 1-1 1 3 1-1 1-1 1-1 1 2 1-1 1-1 1 0 1 3 1-1 1-1 1 1 1 0 1-2 1 1 1 1 1-1 1 0" stroke="#daa520" vector-effect="non-scaling-stroke"/>
<path d="M0 489l 1 1 1 2 1-2 1-1 1 1 1-2 1 2 1-1 1 0 1 2 1-3 1 1 1 0 1 0 1 2 1-2 1 1 1-1 1 0 1 2 1-1 1 0 1 0 1 0 1-1 1 0 1 1 1-1 1 0 1 1 1-2 1 1 1 0 1 0 1 0 1 1 1 1 1-2 1 1 1-1 1 0 1-1 1 1 1 0 1 0 1 1 1-3 1 2 1-1 1-1 1 0 1-1 1 0 1 0 1-2 1 1 1-1 1 2 1-3 1 0 1-2 1 1 1-2 1 0 1-1 1-2 1 0 1-2 1-2 1 1 1-2 1 0 1-1 1-2 1-2 1 0 1-1 1 0 1 1 1-2 1 1 1 0 1 2 1-4 1 2 1 0 1 0 1-1 1 1 1-2 1 0 1-2 1-5 1-1 1-3 1-1 1-3 1-3 1 1 1-2 1 1 1 0 1-1 1 2 1-1 1 2 1 0 1 3 1 2 1 3 1 1 1 3 1 3 1 2 1 3 1 2 1 2 1 3 1 4 1-1 1 1 1-1 1-2 1 0 1-2 1-2 1-3 1-4 1-4 1-4 1-3 1-3 1-3 1-1 1-1 1-1 1-2 1 3 1 1 1 2 1 1 1 4 1 2 1 2 1 5 1 2 1 3 1 3 1 2 1 1 1 2 1 2 1 1 1 2 1 2 1 1 1 0 1 0 1 2 1 0 1 0 1 1 1 0 1 1 1-1 1 3 1-1 1-1 1 1 1 0 1-1 1 2 1-1 1-1 1 0 1 3 1-3 1 2 1 0 1 1 1-1 1 1 1-2 1 1 1 0 1-1 1 0 1 1 1-1 1 0 1 1 1-1 1 0 1 1 1 0 1-2 1 2 1 1 1-1 1-1 1 1 1-2 1 2 1-1 1 1 1-1 1-1 1 2 1-1 1 0" stroke="#87cefa" vector-effect="non-scaling-stroke"/>
<path d="M0 489l 1 0 1 2 1-1 1 0 1-1 1 0 1 0 1 1 1 0 1-1 1 1 1 0 1-2 1 3 1-1 1 0 1 1 1-1 1 1 1-1 1 1 1-1 1 0 1-1 1 0 1 1 1-1 1 2 1-1 1 0 1-1 1 1 1-1 1 0 1-1 1 2 1 0 1-1 1 1 1-2 1 1 1 1 1-1 1 1 1 0 1-1 1 0 1-1 1 0 1 0 1-2 1 1 1 1 1-1 1-1 1-1 1 0 1-1 1-1 1-2 1 0 1 0 1 0 1-3 1-1 1 2 1-3 1-2 1 0 1 0 1-1 1-4 1 1 1-2 1 0 1 0 1-1 1-1 1 0 1 1 1 1 1-3 1 3 1-1 1 1 1-2 1 0 1 0 1 1 1-1 1-3 1-1 1-3 1-1 1-3 1-2 1-2 1-1 1-5 1 1 1 0 1 2 1-1 1 0 1 0 1 1 1 2 1 2 1 1 1 2 1 3 1 2 1 4 1 2 1 3 1 3 1 3 1-1 1 3 1 1 1 0 1 1 1-1 1-1 1-1 1-4 1-3 1-3 1-4 1-2 1-4 1-4 1-3 1-2 1-1 1-2 1 2 1 1 1 2 1 1 1 3 1 2 1 1 1 5 1 1 1 3 1 2 1 4 1 1 1 3 1 2 1-1 1 4 1 0 1 2 1 1 1 1 1 1 1 1 1 0 1 0 1 1 1 2 1-1 1 1 1-2 1 2 1-1 1 1 1 0 1-1 1 1 1 0 1 1 1 0 1 0 1-1 1 0 1-1 1 1 1 0 1 0 1 1 1-1 1 0 1 0 1 1 1-1 1 0 1 0 1 1 1-2 1 3 1-1 1-1 1 0 1 1 1-1 1-1 1 2 1 0 1-2 1 1 1 1 1 0 1-1 1 2 1-1 1-1 1 1" stroke="#f08080" vector-effect="non-scaling-stroke"/>
<path d="M0 489l 1 1 1 0 1 0 1 0 1 0 1-1 1 1 1 0 1 0 1-2 1 1 1 2 1-3 1 1 1 1 1-2 1 1 1 1 1 0 1 1 1-2 1 0 1 1 1 1 1-2 1 0 1 1 1-2 1 2 1-1 1 1 1 0 1 0 1-2 1 1 1 1 1 0 1 0 1 1 1-2 1 0 1 1 1-1 1 1 1-2 1 1 1-2 1 1 1 0 1 0 1-1 1 0 1-1 1 0 1 0 1 0 1-2 1 0 1 0 1 0 1-2 1-1 1 0 1-3 1 2 1-2 1-1 1-1 1-2 1-1 1-1 1 0 1-2 1 1 1-3 1 1 1-3 1 0 1 1 1 0 1-1 1 1 1 0 1 1 1-1 1 0 1 0 1-1 1 0 1 1 1-3 1-2 1-2 1-3 1-1 1-1 1-5 1-1 1-2 1 0 1-1 1 1 1 0 1 2 1 1 1 2 1 0 1 1 1 1 1 4 1 1 1 3 1 1 1 1 1 5 1 2 1 3 1 3 1 1 1 1 1 1 1-1 1-3 1 0 1-2 1-3 1-1 1-4 1-4 1-3 1-3 1-3 1-2 1-1 1-3 1 0 1-1 1 1 1 3 1 0 1 4 1 2 1 4 1 0 1 4 1 1 1 3 1 4 1 2 1 1 1 2 1 1 1 3 1-1 1 2 1 1 1 1 1 2 1 0 1 1 1 0 1 0 1 1 1 0 1 0 1-1 1 1 1 0 1 0 1 0 1-1 1 3 1-1 1-1 1 0 1 2 1-1 1 0 1 2 1-1 1 1 1-3 1 2 1-1 1 0 1-1 1 1 1 1 1-1 1-1 1 1 1 1 1-1 1 2 1-3 1 1 1 0 1 2 1 0 1-2 1 0 1 0 1 0 1 1 1-1 1 0 1 1 1 0 1-2 1 1" stroke="#ffa500" vector-effect="non-scaling-stroke"/>
<path d="M0 490l 1-1 1 2 1-1 1 2 1 0 1-2 1-1 1 1 1 0 1 0 1-1 1 1 1 0 1 0 1 0 1-1 1-1 1 2 1-2 1 1 1 1 1-1 1 1 1 0 1 0 1 0 1 1 1-3 1 2 1-1 1 1 1-1 1 0 1 1 1-1 1 1 1-1 1-1 1 0 1 1 1 0 1 1 1-1 1-2 1 3 1 0 1-1 1-1 1 1 1-1 1 0 1-2 1 1 1 1 1-1 1-1 1-1 1-1 1 1 1-2 1 0 1-1 1-2 1-1 1 0 1 0 1-1 1-2 1-2 1 1 1-2 1 0 1-1 1-2 1 0 1-2 1 0 1-1 1 1 1 1 1-2 1-1 1 1 1 0 1 0 1 0 1 1 1-1 1 1 1-3 1 1 1-2 1-4 1 0 1-3 1-2 1-3 1-1 1-2 1-1 1 1 1-1 1 2 1 0 1 0 1 1 1 1 1 3 1 1 1 2 1 2 1 2 1 2 1 4 1 2 1 0 1 5 1 3 1 1 1-1 1 2 1 0 1-3 1 0 1-2 1-2 1-2 1-3 1-5 1-2 1-5 1-2 1-3 1 0 1-2 1-2 1 2 1 1 1 0 1 4 1 1 1 2 1 2 1 3 1 2 1 4 1 1 1 2 1 4 1-1 1 3 1 2 1 1 1 2 1 2 1 1 1-1 1 2 1 0 1 0 1 1 1 0 1-1 1 1 1 2 1 0 1-2 1 1 1 1 1-1 1 2 1-1 1 1 1 0 1-1 1-1 1 0 1 0 1 3 1 1 1-2 1-1 1 1 1-1 1-1 1 2 1-1 1 1 1-2 1 2 1-1 1-1 1 1 1 0 1-1 1 1 1 2 1-2 1 0 1 1 1 0 1-1 1 2 1-2 1 1 1-1 1 1 1-2 1 3 1 0" stroke="#90ee90" vector-effect="non-scaling-stroke"/>
<path d="M0 490l 1 0 1-2 1 1 1 2 1-1 1-1 1-1 1 2 1 1 1-2 1 1 1-1 1 0 1-1 1 1 1 0 1 0 1 0 1 1 1-1 1 0 1-1 1 2 1 0 1 1 1 1 1-3 1-1 1 2 1 0 1-1 1 0 1 0 1 0 1 0 1 1 1 1 1-1 1-1 1 0 1 0 1 1 1 0 1-1 1 1 1-1 1 1 1-1 1 0 1-1 1-1 1 1 1-1 1 0 1 0 1 0 1-2 1 0 1-1 1 0 1-1 1-1 1-1 1-1 1 1 1-2 1 0 1-1 1-3 1 0 1-1 1 0 1-3 1 0 1 0 1-1 1-1 1 0 1-1 1 1 1 1 1-2 1 0 1 0 1 1 1 1 1-2 1-1 1 0 1-1 1-1 1-1 1-3 1-1 1-2 1-2 1-2 1-3 1 1 1-2 1 1 1-1 1 0 1 1 1 1 1 2 1-2 1 2 1 4 1-1 1 5 1 1 1 2 1 3 1 2 1 2 1 3 1 0 1 4 1 1 1 1 1-2 1 0 1-2 1-1 1-2 1-3 1-3 1-4 1-4 1-2 1-2 1-4 1 1 1-3 1-1 1-1 1 3 1 1 1 1 1 2 1 2 1 3 1 4 1 2 1 2 1 4 1-1 1 3 1 3 1 2 1 2 1 0 1 1 1 1 1 1 1-1 1 2 1 1 1 1 1-1 1 0 1 1 1 1 1 0 1 0 1 0 1 0 1 1 1 0 1 0 1-1 1 3 1-2 1 1 1-1 1-1 1 4 1-2 1 0 1-1 1 0 1 0 1 2 1-2 1-1 1 2 1 0 1-1 1 0 1 1 1-1 1 0 1 0 1 0 1 2 1-3 1 1 1 2 1-2 1 0 1 1 1 0 1 0 1-2 1 1 1 0 1-1 1 3 1-1" stroke="#2f4f4f" vector-effect="non-scaling-stroke"/>
<path d="M0 489l 1 2 1-2 1 1 1-1 1 2 1-1 1 1 1-2 1 0 1 1 1 1 1-2 1 0 1 1 1-1 1 2 1-2 1 1 1 1 1-4 1 3 1-2 1 0 1 2 1 0 1-1 1 0 1 0 1 0 1 1 1 0 1 0 1 1 1-2 1 1 1 1 1-1 1-2 1 1 1-1 1 2 1 1 1-3 1 1 1-1 1 1 1-1 1 1 1-1 1 0 1 0 1-2 1 0 1 1 1-1 1-2 1 3 1-2 1-1 1 0 1 0 1-2 1-1 1-1 1 1 1-3 1 0 1 1 1-2 1 0 1-1 1-1 1-3 1-1 1 2 1-2 1 0 1-1 1 0 1-1 1-1 1 1 1 0 1 1 1-1 1 0 1 1 1-1 1-2 1 1 1-2 1 0 1-4 1-1 1-3 1-1 1-1 1-3 1-1 1-1 1 1 1-2 1 3 1 0 1-1 1 0 1 4 1 0 1 3 1 1 1 1 1 4 1 1 1 3 1 1 1 4 1 3 1 0 1 2 1-1 1 1 1-1 1 1 1-1 1-1 1-3 1-4 1-1 1-2 1-5 1-4 1-2 1-1 1-3 1-1 1-2 1 1 1 2 1-1 1 5 1 1 1 2 1 3 1 1 1 2 1 3 1 3 1 2 1 2 1 2 1 0 1 3 1 3 1 0 1-1 1 1 1 4 1-1 1 0 1 2 1-1 1-1 1 1 1 1 1 0 1 1 1-1 1 2 1-1 1-2 1 1 1 2 1-1 1 0 1-1 1 1 1 0 1 1 1-2 1 1 1 1 1-1 1-1 1 2 1-2 1 2 1-1 1 0 1 0 1 1 1-1 1 1 1-1 1 0 1 0 1 0 1 0 1 2 1 0 1-2 1-1 1 1 1 1 1-1 1 1 1-1 1 1 1 0 1 1 1-1" stroke="#fffacd" vector-effect="non-scaling-stroke"/>
<path d="M0 490l 1 1 1-1 1 0 1-1 1 1 1-1 1 0 1 1 1-1 1 1 1-2 1 2 1-1 1-1 1 1 1 0 1-1 1 2 1-2 1 2 1 0 1 1 1-2 1 0 1 0 1 0 1 1 1-1 1 1 1-2 1 3 1-1 1 0 1 0 1 1 1-1 1-1 1 0 1 1 1-2 1 2 1 1 1-1 1-1 1 0 1 1 1-3 1 2 1 0 1-1 1 1 1-2 1 0 1 0 1 0 1 1 1-2 1 0 1-1 1-1 1-1 1 0 1-1 1-1 1-1 1 0 1-2 1 0 1-1 1-2 1-1 1 0 1-1 1-1 1 1 1-2 1-1 1 1 1-1 1 0 1-1 1 1 1 0 1-1 1 2 1-2 1 0 1 0 1-1 1 2 1-3 1 1 1-5 1-2 1-1 1-1 1-3 1-3 1 0 1-2 1 0 1 0 1 1 1 2 1 0 1 1 1 1 1 0 1 3 1 1 1 4 1 1 1 0 1 4 1 1 1 3 1 3 1 2 1 1 1 0 1 2 1-2 1 0 1 0 1-1 1-3 1-3 1-3 1-4 1-2 1-3 1-3 1-2 1-2 1-2 1 1 1 0 1 1 1 0 1 2 1 2 1 1 1 4 1 2 1 4 1 0 1 2 1 4 1 3 1 1 1 1 1 0 1 2 1 0 1 3 1 1 1 1 1-1 1 1 1 1 1 1 1-1 1 0 1 0 1 1 1 2 1-2 1 0 1 1 1-1 1 1 1-2 1 3 1-2 1 2 1-1 1 0 1 1 1-1 1 1 1-2 1 1 1-1 1 3 1-2 1 1 1 0 1 0 1 1 1-2 1 1 1 1 1-3 1 2 1-1 1-1 1 2 1-1 1 2 1-1 1-1 1 1 1-1 1 1 1-1 1 1 1 0 1 0 1 0 1-1" stroke="#ffb6c1" vector-effect="non-scaling-stroke"/>
<path d="M0 488l 1 2 1 0 1 1 1-2 1 0 1 1 1-1 1 2 1-1 1 1 1-1 1 0 1-1 1 1 1 0 1 1 1-1 1 0 1 0 1-1 1 1 1 0 1 1 1-2 1 0 1 2 1-1 1 0 1 0 1 0 1-1 1 1 1 0 1 0 1 0 1 1 1 0 1-1 1-1 1 1 1 0 1 0 1 0 1-1 1 1 1-2 1 0 1 1 1-1 1 0 1 1 1-2 1 1 1-2 1 2 1-1 1 0 1-3 1 2 1-2 1 0 1-1 1-1 1-2 1 0 1 0 1-2 1 1 1-2 1-1 1 0 1-1 1-1 1-2 1 0 1 1 1-3 1 0 1-1 1 1 1 0 1-1 1 0 1 2 1 0 1 0 1-2 1 1 1 1 1-2 1-1 1-3 1-1 1-1 1-3 1 0 1-1 1-5 1 0 1 0 1-2 1 2 1-1 1 0 1 0 1 2 1 0 1 3 1 0 1 3 1 2 1 3 1 2 1 2 1 2 1 1 1 2 1 4 1 2 1 1 1-3 1 1 1 1 1-3 1-1 1-2 1-3 1-2 1-3 1-3 1-2 1-2 1-2 1-4 1-2 1 1 1-1 1 2 1 2 1 0 1 3 1 3 1 0 1 2 1 4 1 1 1 3 1 2 1 1 1 2 1 3 1 1 1 0 1 2 1 1 1 0 1 1 1 2 1 0 1 0 1-1 1 1 1 0 1 0 1 2 1-1 1 0 1 1 1-1 1-1 1 4 1-1 1-1 1-1 1 1 1-1 1 2 1 0 1 2 1-3 1 0 1 2 1-2 1 1 1-1 1 1 1 0 1-1 1 0 1 1 1-2 1 2 1-1 1 2 1-2 1 0 1 0 1-1 1 2 1 0 1 0 1 1 1-2 1-1 1 1 1-1 1 2 1-2 1 1 1 0" stroke="#800080" vector-effect="non-scaling-stroke"/>
<path d="M0 490l 1 0 1 1 1-2 1-1 1 1 1 0 1 2 1 0 1-1 1 0 1 0 1 0 1 0 1-1 1 1 1 0 1-1 1 1 1-1 1 1 1 0 1 0 1-1 1 2 1-1 1 0 1 2 1-2 1-2 1 0 1 2 1-1 1 1 1-1 1 0 1 1 1-2 1 2 1 0 1-1 1 1 1-1 1-1 1 1 1-1 1 2 1-2 1 1 1 1 1-2 1-1 1 1 1-1 1 1 1-1 1-2 1 2 1-1 1 0 1 0 1-2 1 0 1-3 1 0 1 1 1-3 1 0 1-1 1-2 1 0 1 0 1 0 1 0 1-4 1 1 1 0 1-2 1-1 1 2 1-1 1 1 1 0 1-2 1 1 1-2 1 2 1 1 1-1 1 1 1-4 1 0 1-1 1-2 1-1 1-2 1-2 1-3 1-1 1-2 1 2 1-3 1 2 1 1 1-1 1 0 1 1 1 2 1 2 1-1 1 4 1 0 1 4 1 4 1-1 1 1 1 2 1 3 1 2 1 1 1 2 1 0 1-3 1 1 1-2 1 0 1-1 1-3 1-4 1-2 1-2 1-4 1-2 1-3 1 0 1-1 1-1 1 2 1-1 1 0 1 1 1 3 1 2 1 3 1 2 1 3 1 1 1 2 1 4 1 2 1 0 1 2 1 0 1 2 1 1 1 1 1 1 1-1 1 3 1 0 1-1 1 1 1 0 1 1 1 1 1-1 1 1 1-1 1 2 1-1 1 1 1 0 1-1 1 1 1 0 1-1 1 0 1 1 1 1 1 0 1-3 1 1 1 1 1 0 1 0 1-1 1 1 1 0 1-2 1 3 1 0 1-3 1 2 1-1 1 1 1-1 1 0 1 0 1 0 1 1 1 0 1 0 1-2 1 2 1-1 1-1 1 2 1 1 1 0 1-1 1-1" stroke="#ff0000" vector-effect="non-scaling-stroke"/>
<path d="M0 490l 1-2 1 2 1 0 1 0 1 0 1-2 1 2 1 1 1-1 1 0 1-1 1 1 1-1 1-1 1 0 1 1 1 2 1-1 1 0 1 0 1 0 1 1 1-2 1 1 1-1 1 1 1 0 1-1 1 0 1 2 1 0 1-2 1 1 1 0 1 0 1 1 1-2 1 0 1 2 1-1 1-2 1 2 1 1 1-1 1-1 1 0 1-1 1 1 1 1 1-2 1 0 1 0 1 0 1-1 1 0 1 0 1 0 1-2 1 0 1 0 1 0 1-1 1 0 1-3 1 1 1-2 1-1 1-1 1 1 1-1 1-2 1 1 1-2 1-2 1 0 1-1 1 0 1 0 1-2 1 1 1 1 1-1 1 0 1 1 1 0 1 1 1-1 1-1 1 0 1-1 1-1 1-2 1-1 1 0 1-4 1-1 1-4 1 0 1-1 1-1 1 0 1 0 1 1 1 0 1 1 1 2 1-1 1 2 1 2 1 2 1 2 1 0 1 3 1 3 1 0 1 3 1 2 1 0 1 2 1 4 1-2 1 0 1 0 1 0 1-2 1-4 1-1 1-3 1-3 1-5 1-2 1-1 1-1 1-3 1 0 1-2 1 1 1 1 1 2 1 1 1 0 1 4 1 2 1 1 1 3 1 2 1 2 1 2 1 1 1 1 1 2 1 1 1 3 1-2 1 2 1 1 1 0 1 3 1-1 1 1 1-1 1 1 1 0 1 3 1-3 1 2 1-1 1-1 1 1 1 0 1 2 1-2 1 2 1-1 1 1 1 0 1 0 1 0 1 0 1 0 1 0 1 0 1 0 1-1 1 0 1 0 1 1 1 0 1-1 1 1 1 0 1-1 1 0 1 1 1 1 1-1 1-1 1 0 1-1 1 2 1 0 1-1 1 1 1 0 1 0 1-1 1 1 1 0 1-1 1 2" stroke="#6495ed" vector-effect="non-scaling-stroke"/>
<path d="M0 489l 1 0 1 1 1 0 1 1 1-1 1 1 1-2 1 1 1 0 1-1 1 1 1 0 1-1 1 1 1 0 1-1 1 0 1 1 1-1 1-1 1 1 1 0 1 1 1 0 1 0 1-2 1 1 1 2 1-1 1 0 1 1 1-2 1 0 1 0 1 0 1 2 1-2 1 1 1 0 1 0 1 0 1-1 1-1 1 3 1-2 1 0 1 0 1-1 1 0 1 0 1-1 1 1 1-1 1 2 1-1 1-2 1 0 1-2 1 1 1 0 1-1 1-1 1 0 1 0 1-1 1-1 1-2 1 0 1 1 1-2 1-3 1 0 1 0 1 1 1-3 1 0 1-1 1 0 1 0 1 1 1 0 1-2 1 2 1-1 1 2 1-2 1 0 1 1 1 0 1-1 1-2 1-3 1-1 1 1 1-3 1-2 1-2 1-3 1 0 1 0 1-1 1 1 1 0 1-1 1 3 1-1 1 2 1 0 1 2 1 1 1 3 1 1 1 2 1 1 1 3 1 3 1 2 1 2 1 1 1 2 1-2 1-2 1 1 1 0 1-1 1-3 1-1 1-4 1-3 1-4 1-1 1-2 1-2 1-1 1-2 1 2 1-2 1 1 1 2 1 1 1 1 1 2 1 0 1 4 1 2 1 2 1 3 1 1 1 1 1 1 1 4 1 1 1-1 1 1 1 3 1-2 1 2 1 1 1-1 1 1 1 2 1-1 1 1 1-2 1 2 1 1 1 0 1 1 1-1 1 0 1-1 1 1 1 1 1 1 1 0 1-2 1 0 1 0 1 1 1-1 1 1 1 0 1-1 1 0 1 0 1 0 1 1 1 0 1-1 1 2 1-1 1-1 1 1 1 0 1 1 1-1 1-1 1 1 1-1 1 0 1 2 1-1 1-1 1 0 1 1 1 0 1 0 1 1 1-2 1 0" stroke="#778899" vector-effect="non-scaling-stroke"/>
<path d="M0 491l 1-2 1 1 1-1 1 1 1 0 1-1 1 1 1 0 1 0 1-1 1 2 1-1 1-1 1 0 1-1 1 1 1 2 1-1 1 1 1-3 1 2 1-1 1-1 1 0 1 2 1 0 1-1 1-1 1 2 1-2 1 1 1 1 1 0 1 0 1-2 1 3 1-2 1 0 1 1 1-1 1 1 1-1 1 0 1 1 1-1 1 1 1 0 1-3 1 1 1 0 1 0 1 0 1 0 1 0 1-1 1 0 1-1 1-1 1 0 1-1 1 0 1-1 1 2 1-2 1-1 1-1 1 0 1-1 1-1 1-1 1 0 1-2 1-1 1 0 1 1 1-1 1-2 1 1 1-1 1-1 1 1 1 0 1-1 1 2 1-1 1-1 1-1 1 3 1-2 1-1 1-1 1-2 1 0 1-2 1-2 1-2 1-1 1-1 1-2 1 1 1-2 1 1 1 0 1 0 1 1 1 0 1 2 1 3 1-1 1 2 1 2 1 2 1 2 1 2 1 0 1 2 1 3 1 1 1 3 1 0 1 0 1-1 1 1 1-2 1-1 1-1 1-3 1-3 1-2 1-3 1-3 1-2 1-1 1-2 1-1 1-1 1 2 1-1 1 2 1-1 1 3 1 2 1 3 1 0 1 4 1 1 1 2 1 0 1 4 1 0 1 2 1 0 1 3 1 1 1 1 1 0 1 1 1-1 1 2 1-1 1 1 1 1 1 0 1 0 1 1 1 0 1-1 1 0 1 0 1 0 1 2 1-1 1-1 1 0 1 1 1 1 1-1 1 0 1 2 1-1 1-1 1 1 1-1 1 1 1 0 1-2 1 3 1-2 1 0 1 1 1 1 1 0 1-2 1 0 1 1 1-2 1 1 1 0 1 0 1 2 1-1 1-1 1 1 1-1 1 1 1-1 1 0 1 0 1 2 1 0" stroke="#a0522d" vector-effect="non-scaling-stroke"/>
<path d="M0 489l 1 0 1 0 1 0 1 0 1 2 1-2 1-1 1 1 1 2 1-2 1 1 1 1 1-1 1-1 1 2 1-2 1 1 1-1 1 2 1-1 1 0 1-1 1-1 1 2 1-1 1 1 1 0 1 0 1-1 1 1 1 0 1-1 1 0 1 2 1-1 1 1 1-1 1 0 1 0 1 0 1 0 1 1 1 0 1-3 1 1 1 0 1 1 1 0 1-2 1 2 1-1 1-1 1 1 1-3 1 1 1 1 1-1 1-1 1-1 1 0 1 0 1-2 1-2 1 1 1 0 1-3 1 1 1 0 1 0 1-1 1-1 1 0 1-2 1 0 1-1 1-2 1 0 1 1 1 0 1 0 1-2 1 1 1 1 1-1 1 2 1-1 1 0 1-2 1 1 1-1 1-1 1-1 1 0 1-4 1-1 1-2 1-2 1-2 1-1 1 1 1 0 1 0 1 0 1 1 1 0 1 1 1 0 1 2 1 2 1 0 1 3 1-1 1 3 1 3 1 1 1 1 1 3 1 3 1 2 1-1 1-2 1 1 1 0 1 1 1-4 1-1 1-2 1-3 1-2 1-4 1-2 1 0 1-3 1-1 1-1 1-1 1 1 1 1 1 2 1 1 1 1 1 1 1 1 1 3 1 4 1 0 1 2 1 2 1 2 1 0 1 2 1 1 1 1 1-1 1 2 1 1 1 0 1 1 1 0 1 2 1-1 1 2 1-1 1-1 1 3 1-2 1 1 1-1 1 1 1 2 1-3 1 1 1 1 1-1 1 2 1 0 1-3 1 1 1 1 1 0 1 1 1-2 1 1 1-1 1 1 1-2 1 0 1 0 1 2 1-1 1 0 1 0 1 1 1 1 1-2 1 1 1-1 1 1 1-1 1 0 1 0 1 0 1 1 1 0 1 0 1 0 1-1 1 1 1 0 1 1" stroke="#fa8072" vector-effect="non-scaling-stroke"/>
<path d="M0 490l 1-1 1 1 1 1 1-2 1 0 1-1 1 2 1-1 1 1 1-2 1 1 1 1 1 0 1 0 1-1 1 3 1-3 1 1 1-2 1 1 1 0 1 1 1-2 1 2 1-1 1-1 1 1 1 0 1 2 1-2 1-1 1 2 1-1 1 0 1 1 1 1 1-1 1-1 1 1 1 0 1-1 1 1 1-1 1 1 1-1 1 1 1-1 1 0 1-1 1 1 1-1 1 0 1-1 1 1 1 0 1-2 1 2 1-1 1-1 1-1 1-1 1-1 1 0 1-1 1 0 1 1 1-1 1-2 1 0 1-1 1-1 1-1 1-1 1-1 1 1 1 0 1-2 1-1 1 1 1-1 1 1 1 0 1 1 1-1 1 1 1-1 1 0 1-2 1 1 1-1 1 1 1-2 1-2 1-2 1-1 1-2 1-2 1-1 1 0 1-2 1 0 1 0 1 1 1 2 1 0 1 1 1 0 1 0 1 3 1 1 1 1 1 2 1 2 1 1 1 1 1 3 1 2 1 2 1 1 1 0 1-1 1 1 1 0 1-3 1 0 1 0 1-4 1-2 1-3 1 0 1-5 1-1 1 0 1-3 1 0 1-1 1 0 1 1 1 0 1 2 1 1 1 1 1 3 1 0 1 4 1 3 1-1 1 3 1 2 1 0 1 2 1 1 1 1 1-2 1 3 1 2 1-1 1 1 1 0 1 2 1-1 1 0 1 0 1 2 1-1 1 0 1 1 1-1 1 1 1 1 1-2 1 2 1 0 1-1 1 0 1-1 1 1 1 2 1-1 1-1 1-1 1 2 1 0 1-1 1 1 1 0 1-2 1 1 1 1 1-1 1-1 1 2 1-2 1 1 1 1 1 0 1-1 1 2 1-1 1 0 1 1 1-2 1 1 1-1 1 1 1 1 1-1 1 0 1 0 1 0" stroke="#2e8b57" vector-effect="non-scaling-stroke"/>
<path d="M0 491l 1-3 1 3 1-1 1-1 1 0 1 0 1 1 1 0 1-2 1 1 1 1 1-2 1 2 1 0 1-1 1 0 1 0 1 1 1 0 1 0 1 0 1-1 1 1 1 0 1-1 1 0 1 1 1 0 1 0 1-2 1 3 1-2 1 1 1-1 1 1 1-1 1 0 1 0 1 1 1-1 1 0 1 0 1 1 1-1 1-3 1 2 1 1 1 0 1 1 1-1 1-1 1 0 1 0 1 0 1-1 1-1 1 0 1 1 1-1 1-1 1-1 1 1 1 0 1-4 1 2 1-1 1-1 1-1 1 1 1-2 1 0 1-1 1-2 1 1 1-1 1-2 1 1 1 0 1-1 1 0 1-1 1 2 1-1 1-1 1 2 1 0 1-1 1 0 1 0 1-1 1-1 1-1 1 0 1-4 1 0 1-2 1-1 1-2 1-2 1 1 1 0 1-1 1 4 1-2 1 1 1-1 1 2 1 0 1 1 1 2 1 1 1 2 1 2 1 2 1 3 1-1 1 3 1 1 1 4 1-2 1 0 1 0 1-1 1 0 1-1 1-2 1-1 1-3 1-2 1-3 1-3 1-1 1-1 1-2 1-1 1-1 1 0 1 2 1 1 1 1 1 1 1 2 1 1 1 3 1 1 1 2 1 2 1 0 1 2 1 2 1 3 1 1 1-2 1 2 1 1 1 0 1 1 1 1 1 0 1-1 1 2 1 1 1 0 1-1 1 1 1 0 1 1 1-1 1 0 1-1 1 2 1-1 1 1 1 1 1-2 1 0 1 0 1 0 1 0 1 0 1 1 1-1 1 1 1-1 1-2 1 3 1-1 1 0 1 0 1 1 1 0 1 0 1 0 1 0 1 0 1 0 1 0 1 0 1-2 1 3 1-2 1 1 1 0 1 0 1-1 1 0 1 0 1 2 1-1 1-1" stroke="#ffffff" vector-effect="non-scaling-stroke"/>
<path d="M0 488l 1 1 1 0 1-1 1 2 1 0 1 0 1-1 1 1 1-1 1 1 1-1 1 0 1 0 1 0 1 1 1-1 1 1 1-2 1 2 1-1 1 1 1 0 1-1 1 1 1-2 1 0 1 1 1 0 1 1 1 0 1 0 1 0 1 0 1 0 1 2 1-1 1-1 1-1 1 0 1 0 1 0 1 2 1-2 1 0 1-1 1 0 1 1 1 0 1 0 1 0 1-1 1 0 1 1 1-1 1-1 1 0 1-1 1 2 1-2 1 1 1-2 1 0 1-2 1-1 1 2 1-2 1 0 1-2 1 1 1-1 1-1 1-1 1-1 1 0 1 0 1 0 1-2 1 0 1-1 1 2 1 0 1-2 1 1 1 0 1 0 1-1 1 0 1 0 1 0 1 0 1-1 1-2 1-1 1-2 1-2 1 1 1-2 1-2 1-1 1 0 1 0 1 0 1 1 1 1 1-2 1 1 1 1 1 3 1 0 1 0 1 3 1 0 1 3 1 0 1 2 1 3 1 1 1 2 1 0 1 1 1 0 1-1 1 2 1-2 1 0 1-2 1-4 1-1 1-1 1-3 1-3 1-1 1-1 1-3 1 0 1 0 1-1 1 2 1 1 1 1 1 1 1 2 1 1 1 2 1 2 1 0 1 3 1 1 1 2 1 2 1 1 1-2 1 3 1 0 1 2 1 1 1 1 1 0 1-1 1 2 1 0 1 0 1 1 1-2 1 1 1 2 1-1 1 0 1 0 1 0 1 1 1 0 1-1 1 0 1 0 1 0 1 1 1-1 1 1 1 0 1-1 1 0 1 1 1 0 1-1 1 1 1-2 1 1 1 0 1 0 1 1 1 0 1-1 1 0 1 2 1-1 1-1 1 1 1 0 1-1 1 1 1-1 1 0 1 0 1 0 1 0 1 1 1 0 1-1 1 0" stroke="#d2b48c" vector-effect="non-scaling-stroke"/>
<path d="M0 490l 1 0 1-1 1 0 1 1 1 0 1 1 1-2 1 1 1 0 1 0 1 1 1-1 1 1 1-1 1 0 1-1 1 1 1-1 1 1 1-1 1 1 1-1 1-1 1 2 1-1 1 1 1-1 1 0 1 1 1-1 1 0 1 1 1-1 1 0 1 1 1 0 1 0 1-1 1 2 1-1 1 0 1-2 1 1 1 1 1 0 1-1 1 0 1 1 1-3 1 2 1-1 1 0 1 2 1-3 1 0 1 1 1-2 1 0 1 0 1-1 1 1 1-1 1-2 1 0 1 1 1-2 1-1 1 1 1-1 1-2 1 0 1-2 1 0 1 0 1-1 1 1 1 0 1-1 1 0 1-1 1 1 1-1 1 1 1 0 1 1 1-1 1 1 1-2 1 1 1-1 1 0 1-2 1-1 1-2 1-2 1-1 1-2 1-1 1 0 1-3 1 1 1 2 1-1 1 0 1 0 1 2 1 0 1 2 1 1 1-1 1 4 1 0 1 2 1 2 1 1 1 2 1 1 1 2 1 2 1 0 1 0 1 1 1-3 1 0 1-1 1-1 1-3 1 0 1-4 1-2 1-1 1-1 1-3 1-2 1 0 1 0 1 0 1 1 1 1 1 0 1 1 1 1 1 3 1 1 1 3 1 1 1 1 1 2 1 3 1 0 1 0 1 3 1-2 1 2 1 0 1 1 1 0 1 3 1-1 1 1 1-2 1 2 1 0 1 2 1-1 1 0 1 1 1-2 1 1 1 0 1 1 1-1 1 2 1-2 1 0 1 1 1-1 1 1 1 0 1-1 1 0 1 2 1-2 1 1 1-1 1 1 1 0 1-1 1 1 1 0 1 0 1-1 1 2 1-1 1 0 1-1 1 0 1 0 1 1 1 1 1-1 1-1 1 1 1 0 1-2 1 2 1-1 1 1 1-1 1 0" stroke="#b0c4de" vector-effect="non-scaling-stroke"/>
<path d="M0 489l 1 1 1-1 1-1 1 1 1 2 1-2 1 0 1 1 1-1 1 0 1-1 1 1 1 2 1 0 1-2 1 1 1 2 1-2 1 0 1 0 1 1 1 0 1-1 1-2 1 2 1-1 1 1 1 0 1-2 1 1 1 1 1 0 1 1 1 0 1-2 1 1 1 0 1-1 1 0 1 1 1 0 1-1 1 0 1 1 1-2 1 1 1-1 1 1 1 0 1-2 1 1 1 1 1-2 1 1 1-2 1 1 1-2 1 1 1 0 1 0 1-1 1-1 1-1 1 1 1-1 1 0 1-2 1-1 1 1 1 0 1-3 1 1 1 0 1-1 1 0 1-1 1-1 1 1 1-1 1 0 1-2 1 1 1 1 1 1 1-2 1 0 1 0 1 1 1 0 1 0 1-2 1 0 1-2 1-3 1 1 1-2 1 0 1-3 1-1 1 0 1 0 1-1 1 2 1 0 1-1 1 1 1 0 1 3 1 1 1 0 1 2 1 0 1 2 1 2 1 1 1 1 1 3 1 2 1 1 1 0 1-1 1 2 1-2 1 0 1-1 1-2 1-3 1 0 1-4 1-2 1 0 1-2 1-2 1-1 1-1 1 0 1-1 1 1 1 2 1 1 1 0 1 2 1 2 1 3 1-1 1 3 1 1 1 2 1 2 1-1 1 3 1 1 1 0 1 2 1-1 1 2 1-1 1 1 1 0 1 0 1 1 1 1 1-1 1-1 1 1 1 0 1 1 1-1 1 1 1 0 1 1 1-2 1 1 1-1 1 1 1 0 1 1 1 0 1 0 1 0 1-1 1 2 1-2 1 0 1 1 1 0 1-1 1 0 1 0 1 0 1 1 1 0 1 0 1-1 1 1 1-2 1 0 1 2 1 0 1-3 1 1 1 2 1 0 1-1 1 1 1 1 1-2 1 0 1 2 1 0" stroke="#9370db" vector-effect="non-scaling-stroke"/>
<path d="M0 489l 1-1 1 2 1 0 1-2 1 2 1 0 1 0 1 0 1 0 1 0 1-1 1 3 1-1 1-2 1 1 1 0 1 0 1-2 1 1 1 2 1-2 1 2 1-1 1 0 1 0 1 0 1-1 1 0 1 1 1-1 1 1 1 1 1-1 1 1 1-2 1 1 1 0 1-2 1 2 1-1 1 0 1 1 1-2 1 3 1-1 1-2 1 2 1-1 1-1 1 2 1-1 1 1 1-2 1 0 1 0 1-1 1 0 1-1 1 1 1-1 1 0 1-1 1-2 1 2 1-1 1-2 1 0 1 1 1-3 1 1 1-2 1 1 1-1 1 0 1-1 1-1 1 0 1-2 1 2 1 1 1 0 1-2 1-1 1 3 1-2 1 1 1 1 1-3 1 1 1 0 1-1 1-1 1-1 1-1 1-2 1 0 1-3 1-2 1 0 1 1 1-1 1 1 1-1 1 0 1 0 1 2 1 1 1-2 1 3 1 1 1 0 1 3 1 1 1 3 1 0 1 0 1 3 1 2 1 2 1 0 1-1 1 0 1 1 1-2 1 0 1-1 1-4 1-2 1-2 1 0 1-4 1 0 1-2 1-2 1-1 1 0 1 0 1 2 1 2 1-1 1 0 1 3 1 2 1-1 1 5 1 0 1 1 1 3 1 0 1 2 1 1 1 1 1-1 1 2 1 1 1 0 1 1 1 0 1-1 1 2 1 0 1-1 1 1 1 1 1 0 1-2 1 2 1 1 1-1 1 1 1-2 1 2 1-1 1 0 1 0 1 1 1 0 1 0 1-1 1 0 1 2 1-2 1 1 1-1 1 0 1 0 1 1 1-1 1 0 1 0 1 1 1-1 1 1 1-1 1 1 1 0 1 1 1-1 1 0 1-1 1 0 1 0 1 1 1 0 1 0 1-1 1 1 1 0 1-1 1 0" stroke="#00ff7f" vector-effect="non-scaling-stroke"/>
<path d="M0 490l 1 1 1-3 1 0 1 2 1-1 1 0 1 0 1 1 1 0 1-1 1 1 1 0 1-1 1 0 1 1 1 1 1 0 1-2 1 1 1-2 1 1 1 0 1-1 1 2 1-2 1 2 1 0 1 0 1-1 1 0 1 1 1 0 1-1 1 1 1-1 1 0 1 0 1 1 1 0 1 0 1 0 1 0 1 0 1-1 1 0 1 0 1 0 1 1 1-2 1 1 1-1 1 1 1 0 1 0 1 0 1-2 1 0 1-1 1 0 1-1 1 0 1 1 1-2 1 2 1-3 1 0 1-1 1 0 1 0 1-2 1 0 1 0 1-2 1 2 1-1 1-2 1 1 1 0 1-1 1 1 1-1 1 0 1-1 1 0 1 1 1 0 1 0 1-1 1 0 1 1 1-2 1-1 1 0 1-3 1-1 1 1 1-3 1-2 1 0 1 0 1 0 1-1 1 2 1 1 1-1 1 1 1-1 1 2 1 1 1 1 1 1 1 2 1-1 1 3 1 1 1 2 1 1 1 1 1 1 1 2 1-1 1 0 1 0 1-2 1 1 1-2 1-2 1-1 1-1 1-4 1-3 1 0 1-2 1 0 1 0 1-1 1 0 1 1 1 0 1 1 1 1 1 2 1 1 1 1 1 3 1 1 1 2 1 2 1 1 1 0 1 1 1 1 1 0 1 3 1 0 1-1 1 2 1-1 1 2 1-1 1-1 1 1 1 1 1-1 1 0 1-1 1 2 1 1 1 0 1-1 1-1 1 1 1-1 1 0 1 2 1 0 1-1 1 1 1-1 1 0 1 0 1 1 1-1 1 1 1-1 1-1 1 2 1-1 1 2 1-1 1 0 1 0 1 0 1 0 1-2 1 2 1-1 1 1 1-1 1-1 1 2 1-1 1-1 1 2 1-1 1 1 1 2 1-3 1 0 1 2" stroke="#008080" vector-effect="non-scaling-stroke"/>
<path d="M0 490l 1-1 1 1 1 0 1-1 1 0 1 1 1 1 1 0 1-2 1 1 1-1 1 1 1 0 1 0 1 0 1 0 1 0 1-1 1 1 1-2 1 2 1-1 1 0 1 1 1-1 1 0 1 0 1 1 1 0 1 0 1-1 1 2 1-2 1 0 1 0 1 2 1-2 1 1 1 0 1-1 1 1 1 0 1-1 1 0 1 1 1 1 1-4 1 2 1 1 1-1 1-1 1 1 1 0 1-1 1 0 1 0 1-1 1 1 1-2 1 1 1-3 1 2 1-1 1-1 1 0 1-1 1 1 1 0 1-2 1 0 1-2 1 0 1-1 1 1 1-1 1-1 1 2 1-3 1 0 1 0 1 2 1-1 1-1 1-1 1 3 1-2 1 1 1-1 1-2 1 1 1-1 1 0 1-2 1-1 1 1 1-2 1-2 1-1 1-2 1 0 1 0 1 0 1 0 1 2 1 0 1 1 1-1 1 3 1 0 1 1 1 1 1 1 1 0 1 2 1 1 1 3 1 3 1-1 1 3 1-1 1 0 1 1 1-2 1-1 1 0 1-2 1-1 1-2 1-2 1-2 1-2 1-1 1-1 1-1 1-2 1 1 1-1 1 1 1 3 1-2 1 1 1 2 1 2 1 0 1 3 1 3 1-1 1 0 1 4 1 1 1 0 1 2 1 0 1 0 1 1 1 0 1 1 1 0 1 1 1 0 1 0 1 0 1 0 1 3 1-2 1 0 1-1 1 1 1 0 1 0 1 1 1-1 1 0 1 1 1-1 1 1 1 1 1-1 1-1 1 1 1-1 1 1 1-1 1 0 1 1 1-1 1 0 1 1 1 0 1 0 1 0 1-2 1 1 1 1 1 0 1 0 1 0 1-1 1 1 1 1 1 0 1-1 1-1 1 0 1 1 1-2 1 2 1-1 1 0 1 1" stroke="#00ffff" vector-effect="non-scaling-stroke"/>
<path d="M0 490l 1-1 1 0 1 2 1-2 1 1 1 0 1 1 1-2 1 1 1 0 1 0 1 0 1-1 1 2 1 0 1-2 1-1 1 1 1 1 1 0 1-1 1 0 1 0 1 0 1 1 1 0 1 1 1-1 1-1 1 2 1-2 1 0 1 1 1 0 1 0 1-2 1 3 1-3 1 2 1 1 1-2 1 1 1 1 1-2 1 0 1 0 1 0 1 1 1-1 1-1 1 1 1 0 1-1 1 0 1 1 1-1 1-1 1 0 1 1 1-2 1 0 1-1 1 0 1-1 1 1 1-1 1-1 1 0 1 0 1-1 1-1 1-2 1 2 1-1 1-1 1-1 1 0 1 2 1-2 1-1 1 1 1-1 1 2 1-1 1 0 1 1 1-2 1 1 1-1 1 0 1 0 1 0 1-3 1-1 1-1 1 0 1-3 1-2 1 0 1-1 1 4 1-2 1 0 1 1 1 0 1-1 1 1 1 1 1 2 1 0 1 2 1 1 1 1 1 1 1 1 1 2 1 1 1 2 1 0 1 0 1 1 1 1 1-2 1 1 1 0 1-2 1-3 1-3 1-1 1 0 1-3 1 0 1-1 1-1 1-2 1-1 1 0 1 1 1 0 1 2 1 0 1 1 1 3 1 2 1 1 1 1 1 2 1 0 1 2 1 0 1 2 1 0 1 0 1 1 1 0 1 0 1 2 1 1 1-1 1 2 1-1 1 0 1 0 1 0 1 0 1 0 1 2 1 0 1 0 1-2 1 1 1 0 1 1 1-1 1 1 1 1 1-2 1 0 1-1 1 1 1 0 1 2 1-3 1 2 1-2 1 3 1-1 1-1 1 1 1 0 1-1 1 1 1-1 1 1 1-1 1 2 1-1 1-2 1 3 1-1 1-2 1 0 1 2 1 0 1 0 1-2 1 2 1 0 1-1 1 0" stroke="#ff00ff" vector-effect="non-scaling-stroke"/>
<path d="M0 489l 1 0 1 0 1 0 1 1 1 0 1 0 1-1 1 1 1 0 1 0 1-1 1 1 1-1 1 1 1-2 1 1 1 2 1-1 1 0 1-1 1 1 1-1 1 1 1-1 1 0 1 0 1 1 1-1 1 1 1-1 1 0 1 1 1-1 1 1 1-1 1 0 1 0 1 0 1 0 1 0 1 1 1-1 1 0 1 2 1-1 1-1 1-1 1 2 1-1 1 1 1-1 1-1 1 0 1 0 1 1 1-3 1 2 1-2 1 0 1 1 1-1 1 1 1-1 1-1 1 0 1-1 1 1 1-4 1 3 1-2 1-1 1 0 1 0 1-1 1-1 1-1 1 2 1 0 1-2 1-1 1 0 1 1 1 1 1 0 1 0 1-1 1 1 1-1 1-1 1 2 1-3 1 1 1-2 1 0 1-3 1 0 1-1 1-2 1-1 1 0 1-1 1 1 1 1 1 0 1-1 1 2 1 0 1 2 1 0 1 0 1 3 1 0 1 0 1 2 1 3 1 0 1-1 1 5 1 0 1-1 1 1 1 0 1 1 1-1 1-2 1 0 1-3 1-1 1-1 1-3 1-2 1 0 1-2 1-1 1-1 1 0 1 0 1 1 1 0 1 1 1 2 1 0 1 3 1 1 1 1 1 1 1 1 1 2 1 0 1 1 1 2 1 0 1 2 1-1 1 0 1 2 1 0 1 0 1 1 1 0 1-1 1 3 1-3 1 1 1 2 1-2 1 1 1 0 1-1 1 1 1 1 1-1 1 1 1 1 1-1 1 0 1 0 1 1 1-2 1 0 1 1 1 0 1 0 1-1 1 1 1-1 1 1 1-1 1 0 1 0 1 1 1 0 1 0 1 0 1-1 1 0 1-1 1 1 1 0 1 0 1 1 1 0 1 0 1-1 1 1 1 2 1-3 1 0 1 1 1 1" stroke="#ffff00" vector-effect="non-scaling-stroke"/>
<path d="M0 490l 1 0 1 0 1 0 1-1 1 1 1 0 1 0 1 1 1-2 1 0 1 1 1 0 1-1 1 2 1-1 1 0 1 0 1 0 1-1 1 0 1 0 1 1 1 0 1 0 1 0 1-1 1 2 1-1 1-1 1 1 1 0 1 0 1 0 1-1 1 0 1 1 1-1 1 1 1-1 1 1 1-1 1 2 1-3 1 2 1 0 1 0 1 0 1-2 1 2 1-2 1 1 1 0 1-2 1 0 1 0 1 1 1 0 1 0 1 1 1-3 1 0 1 0 1 0 1-2 1 0 1 0 1 1 1-3 1 1 1 0 1-1 1-2 1 2 1-2 1 0 1 0 1 0 1 0 1-1 1 0 1 0 1 0 1 0 1 0 1 0 1 0 1 0 1 0 1-1 1 1 1-2 1-1 1-1 1-1 1-1 1-1 1 0 1-2 1-1 1 1 1-1 1 0 1-2 1 2 1 1 1 0 1 0 1 3 1-1 1 2 1 0 1 1 1 3 1 0 1 0 1 2 1 1 1 2 1 1 1 0 1 0 1 0 1 1 1-2 1-1 1 0 1-2 1-1 1-3 1-2 1-1 1-1 1-1 1 1 1-3 1 1 1-1 1 1 1 1 1 0 1 2 1 1 1 0 1 2 1 1 1 2 1 1 1 1 1 0 1 1 1 1 1 1 1 1 1 1 1 0 1 0 1 0 1 3 1 0 1-1 1-1 1 3 1-1 1-1 1-2 1 2 1 0 1 2 1-2 1 1 1 1 1 0 1 0 1-1 1 0 1-2 1 2 1 0 1 2 1-1 1-1 1 0 1-1 1 1 1 1 1-1 1 1 1-2 1 1 1 1 1 0 1-1 1 1 1 0 1-1 1 1 1 1 1-2 1 1 1 0 1 0 1-1 1 0 1 0 1 0 1 0 1 1 1-1 1 0 1 0" stroke="#00ff00" vector-effect="non-scaling-stroke"/>
<path d="M0 490l 1 0 1 0 1-1 1 0 1 1 1 0 1-1 1 1 1-1 1 0 1 1 1 0 1 0 1-2 1 1 1 0 1 0 1 1 1 0 1-1 1 0 1 1 1 0 1 0 1 0 1-1 1 1 1 0 1 1 1-2 1 1 1 0 1 1 1-1 1-2 1 2 1-1 1 1 1 1 1-1 1 0 1-2 1 3 1-2 1 1 1 0 1 0 1-1 1 0 1-1 1 1 1-1 1 0 1 0 1-1 1 1 1 0 1-2 1-1 1 2 1 0 1-2 1 1 1-2 1 2 1-1 1-1 1-1 1 0 1-2 1 0 1 0 1 0 1-1 1 1 1 0 1-1 1 0 1-2 1 2 1-2 1 1 1-1 1 0 1 2 1-1 1 1 1-1 1 0 1-1 1 0 1-2 1 2 1-3 1-1 1-1 1-1 1-1 1 0 1-1 1 0 1 1 1-2 1 3 1-1 1 0 1 1 1 1 1 1 1 1 1 1 1 0 1 1 1 1 1 1 1 2 1 1 1 0 1 4 1-2 1 0 1 1 1-1 1-1 1 0 1-2 1-1 1-2 1-1 1-3 1 0 1-2 1-1 1-1 1 0 1 0 1 0 1 2 1 0 1 0 1 1 1 1 1 2 1 0 1 2 1 1 1 2 1 0 1 1 1 0 1 2 1 2 1 0 1-1 1 2 1-1 1 1 1 0 1 1 1-1 1 1 1 3 1-2 1-1 1 1 1-1 1 1 1 0 1 0 1 0 1 0 1-1 1 0 1 2 1-2 1 1 1 1 1 0 1-2 1 2 1 1 1-1 1 1 1-3 1 0 1 1 1 2 1-2 1 0 1 0 1 0 1 2 1-2 1 0 1 0 1 0 1 1 1-1 1 1 1-2 1 2 1 0 1 0 1-1 1 1 1 1 1-1 1-1 1 1 1-1" stroke="#0000ff" vector-effect="non-scaling-stroke"/>
<path d="M0 489l 1-1 1 2 1 1 1-1 1 0 1-1 1 1 1-2 1 1 1 1 1 1 1-2 1-1 1 1 1-1 1 2 1 1 1-2 1 2 1 0 1-2 1-1 1 1 1 0 1 1 1-2 1 1 1 1 1 0 1-1 1 2 1-2 1 2 1-1 1 0 1 0 1 0 1 0 1-1 1 1 1-1 1 0 1 1 1-1 1 0 1 2 1-1 1 0 1-1 1 0 1 1 1-3 1 2 1-1 1 0 1 1 1-1 1-1 1 0 1 1 1-1 1-2 1 1 1 1 1-2 1 1 1-1 1-2 1 0 1 0 1-1 1-1 1 2 1-2 1-1 1 1 1-1 1-1 1 1 1-1 1 0 1 2 1-2 1 1 1-1 1 1 1 1 1-2 1 1 1-1 1 1 1-2 1-1 1-1 1-2 1 0 1-1 1-1 1-1 1 0 1 0 1 0 1 1 1-1 1 1 1 1 1 1 1 0 1 1 1 1 1 0 1 0 1 1 1 3 1 0 1 1 1 3 1-1 1 1 1 1 1-1 1 1 1-1 1 0 1 0 1-2 1-2 1-1 1-1 1-1 1-3 1-1 1 0 1 0 1-1 1-1 1-1 1 3 1-1 1 1 1 0 1 1 1 2 1 1 1 1 1 2 1 0 1 1 1 2 1-1 1 3 1 1 1-1 1 2 1 0 1-1 1 1 1 1 1 0 1 1 1-1 1 0 1 2 1 0 1-1 1-1 1 1 1 0 1 0 1 1 1-2 1 2 1 2 1-3 1 0 1 1 1 0 1 1 1-2 1 0 1 1 1-2 1 2 1 0 1 0 1-1 1 1 1 0 1-2 1 1 1-1 1 2 1 1 1-1 1 1 1-1 1 0 1 0 1 0 1-1 1 1 1-1 1-1 1 1 1 1 1-1 1 0 1 0 1 0 1 0" stroke="#dc143c" vector-effect="non-scaling-stroke"/>
<path d="M0 489l 1 1 1-1 1 1 1-2 1 2 1 0 1-1 1 0 1 0 1 1 1 0 1-1 1 0 1 0 1 2 1 0 1-2 1 0 1 2 1-1 1 0 1-1 1 1 1 0 1-1 1 2 1-2 1 1 1 1 1 0 1-2 1 0 1 1 1-1 1 0 1 0 1 0 1 0 1 1 1-1 1 1 1 0 1-1 1 1 1-2 1 1 1 1 1-1 1 0 1 0 1 0 1-1 1 2 1-1 1 0 1-1 1 0 1-1 1 1 1 0 1-1 1-1 1 0 1 0 1-2 1 2 1-2 1 0 1-1 1 0 1 1 1-2 1-1 1 1 1 0 1-1 1 0 1-1 1-1 1 1 1 0 1 1 1 0 1-2 1 2 1 0 1 0 1-2 1 1 1 0 1-2 1-1 1 0 1-1 1 0 1 0 1-3 1 0 1 0 1-2 1 1 1 0 1 1 1 0 1-1 1 1 1 1 1 0 1 2 1 1 1-1 1 1 1 3 1-1 1 3 1 0 1 0 1 3 1-1 1 1 1 0 1-2 1 0 1 1 1 0 1-2 1-1 1 0 1-3 1-1 1-1 1-2 1 0 1-1 1 0 1-1 1 0 1-1 1 2 1 0 1 2 1 0 1 0 1 2 1 2 1 1 1 0 1 3 1 0 1 1 1 1 1 0 1 0 1 2 1-1 1 1 1 0 1 1 1-2 1 2 1 0 1 1 1-1 1 2 1 0 1-1 1 0 1 0 1 0 1 0 1 1 1 0 1-2 1 1 1 1 1 0 1-1 1 0 1 0 1 0 1 1 1 0 1 0 1-2 1 2 1 0 1-1 1 0 1 0 1 0 1 1 1 0 1 1 1-1 1-1 1 0 1-1 1 2 1-2 1 2 1 0 1 0 1 0 1-2 1 1 1 1 1-1 1-1 1 1 1 0" stroke="#20b2aa" vector-effect="non-scaling-stroke"/>
<path d="M0 491l 1-1 1-1 1 0 1 0 1-1 1 3 1 0 1 0 1-2 1 0 1 0 1 0 1 1 1-1 1 0 1 1 1 0 1-1 1 0 1 1 1 0 1 0 1-1 1 1 1-2 1 1 1 0 1 1 1-2 1 2 1-1 1 0 1 1 1 0 1 0 1-1 1 2 1-2 1 1 1-1 1 1 1-1 1 2 1-1 1-1 1 0 1-2 1 3 1-1 1 0 1 0 1 1 1-2 1 0 1-1 1 1 1 1 1-1 1 0 1-2 1 1 1-1 1-1 1 1 1 0 1 0 1-2 1 0 1 0 1 1 1-3 1 1 1 0 1-1 1 1 1-3 1 1 1 2 1-4 1 2 1-1 1 1 1 0 1 1 1-1 1 0 1-1 1 1 1 0 1-2 1 0 1 0 1-2 1 0 1-1 1-1 1-2 1 0 1 0 1-2 1 1 1 0 1 1 1 0 1 0 1 0 1 1 1 1 1 1 1 1 1 0 1 1 1 1 1 1 1 1 1 1 1 1 1 0 1 3 1 0 1-1 1-1 1 2 1-1 1-1 1-1 1-2 1 0 1-1 1-3 1-1 1-2 1-1 1 0 1 0 1 0 1 0 1-1 1 1 1 1 1 2 1 0 1 2 1-2 1 3 1 0 1 2 1 1 1 2 1-1 1 1 1 1 1 2 1 0 1 1 1 0 1 0 1 0 1 1 1-1 1 1 1-1 1 2 1-1 1-1 1 0 1 2 1-1 1 0 1 0 1 0 1 1 1-1 1 0 1 2 1-1 1-1 1 2 1-1 1-1 1 0 1 2 1-1 1-3 1 3 1-1 1 1 1 0 1-1 1 0 1 0 1 1 1 0 1-1 1-1 1 0 1 1 1 0 1 0 1 1 1 0 1-1 1 1 1 0 1 0 1-1 1 0 1 0 1 0 1 0" stroke="#4682b4" vector-effect="non-scaling-stroke"/>
<path d="M0 490l 1 0 1-1 1 2 1-2 1 1 1 1 1-2 1 2 1-2 1 1 1-2 1 2 1-1 1 1 1-1 1 0 1 0 1 0 1 1 1 0 1 0 1 0 1 0 1-1 1 1 1 0 1 0 1 0 1 0 1 0 1 0 1 1 1 0 1-1 1-2 1 2 1-1 1 0 1 1 1-1 1 0 1 0 1-1 1 1 1 0 1 0 1-1 1 2 1-1 1 2 1-2 1 1 1-2 1 0 1 0 1 1 1 0 1-2 1 0 1 1 1-1 1-2 1 1 1 1 1 0 1-2 1 1 1-1 1 0 1-1 1-1 1 0 1 0 1-1 1 0 1 0 1-1 1 0 1 0 1 1 1-2 1 2 1-1 1 0 1-1 1 3 1-2 1 0 1 0 1 1 1-2 1-1 1-1 1 0 1-3 1 1 1-2 1 0 1-1 1 2 1-2 1 1 1-1 1 1 1-1 1 1 1 0 1 2 1 0 1 1 1 1 1 0 1 1 1 2 1 1 1 1 1-1 1 4 1-1 1 0 1-1 1 1 1 1 1-2 1 1 1-2 1-1 1-1 1-2 1-2 1-1 1 0 1-1 1-2 1 0 1 0 1-1 1 2 1 0 1 2 1-1 1 1 1 2 1 1 1 1 1 0 1 3 1 1 1 0 1 1 1 0 1 0 1 1 1 1 1 1 1-1 1 1 1 0 1-1 1 1 1 1 1-1 1 2 1-1 1 0 1 0 1 1 1-1 1 0 1 1 1-1 1-1 1 1 1 0 1 0 1 1 1 0 1-1 1 1 1 1 1-2 1 0 1 1 1-2 1 2 1 0 1 1 1-1 1-1 1 0 1 0 1 1 1 1 1-2 1 1 1-1 1 0 1 1 1-2 1 2 1 0 1-1 1 0 1 1 1-2 1 2 1-1 1-1 1 0 1 1" stroke="#7b68ee" vector-effect="non-scaling-stroke"/>
<path d="M0 490l 1-1 1 0 1 2 1-2 1 1 1 0 1 0 1 1 1-2 1 0 1 1 1 0 1-1 1 0 1 1 1-1 1 1 1 0 1 0 1-1 1 0 1 0 1 2 1-2 1 1 1 0 1-1 1 0 1-1 1 1 1 0 1 1 1 0 1-1 1 2 1-1 1 1 1-3 1 3 1-2 1 1 1 0 1-1 1 1 1 0 1 0 1 0 1 0 1-2 1 1 1-2 1 2 1 0 1-2 1 0 1 1 1 1 1-2 1 0 1 1 1-1 1-1 1 0 1 0 1 1 1 0 1-2 1-1 1 1 1-1 1-1 1 0 1-1 1 1 1-1 1 0 1-1 1 1 1-1 1 0 1 0 1 1 1 0 1 0 1-1 1 0 1 2 1 0 1-2 1 1 1-2 1-1 1-1 1 0 1-2 1 0 1 0 1 0 1-1 1-2 1 2 1-3 1 2 1 1 1 1 1-2 1 1 1 2 1 1 1-1 1 0 1 2 1 2 1 0 1 0 1 0 1 2 1 1 1 2 1 0 1-1 1 0 1 0 1 0 1-2 1 0 1-1 1-1 1-2 1-1 1 0 1-1 1-1 1-2 1 1 1-2 1 2 1-1 1 1 1 2 1 0 1 1 1 2 1-1 1 2 1 0 1 0 1 2 1 1 1 0 1 1 1 0 1 0 1 1 1 1 1 0 1 1 1 1 1 0 1-1 1 1 1 0 1 0 1 1 1-1 1 0 1 1 1-1 1 1 1 0 1-1 1 1 1-1 1 0 1-1 1 1 1 1 1 0 1 0 1 1 1-1 1 0 1 0 1-1 1 0 1 1 1-1 1 1 1 0 1-1 1 0 1 0 1 1 1-1 1 1 1-1 1 0 1 0 1 1 1 0 1-2 1 2 1 0 1 0 1-1 1 1 1 1 1-1 1-1 1-1" stroke="#ee82ee" vector-effect="non-scaling-stroke"/>
<path d="M0 489l 1 0 1 1 1 0 1 0 1 0 1-1 1 0 1 0 1 0 1 0 1 1 1-1 1 0 1 0 1 0 1 1 1-1 1 0 1 0 1 0 1 0 1 1 1-1 1 0 1 0 1 1 1 0 1 0 1-1 1 1 1-2 1 2 1-1 1-1 1 2 1 0 1-1 1 1 1 0 1-1 1 0 1 1 1-1 1 1 1 0 1 1 1-1 1-1 1 0 1 0 1 0 1 0 1 0 1 1 1-1 1-1 1 1 1-1 1 0 1-1 1 0 1 0 1 0 1-1 1-1 1 0 1 1 1 0 1-2 1-1 1 1 1-2 1 2 1-1 1 0 1-1 1 1 1-2 1 1 1 0 1-1 1 0 1 2 1-1 1 0 1 1 1-1 1 0 1 0 1-1 1-1 1 0 1 0 1 0 1-3 1 0 1-2 1 1 1-1 1-1 1 1 1-1 1 1 1 0 1 1 1-2 1 2 1 0 1 1 1 2 1-1 1 1 1 2 1 1 1-1 1 2 1 1 1 2 1-1 1 2 1 0 1-3 1 2 1 0 1-2 1-1 1 1 1-2 1 0 1-4 1-1 1 1 1-2 1-1 1 0 1 1 1-1 1 0 1-1 1 1 1 2 1 1 1 0 1 1 1 2 1 2 1 0 1 1 1 1 1 0 1 1 1 1 1-1 1 1 1 0 1 1 1-1 1 0 1 2 1-1 1 0 1 2 1-1 1 0 1 1 1-1 1 1 1-1 1 0 1-2 1 2 1 0 1 2 1 0 1-1 1-1 1 1 1-1 1 1 1 0 1-1 1 0 1 1 1 1 1-1 1-1 1 0 1 0 1 1 1-1 1 0 1-1 1 2 1 0 1 0 1-1 1 0 1 0 1 1 1 1 1-2 1 1 1 0 1 0 1-2 1 2 1 0 1 1 1-3 1 2" stroke="#ffa07a" vector-effect="non-scaling-stroke"/>
<path d="M0 488l 1 1 1 0 1 1 1 0 1 0 1 0 1-1 1 1 1 0 1-1 1 0 1 1 1-1 1 2 1-3 1 1 1 0 1 0 1 0 1 0 1 0 1 0 1 0 1 0 1 0 1 0 1 0 1 1 1 0 1 0 1-1 1 1 1-2 1 1 1 1 1 0 1 0 1 0 1-1 1 2 1-1 1 0 1 1 1-2 1 0 1 0 1 0 1 1 1-1 1 1 1 0 1-1 1 0 1-1 1 1 1-1 1 0 1 0 1 0 1-1 1 0 1 0 1 1 1-1 1 0 1-1 1-1 1 0 1 0 1 0 1 0 1 0 1-1 1-2 1 1 1-1 1 1 1-1 1 0 1 0 1 0 1 0 1 0 1-1 1 1 1 0 1 1 1-1 1 1 1-1 1 0 1-1 1-1 1-1 1 0 1-2 1 0 1-1 1-1 1 0 1 0 1 1 1 0 1-1 1 2 1-1 1 0 1 2 1 0 1 0 1 1 1 1 1 0 1 3 1-1 1 2 1 1 1 0 1-1 1 2 1 0 1 0 1 1 1-3 1 1 1-1 1-1 1-2 1 0 1-2 1-2 1 1 1-3 1 1 1-2 1 2 1-1 1 1 1 0 1 2 1 0 1-1 1 2 1 0 1 2 1 2 1 0 1 1 1 1 1 0 1 0 1 1 1 0 1 0 1 1 1 0 1 1 1-1 1 2 1 0 1-2 1 2 1 0 1-1 1 0 1 0 1 2 1-1 1 0 1 0 1 2 1-2 1 0 1 1 1-2 1 1 1 1 1 0 1-1 1 1 1-1 1 1 1-1 1 1 1 0 1 0 1 0 1 0 1 0 1-1 1 1 1-1 1 1 1 1 1-1 1 0 1 0 1-1 1 0 1 1 1-1 1 1 1-1 1 1 1 0 1 0 1-1 1 1 1-1 1 1" stroke="#808000" vector-effect="non-scaling-stroke"/>
<path d="M0 490l 1 0 1-1 1 0 1 1 1 0 1 0 1-2 1 3 1-1 1-1 1 0 1 0 1 1 1-2 1 2 1-2 1 3 1-1 1-1 1 0 1 0 1 1 1-1 1 1 1 0 1 0 1-1 1-1 1 0 1 1 1 1 1-1 1 2 1-1 1 0 1-1 1 0 1 0 1 1 1-1 1-1 1 1 1 1 1 0 1 0 1-1 1 0 1 1 1-2 1 1 1-1 1 0 1 0 1 1 1-1 1 2 1-1 1 0 1-3 1 2 1 0 1-2 1 2 1-2 1 0 1 0 1 0 1 0 1 0 1-2 1 0 1-1 1 1 1-1 1 0 1 1 1-1 1-1 1 0 1 0 1 0 1 0 1 1 1 0 1 0 1 0 1 1 1-2 1 1 1-2 1 2 1-1 1-1 1-1 1-1 1-1 1 0 1 0 1-2 1 1 1-1 1-1 1 0 1 1 1 0 1 1 1 1 1 1 1-2 1 2 1 1 1 1 1 0 1 1 1 2 1 1 1 0 1 1 1 0 1 0 1 1 1-1 1 0 1 1 1-2 1-1 1-1 1-1 1-1 1 0 1-2 1 0 1-2 1 0 1 0 1-1 1 0 1 1 1 0 1 0 1 1 1 1 1 1 1 1 1 0 1 0 1 2 1 1 1 0 1 1 1 2 1 0 1 0 1 0 1-2 1 3 1 0 1 0 1 1 1 0 1 0 1-1 1 1 1 1 1 0 1-2 1 1 1 1 1-1 1 0 1-1 1 1 1 0 1 0 1 1 1-1 1 0 1 1 1-1 1 0 1 0 1 1 1 0 1 0 1-1 1 1 1 0 1-1 1 1 1 0 1-1 1 0 1 0 1 2 1-3 1 1 1 0 1 1 1-2 1 2 1 0 1-2 1 2 1-1 1 0 1 1 1-1 1 0 1 0 1-1" stroke="#f0e68c" vector-effect="non-scaling-stroke"/>
<path d="M0 490l 1-1 1 1 1 0 1-1 1 2 1-1 1 0 1 0 1-1 1 2 1-2 1 0 1 1 1-1 1 0 1 0 1 1 1 0 1 1 1 0 1-1 1-1 1 1 1 0 1-1 1 1 1 0 1 0 1-2 1 2 1 0 1-1 1-1 1 1 1 0 1 1 1 0 1-1 1 1 1 0 1-1 1 1 1 0 1 0 1 0 1 0 1-1 1 0 1 0 1 0 1 0 1 0 1 2 1-3 1 0 1 1 1-1 1 0 1-1 1 2 1-3 1 3 1-2 1-1 1 1 1-1 1 0 1 0 1-2 1 2 1-2 1 1 1-1 1-1 1 0 1 1 1-1 1 0 1-1 1 0 1 0 1 1 1-1 1 1 1-1 1 1 1 1 1-1 1-1 1 0 1 0 1 0 1-2 1-1 1 0 1 0 1-1 1 0 1-2 1 0 1 1 1 1 1-1 1 1 1-1 1 1 1 1 1-1 1 0 1 1 1 1 1 0 1 3 1 0 1 0 1 0 1 3 1-1 1 2 1-1 1 0 1 1 1-1 1 0 1-1 1-1 1 0 1-2 1-1 1 0 1-2 1 0 1 0 1-1 1-1 1 0 1-1 1 2 1 1 1-1 1 1 1 1 1 0 1 1 1 0 1 2 1 0 1 0 1 0 1 4 1-2 1 1 1 1 1 1 1-1 1 1 1 1 1-1 1 0 1 2 1-2 1 0 1 1 1 1 1-1 1 1 1-1 1 1 1 1 1-2 1 0 1 1 1 0 1 0 1 1 1-1 1 0 1-1 1 1 1 0 1 0 1 0 1-1 1 0 1 1 1-1 1 1 1 0 1 0 1 0 1-1 1 1 1 0 1 1 1-1 1 0 1 1 1-2 1 1 1-1 1 1 1 0 1 1 1-1 1-1 1 1 1 0 1 0 1-1 1 0" stroke="#32cd32" vector-effect="non-scaling-stroke"/>
<path d="M0 489l 1 1 1 0 1 0 1-2 1 2 1 0 1-2 1 2 1 0 1 1 1-2 1 1 1-1 1 1 1-1 1 0 1 1 1-1 1 0 1 1 1-1 1-1 1 2 1 0 1 0 1-1 1-1 1 2 1-1 1 0 1 1 1 0 1-1 1 0 1 1 1 0 1 0 1-1 1 0 1 1 1 0 1 0 1-1 1 1 1 1 1 0 1-1 1 0 1-1 1 2 1-3 1 1 1-1 1 1 1-1 1 0 1 0 1 0 1 0 1 0 1-1 1 0 1 0 1 1 1-2 1 0 1 0 1 0 1-1 1 0 1 0 1 0 1-1 1-1 1 2 1-1 1 0 1-1 1 0 1 0 1-1 1 2 1 0 1-2 1 1 1 0 1 0 1 1 1 0 1-1 1-2 1 1 1-1 1-1 1-1 1 1 1-2 1 0 1 0 1 1 1-1 1 0 1 0 1-1 1 1 1 1 1 0 1-1 1 3 1-1 1 1 1 1 1 0 1 0 1 2 1 0 1 1 1 1 1 0 1 0 1-1 1 0 1 0 1 2 1-2 1 1 1-3 1 1 1-2 1-1 1-1 1-1 1 0 1-2 1 2 1-1 1 0 1 0 1-1 1 2 1 1 1 0 1 1 1 0 1 2 1-1 1 1 1 1 1 1 1 1 1 0 1 1 1 0 1 0 1 0 1 1 1 1 1-1 1 1 1 0 1-1 1 1 1 1 1-1 1 1 1-1 1-1 1 0 1 0 1 1 1 1 1-1 1 1 1-1 1 0 1 0 1 0 1 2 1-3 1 0 1 2 1 0 1 0 1 0 1 0 1-1 1 1 1 1 1-2 1 0 1 1 1 0 1 1 1-1 1-1 1 2 1-1 1 1 1-2 1 0 1 1 1-2 1 2 1 0 1 0 1-1 1 1 1-1 1 0 1 1" stroke="#8a2be2" vector-effect="non-scaling-stroke"/>
<path d="M0 490l 1-1 1 1 1 0 1 0 1 0 1 0 1 1 1-1 1 0 1 1 1-2 1 1 1 1 1-2 1 2 1 0 1-1 1-1 1 1 1 0 1 1 1-2 1 1 1-1 1-1 1 0 1 1 1-1 1 3 1-2 1 0 1 1 1 1 1 0 1 0 1-1 1-1 1 0 1 0 1 1 1-1 1 1 1-1 1 1 1-1 1 0 1 0 1 0 1 0 1 0 1 1 1-1 1 0 1 0 1 0 1 0 1-1 1-1 1 1 1-2 1 2 1 0 1-1 1 1 1-2 1 0 1 0 1 0 1 0 1-1 1 0 1 0 1 0 1 0 1-1 1 0 1 0 1 1 1-2 1 0 1 0 1 1 1-2 1 3 1-3 1 2 1-1 1 1 1 0 1-1 1 0 1-1 1 0 1-1 1-2 1 1 1-1 1 0 1 0 1-1 1 0 1 1 1-1 1 0 1 0 1 0 1 1 1 0 1 0 1 2 1 0 1 3 1-2 1 0 1 1 1 1 1 2 1 0 1 0 1 1 1 0 1 1 1-1 1-1 1-1 1 1 1-2 1 0 1-2 1 0 1-3 1 1 1-1 1-2 1 1 1 0 1-1 1 1 1 0 1 2 1 0 1 0 1 1 1 0 1 2 1 1 1 0 1 1 1 1 1 1 1 0 1 0 1 0 1 0 1 0 1 0 1 2 1 0 1 0 1 0 1 1 1-1 1 0 1 0 1 0 1 0 1 0 1 0 1 1 1 1 1-1 1-1 1 2 1-1 1-1 1 1 1-1 1 1 1-1 1 0 1 0 1 1 1-1 1 1 1 0 1 0 1-1 1 1 1-1 1 0 1 1 1 0 1 0 1-1 1 1 1-2 1 1 1 0 1 1 1-1 1 0 1 0 1-1 1 1 1 0 1 1 1-1 1 1 1 0 1 1" stroke="#e0ffff" vector-effect="non-scaling-stroke"/>
<path d="M0 490l 1-1 1 0 1 1 1 0 1-1 1 1 1-1 1 0 1 1 1 0 1 0 1-1 1 1 1-1 1 1 1 0 1 0 1 1 1 0 1 0 1-1 1-1 1 1 1 0 1-1 1 1 1-1 1 0 1 1 1 0 1 0 1 0 1-1 1 1 1-1 1 1 1-1 1 1 1-2 1 3 1-1 1-1 1 1 1-1 1 0 1 0 1 1 1-1 1 0 1 0 1-2 1 2 1 1 1-2 1 1 1 0 1 0 1-1 1 0 1 0 1 0 1 0 1 0 1-1 1-1 1 1 1-1 1 0 1 2 1-3 1 0 1 0 1 0 1-1 1 1 1-1 1 1 1-1 1 1 1-1 1 0 1 0 1 0 1 0 1 0 1 0 1 1 1-2 1 0 1 0 1 0 1 0 1-1 1-1 1 0 1-2 1 1 1-1 1 0 1 0 1 1 1-2 1 1 1-1 1 1 1 0 1 3 1-3 1 1 1 1 1 0 1 2 1 0 1 1 1 0 1 0 1 1 1 1 1 0 1 1 1 0 1-1 1 1 1 0 1-1 1-2 1 1 1-1 1 0 1-3 1 0 1-1 1 0 1-2 1 1 1 1 1-1 1 0 1 1 1-1 1 0 1 1 1 2 1 0 1 2 1 0 1 0 1 0 1 1 1 2 1 0 1 0 1-1 1 3 1-1 1 1 1-1 1 1 1 0 1-1 1 2 1-1 1 1 1 0 1-1 1-1 1 2 1 0 1-1 1 0 1 2 1-1 1-1 1 2 1-1 1 0 1-1 1 1 1-1 1 1 1-1 1 1 1-1 1 1 1-1 1 1 1 0 1 0 1-1 1 1 1 0 1 1 1-2 1 0 1 1 1 0 1-2 1 1 1 0 1 1 1-1 1 0 1 0 1 1 1-1 1 1 1 0 1 0 1-1 1 1" stroke="#da70d6" vector-effect="non-scaling-stroke"/>
<path d="M0 490l 1 0 1 0 1 0 1-1 1 1 1 0 1 0 1 0 1 0 1 1 1-1 1 1 1-1 1 0 1-1 1 1 1-1 1 0 1 1 1 0 1-2 1 2 1-1 1 1 1-1 1 1 1-1 1 1 1-1 1 0 1-1 1 1 1 1 1 0 1-1 1 0 1 0 1-1 1 2 1 0 1 0 1-1 1 1 1 0 1 1 1-2 1-1 1 0 1 2 1 0 1-1 1 0 1-1 1 1 1 0 1-1 1 1 1-1 1 1 1-1 1-1 1 1 1-1 1 0 1 1 1 0 1 0 1-2 1-1 1 0 1 2 1-2 1 0 1 0 1 0 1 0 1 0 1-1 1 0 1 0 1-1 1 1 1 1 1-1 1 1 1 0 1-1 1 0 1 0 1 0 1-1 1-1 1 0 1 0 1-1 1-1 1-1 1 1 1-1 1 1 1-1 1 0 1 0 1 1 1 0 1 1 1 0 1-1 1 0 1 3 1 0 1-1 1 1 1 1 1 0 1 1 1 1 1 0 1 1 1-1 1 1 1 0 1 0 1-1 1 0 1 0 1-2 1 0 1 0 1-2 1-1 1 0 1 0 1 0 1-2 1 0 1 1 1 0 1-1 1 2 1-1 1 2 1 1 1 0 1-1 1 1 1 1 1 1 1 0 1 0 1 2 1 0 1-1 1 2 1 0 1 0 1 1 1-1 1 0 1 0 1 0 1 1 1 0 1 0 1 0 1 1 1-1 1 0 1 0 1 0 1 1 1-1 1 0 1 0 1 1 1 1 1-2 1 0 1 0 1 0 1 1 1 0 1 0 1-1 1 1 1-1 1-1 1 2 1 0 1 0 1 1 1 0 1-1 1 0 1-2 1 2 1-1 1 1 1-1 1 2 1-2 1 1 1-1 1 0 1-1 1 1 1 0 1 1 1-1 1 1" stroke="#5f9ea0" vector-effect="non-scaling-stroke"/>
<path d="M0 490l 1-1 1 1 1-2 1 1 1 1 1 1 1-1 1-1 1-1 1 2 1-1 1 0 1 1 1-1 1 1 1 0 1-1 1 0 1 0 1 1 1-1 1 2 1-1 1 1 1-2 1 1 1-2 1 2 1-1 1 0 1 1 1 1 1-2 1 0 1 1 1 0 1 0 1-1 1 1 1 0 1 0 1 0 1 0 1 0 1-2 1 1 1 0 1 0 1 0 1 1 1-1 1 1 1-1 1-1 1 1 1 0 1 0 1 0 1-2 1 1 1 0 1-1 1 1 1 1 1-3 1 1 1-1 1 0 1-1 1 2 1-1 1 1 1-1 1-1 1 0 1 0 1 0 1 0 1-2 1 1 1 0 1 0 1 2 1-1 1 0 1 0 1 0 1-2 1 2 1-2 1 0 1 1 1-2 1 2 1-2 1-1 1 0 1 1 1-2 1 0 1 1 1 0 1-2 1 1 1 1 1 0 1 0 1-1 1 0 1 2 1 0 1 1 1 1 1-1 1 2 1-1 1 1 1 2 1 2 1-3 1 0 1 1 1-1 1 1 1 0 1 0 1-2 1-1 1-1 1 0 1-1 1 0 1-1 1 1 1-1 1-1 1 0 1 1 1 0 1 0 1 0 1 1 1 0 1 2 1-1 1 1 1 1 1 0 1 0 1 2 1 0 1 1 1-1 1 0 1 0 1 1 1 1 1 1 1 0 1-1 1 0 1 0 1 1 1-1 1 0 1 1 1 0 1-1 1 0 1 1 1 0 1 0 1 0 1-1 1 0 1-1 1 1 1 1 1-1 1 1 1 0 1 0 1-1 1 0 1-1 1 2 1 0 1 0 1 0 1-1 1 0 1 1 1 0 1-1 1 2 1-1 1-1 1 1 1-1 1 1 1 1 1-2 1 1 1 0 1-1 1 0 1 1 1-1 1-1 1 2" stroke="#cd853f" vector-effect="non-scaling-stroke"/>
<path d="M0 489l 1-1 1 2 1 0 1 0 1 0 1-1 1 1 1-2 1 0 1 2 1-1 1 1 1-1 1 0 1 1 1 0 1-1 1 1 1 0 1-2 1 2 1-1 1 0 1 0 1-1 1 2 1-1 1 1 1 0 1-1 1 0 1 1 1 0 1-1 1 1 1-1 1 1 1-1 1 1 1 0 1 0 1 0 1-1 1 2 1-1 1-1 1 1 1-1 1 0 1 0 1 1 1 0 1-2 1 3 1-1 1-2 1 0 1 1 1 0 1-1 1 1 1-1 1 0 1-1 1 0 1 0 1 1 1-1 1-1 1 0 1 0 1 0 1 0 1 0 1-1 1 1 1-1 1-1 1 0 1 0 1 0 1 2 1-2 1 1 1 0 1 0 1 0 1 0 1 0 1 0 1 0 1-1 1-1 1-1 1 0 1 0 1 0 1 0 1-1 1 1 1-1 1-1 1 2 1-1 1 1 1-2 1 1 1 0 1 0 1 1 1 1 1 1 1 0 1 1 1 2 1-2 1 1 1 2 1 0 1-1 1-1 1 0 1 1 1 0 1 0 1-2 1-1 1 1 1-2 1-1 1 0 1 0 1-1 1 0 1 0 1-2 1 2 1 0 1 0 1-1 1 2 1 0 1 1 1 0 1 2 1-1 1 1 1 0 1 2 1 0 1 1 1 0 1 0 1 0 1 0 1 0 1 1 1-1 1 0 1 1 1 1 1 0 1-1 1 0 1 1 1 0 1-1 1 0 1 0 1 1 1-1 1 1 1 0 1-1 1 1 1 1 1-1 1 1 1-1 1 0 1-2 1 2 1-1 1 2 1-2 1 1 1 0 1-1 1 1 1-1 1 0 1 0 1 0 1 1 1-1 1 1 1 0 1-1 1 1 1 0 1 1 1-1 1-1 1 0 1 1 1 0 1 1 1-2 1 2 1-1" stroke="#66cdaa" vector-effect="non-scaling-stroke"/>
<path d="M0 490l 1-1 1 1 1 0 1 0 1 0 1 0 1 0 1-1 1-1 1 2 1-1 1 2 1-1 1-1 1 1 1 1 1-1 1 0 1 0 1-1 1 0 1 1 1-1 1 1 1-1 1 0 1 0 1 1 1-2 1 1 1 1 1 0 1 1 1-1 1-1 1 0 1 1 1 0 1-1 1 1 1-1 1 1 1-1 1 0 1 0 1 0 1 0 1 0 1 0 1 1 1-1 1 0 1 0 1 0 1 0 1-1 1 2 1-2 1 1 1-2 1 2 1-2 1 1 1 0 1-1 1 0 1 1 1-2 1 1 1 0 1 0 1-1 1 1 1 0 1-2 1 1 1-1 1 0 1 0 1-1 1 1 1 1 1-1 1 1 1-1 1 1 1-1 1 1 1-1 1-1 1 0 1 1 1-2 1-1 1 1 1-1 1 0 1 0 1 0 1-2 1 0 1 1 1 1 1-2 1 2 1 0 1-1 1 1 1 1 1 0 1 1 1-1 1 2 1-1 1 2 1 0 1 1 1 1 1 0 1-1 1 1 1 0 1 0 1 0 1-2 1 0 1-1 1 1 1 0 1-2 1-2 1 0 1 0 1 0 1-1 1 1 1-1 1 1 1-1 1 1 1 0 1 2 1 0 1-1 1 3 1-1 1 0 1 0 1 1 1 0 1 1 1 0 1 1 1 0 1-1 1 2 1 0 1 0 1 0 1-1 1 1 1-1 1 1 1 0 1-1 1 1 1 0 1-1 1 1 1 1 1 0 1 0 1-1 1 1 1-1 1 0 1 1 1-1 1 1 1 0 1-1 1 1 1-1 1 1 1-1 1 1 1 0 1 0 1-1 1 1 1-1 1 1 1 1 1-1 1 0 1 0 1-1 1 2 1-1 1-1 1 1 1-2 1 1 1 1 1-1 1 1 1 0 1 0 1-1 1 0" stroke="#1e90ff" vector-effect="non-scaling-stroke"/>
<path d="M0 490l 1-1 1 1 1-1 1 0 1 1 1-1 1 0 1 0 1 0 1 0 1 2 1-2 1 1 1-1 1 1 1-1 1 0 1 0 1 1 1-1 1 0 1 1 1 0 1 0 1-1 1 1 1 1 1-1 1 0 1 0 1 0 1 1 1 0 1-1 1 0 1 0 1 1 1-2 1-1 1 1 1 0 1 1 1 0 1-1 1 0 1 0 1 0 1 0 1 1 1 0 1-1 1 2 1-2 1 1 1-1 1 0 1 1 1 0 1-2 1 0 1 0 1 0 1 0 1 0 1 0 1 0 1-2 1 2 1-2 1 0 1 0 1 1 1-2 1 0 1 1 1 0 1 0 1 0 1-1 1 0 1 0 1 1 1-2 1 2 1-1 1-1 1 1 1-1 1 1 1 0 1 0 1 1 1-2 1 0 1-1 1 0 1-1 1 0 1-1 1 0 1 0 1 1 1 0 1-1 1 1 1 1 1 0 1-1 1 2 1 0 1 0 1 0 1 1 1 0 1 2 1 0 1 0 1 0 1 0 1 0 1-1 1 1 1 0 1 0 1-1 1 1 1-1 1 0 1-1 1-1 1-1 1 0 1-1 1 0 1 0 1 1 1-2 1 1 1 1 1 0 1-1 1 2 1 1 1 0 1 0 1 0 1 1 1 1 1-1 1 1 1 0 1 0 1 2 1-1 1 0 1 1 1 0 1 0 1 0 1 1 1-1 1-1 1 0 1 1 1 0 1 0 1 1 1-1 1 1 1-1 1 0 1 1 1-1 1-1 1 1 1 0 1 1 1 0 1 0 1-1 1-1 1 1 1 0 1 0 1 1 1 0 1-1 1 0 1 0 1 0 1 0 1 1 1 0 1-1 1 1 1 0 1 1 1-1 1-1 1 1 1-1 1 0 1 0 1 0 1 0 1 0 1 1 1 0 1-1 1 0" stroke="#ff69b4" vector-effect="non-scaling-stroke"/>
<path d="M0 489l 1 1 1-1 1 1 1 1 1-2 1-1 1 2 1 0 1 1 1-2 1 0 1 0 1 1 1-1 1 1 1-2 1 1 1 0 1 1 1-1 1 2 1-2 1 2 1-2 1 1 1-1 1 1 1-1 1 1 1-1 1 1 1-2 1 1 1 1 1-1 1 0 1 0 1 2 1-1 1-1 1 1 1 0 1-2 1 1 1 0 1 1 1-1 1 0 1 0 1 1 1-2 1 2 1-2 1 2 1 0 1 0 1 0 1 0 1-2 1 1 1-2 1 1 1 0 1 1 1-1 1-1 1 0 1-1 1 1 1-1 1 1 1 1 1-2 1 0 1 0 1 1 1-1 1 0 1 0 1 1 1-1 1 0 1 0 1 1 1-1 1-1 1 0 1 1 1-1 1 1 1 0 1-1 1 0 1 0 1-2 1-1 1 2 1-1 1-1 1 1 1 0 1-1 1 0 1 0 1 1 1 0 1 0 1 0 1 0 1 0 1 2 1 0 1 0 1 1 1 1 1-1 1 1 1 0 1 1 1-1 1 0 1 0 1-1 1 1 1 1 1-2 1 0 1 1 1-3 1 0 1 0 1 0 1-2 1 1 1 0 1 0 1-1 1 0 1 0 1 2 1-1 1 0 1 2 1-2 1 3 1-1 1 2 1-2 1 3 1-1 1 0 1-1 1 2 1 0 1 0 1 1 1-1 1-1 1 1 1 0 1 1 1 0 1 1 1-2 1 1 1 0 1 1 1-1 1 0 1 0 1 1 1 1 1-1 1 0 1-1 1 0 1 0 1 0 1 1 1-1 1 1 1 1 1-1 1-2 1 1 1 0 1 0 1 1 1 0 1 0 1 0 1-1 1 1 1 0 1 0 1 0 1 0 1 0 1-1 1 1 1 0 1 0 1-1 1 0 1 0 1 1 1-1 1 1 1 0 1-2" stroke="#3cb371" vector-effect="non-scaling-stroke"/>
<path d="M0 490l 1 0 1 1 1-2 1 0 1 0 1 0 1 0 1 1 1 0 1 0 1 0 1 0 1 0 1 0 1 1 1-1 1 0 1 0 1-1 1 0 1 1 1 0 1-2 1 2 1-2 1 2 1 0 1 0 1 0 1-1 1 1 1-1 1 0 1 2 1-2 1 0 1 0 1 0 1 0 1 1 1 1 1-2 1 1 1-1 1 0 1 0 1-1 1 1 1 1 1-1 1-1 1 2 1-2 1 1 1 0 1 0 1 1 1-1 1-1 1 1 1 0 1 0 1-1 1 0 1-1 1 1 1 0 1-1 1 0 1 0 1 0 1-1 1 1 1 0 1 0 1-1 1 0 1 0 1 0 1 0 1 1 1 1 1-2 1 0 1 0 1 0 1 0 1 1 1-2 1-1 1 3 1-2 1 0 1-1 1-1 1 0 1 1 1-1 1-1 1 1 1 1 1-1 1-1 1 0 1 0 1 1 1 1 1 0 1 0 1 0 1 2 1-1 1 2 1-1 1 1 1 0 1 0 1 1 1-1 1 1 1-1 1 0 1 1 1 0 1 0 1-2 1 0 1-1 1 0 1-1 1-1 1 1 1-1 1 0 1 0 1 1 1-2 1 1 1 0 1-1 1 2 1 1 1 1 1-1 1 1 1 0 1 1 1 0 1 0 1 0 1 0 1 1 1 0 1 1 1-1 1 1 1-1 1 1 1 0 1 1 1-1 1-1 1-1 1 3 1 0 1-1 1 1 1-1 1 1 1-2 1 1 1 0 1 1 1-1 1-1 1 1 1 1 1 0 1-1 1 1 1 0 1 0 1 0 1 0 1 1 1-2 1 0 1 1 1 0 1 1 1-1 1 0 1 0 1-1 1 2 1-2 1 1 1 0 1-2 1 2 1 0 1 0 1 0 1-1 1 0 1 0 1 1 1 0 1-1 1 1" stroke="#000080" vector-effect="non-scaling-stroke"/>
<path d="M0 490l 1-1 1 1 1 0 1-1 1-1 1 1 1 0 1 0 1 0 1 0 1 1 1-2 1 2 1 1 1-2 1 1 1 0 1 0 1 0 1-1 1 0 1 1 1 0 1-1 1 0 1 1 1-1 1 1 1-1 1 1 1 0 1 0 1-1 1 1 1 0 1-1 1 2 1-2 1 2 1-1 1-1 1 0 1 0 1 1 1 0 1 1 1-1 1 0 1 0 1-1 1 0 1 1 1 0 1-1 1 1 1-1 1 1 1-1 1-1 1 0 1 1 1-2 1 0 1 1 1 0 1-1 1 1 1-1 1 1 1-2 1 1 1 1 1-1 1-1 1 0 1 1 1-1 1-1 1 1 1 0 1 1 1-2 1 2 1-2 1 2 1 0 1 0 1-1 1 0 1 0 1 0 1-1 1 1 1-1 1-2 1 1 1-1 1-1 1 2 1-1 1 1 1 1 1-2 1-1 1 2 1 0 1 0 1 0 1 0 1 1 1 0 1-1 1 2 1 0 1 1 1-1 1 2 1 0 1-1 1 1 1 0 1 0 1-1 1 1 1-1 1 1 1-1 1-1 1 0 1-1 1 0 1-1 1 0 1-1 1 0 1-1 1 1 1 0 1 0 1 2 1-1 1 1 1 0 1 1 1-1 1 3 1 0 1-2 1 1 1 0 1 1 1-1 1 1 1 1 1 0 1-1 1 1 1 1 1-1 1 0 1 0 1 0 1 0 1 1 1-2 1 1 1 0 1 1 1-1 1 0 1 0 1 1 1 0 1 0 1 0 1-1 1 1 1-1 1 0 1 1 1 0 1 1 1 0 1-1 1 0 1 0 1 0 1-1 1 0 1 0 1 1 1 1 1-1 1 0 1-1 1-1 1 2 1-1 1 0 1 1 1 0 1 0 1 0 1 0 1-1 1 0 1 0 1 1 1-1 1 1" stroke="#deb887" vector-effect="non-scaling-stroke"/>
<path d="M0 490l 1-1 1 0 1 0 1 1 1 0 1 0 1-1 1 2 1-1 1 0 1-1 1 2 1-1 1 0 1-1 1 0 1 2 1-1 1 0 1 0 1-1 1 1 1 1 1-2 1-1 1 3 1-1 1 0 1 0 1 0 1 0 1-1 1 1 1-2 1 3 1-1 1 0 1-1 1 1 1-1 1-1 1 1 1 1 1 0 1-1 1 0 1 1 1-1 1 0 1 1 1-1 1 0 1 2 1-1 1-2 1 1 1 0 1-1 1 1 1-1 1 1 1-1 1 1 1 0 1-1 1-1 1 1 1 0 1-1 1 0 1 1 1 0 1-1 1 0 1 0 1-1 1 1 1 1 1-2 1-1 1 3 1-1 1 0 1 0 1 0 1-1 1-1 1 1 1 1 1 0 1-1 1-1 1 1 1-1 1-1 1 1 1-1 1 0 1 0 1 0 1 1 1-3 1 1 1 1 1 0 1 0 1 0 1 0 1 1 1-1 1 1 1-1 1 2 1 0 1 1 1 0 1 0 1 1 1 0 1 0 1 0 1 1 1-1 1 1 1-1 1-2 1 0 1 1 1-2 1 0 1 0 1-1 1 0 1 0 1-2 1 1 1 0 1 1 1 0 1 0 1 1 1 1 1-1 1 1 1 1 1-1 1 1 1 0 1 0 1 1 1-1 1 0 1 1 1 0 1 1 1 1 1-1 1 0 1 0 1-1 1 2 1-1 1 0 1 1 1-1 1 1 1 0 1 0 1-1 1 1 1 0 1-1 1 0 1 0 1 0 1 1 1-1 1 0 1 1 1 0 1 0 1 0 1 0 1 0 1-1 1 0 1 0 1 1 1-2 1 2 1 0 1 0 1 0 1 0 1 0 1 0 1-1 1 1 1-1 1 1 1 1 1-2 1 1 1 0 1 0 1 0 1-2 1 1 1 1 1-1" stroke="#48d1cc" vector-effect="non-scaling-stroke"/>
<path d="M0 490l 1 0 1 0 1 0 1-1 1 1 1 0 1 0 1 0 1-1 1 1 1 0 1-1 1 1 1-1 1 1 1 0 1-1 1 1 1-1 1 0 1 0 1 0 1 0 1 0 1 0 1 0 1 0 1-1 1 1 1 1 1-1 1 2 1-1 1-1 1 1 1 0 1-1 1 0 1 1 1-1 1 0 1 1 1 1 1-2 1 1 1-1 1 1 1 0 1 1 1-1 1 0 1-1 1 0 1 1 1 0 1-1 1-2 1 2 1 0 1 1 1-2 1 1 1 0 1-1 1 0 1 1 1-1 1 0 1 0 1 0 1-1 1 1 1 0 1-1 1 0 1 0 1 0 1-1 1 0 1 1 1-1 1 1 1 1 1-1 1 0 1-1 1 1 1-1 1-1 1 1 1 1 1 0 1-1 1-2 1 1 1 0 1-1 1 0 1 0 1 1 1-3 1 2 1 1 1-2 1 1 1-1 1 2 1 1 1-1 1 1 1 0 1-1 1 1 1 0 1 1 1 0 1 0 1 2 1-1 1 0 1 0 1 0 1-1 1 1 1 0 1 0 1 0 1-2 1 0 1-2 1 1 1-1 1 0 1 1 1-1 1-1 1 1 1 0 1 1 1 0 1 0 1 0 1 1 1-1 1 2 1 0 1 0 1 1 1-1 1 1 1 0 1-1 1 1 1 1 1 1 1-2 1 1 1 0 1 1 1 0 1-2 1 1 1 0 1 0 1 1 1-1 1 1 1-1 1 1 1 0 1-1 1 0 1 0 1 0 1 1 1 0 1-1 1 1 1-1 1 1 1-1 1 1 1 0 1 0 1 0 1-1 1 1 1 0 1 0 1 0 1-1 1 1 1-1 1 1 1-1 1 0 1 1 1 0 1 0 1 1 1-2 1 0 1 1 1 0 1 1 1-1 1-1 1 0 1 1 1-1" stroke="#b22222" vector-effect="non-scaling-stroke"/>
<path d="M0 490l 1 0 1 0 1-1 1 1 1-1 1 0 1 1 1 0 1 0 1 0 1 0 1 1 1-1 1-1 1-1 1 1 1 1 1-1 1 0 1 0 1 2 1-2 1 0 1 0 1 1 1-1 1 0 1 1 1-1 1 0 1 1 1-1 1 0 1 0 1 2 1-1 1-1 1 0 1 0 1 1 1-1 1 0 1 0 1 0 1 1 1 0 1 0 1 0 1-1 1 0 1 0 1 0 1 0 1 1 1-1 1 0 1 0 1 0 1-1 1 0 1 1 1 1 1-1 1 0 1 0 1 0 1 0 1 0 1-1 1-1 1 1 1 0 1 0 1-1 1 1 1 0 1-2 1 2 1-1 1 0 1 1 1-2 1 1 1 0 1-1 1 1 1-2 1 2 1 0 1-1 1 0 1 0 1 0 1 1 1-1 1-1 1 0 1 0 1-1 1 1 1-1 1 1 1-1 1 1 1-1 1 0 1 1 1 1 1-1 1 1 1-1 1 0 1 2 1-1 1 1 1 0 1 1 1 0 1 0 1 1 1-1 1 1 1 1 1-2 1 0 1-2 1 1 1-1 1 0 1 1 1-1 1-1 1 0 1 0 1 0 1-1 1 0 1 1 1 0 1 0 1 0 1 1 1-1 1 1 1 0 1 1 1-1 1 2 1 1 1-1 1 0 1 0 1 1 1 0 1 0 1 1 1 0 1-1 1-1 1 1 1 1 1-1 1 1 1 0 1-1 1 0 1 0 1 0 1 1 1-1 1 2 1-1 1 0 1 0 1 0 1 0 1 0 1 0 1-1 1 0 1 1 1-1 1 1 1-1 1 0 1 0 1 0 1 0 1 1 1 0 1 0 1-1 1 1 1 0 1 0 1 0 1-1 1 1 1-1 1 1 1 0 1 0 1-1 1 1 1-1 1 0 1 0 1 1 1 0 1 0" stroke="#7fff00" vector-effect="non-scaling-stroke"/>
<path d="M0 490l 1 1 1-1 1 0 1 1 1-1 1 0 1-1 1 0 1 1 1 0 1 0 1 0 1 0 1-1 1 0 1 0 1 0 1 0 1 0 1 0 1 1 1 0 1 0 1 0 1 0 1 0 1-1 1 0 1 1 1 0 1 0 1 0 1-1 1 0 1 1 1 0 1 1 1-1 1-1 1 1 1-1 1 1 1 0 1-1 1 0 1 1 1 1 1-2 1 2 1-1 1 1 1-2 1 1 1-1 1 1 1 0 1 0 1-1 1 0 1 0 1-1 1 0 1 1 1-1 1 1 1 0 1-1 1 1 1-1 1 0 1-1 1 1 1-1 1 1 1 0 1-1 1 1 1-1 1 0 1 0 1 0 1-1 1 1 1 0 1 0 1 0 1 0 1 0 1-1 1 1 1 0 1 0 1-1 1 0 1 0 1-1 1 1 1 0 1-2 1 1 1 0 1 1 1-1 1 1 1 0 1-1 1 0 1 1 1-1 1 0 1 3 1-2 1 2 1-1 1 0 1 0 1 1 1 1 1 0 1 0 1-1 1 1 1-1 1 1 1-2 1 2 1-1 1-1 1-1 1 0 1 1 1 0 1-2 1 0 1 0 1 0 1 0 1-1 1 2 1 0 1-1 1 0 1 1 1 0 1 1 1-1 1 2 1 0 1 0 1-1 1 1 1 1 1 0 1 0 1 0 1-1 1 1 1 1 1-1 1 1 1-1 1 1 1 0 1 0 1-2 1 2 1 0 1-1 1 1 1-1 1 0 1 1 1 0 1-1 1 0 1 0 1 1 1-1 1 0 1 1 1 0 1 0 1 0 1-1 1 1 1-2 1 3 1-2 1 0 1 0 1 1 1-1 1 2 1 0 1-1 1-1 1 1 1-2 1 2 1 0 1-1 1 0 1 0 1-1 1 2 1 0 1 0 1-1 1 1 1-1" stroke="#ba55d3" vector-effect="non-scaling-stroke"/>
<path d="M0 491l 1-1 1-1 1 0 1 0 1 1 1 0 1-1 1 0 1 0 1 1 1 0 1-1 1 1 1 0 1 0 1 0 1 0 1-1 1 1 1 0 1 0 1 1 1 0 1-1 1 0 1-1 1 0 1 1 1-1 1 0 1 0 1 0 1 1 1-1 1 1 1-1 1 0 1 1 1-1 1 1 1 0 1 0 1-1 1 0 1 0 1 2 1-2 1 0 1 0 1 1 1-1 1 1 1 0 1-1 1 0 1 0 1-1 1 2 1-1 1 0 1 1 1-1 1 0 1 0 1-1 1 1 1-1 1 0 1 1 1-1 1 0 1 1 1-1 1 0 1-2 1 0 1 1 1 1 1-1 1 0 1 1 1-1 1 1 1 0 1-2 1 1 1 0 1 1 1 0 1 0 1 0 1-2 1 1 1-1 1 0 1 0 1 0 1 0 1-1 1 1 1-1 1 1 1 0 1-1 1-1 1 1 1 1 1 0 1-1 1 1 1 0 1 0 1 1 1-1 1 2 1 0 1 0 1 1 1 0 1 0 1 0 1-1 1 1 1-1 1 0 1 0 1-1 1 1 1-2 1 0 1 0 1 0 1-2 1 2 1 0 1-1 1 1 1-2 1 1 1 1 1-1 1 2 1-1 1 1 1 1 1 0 1 0 1-1 1 0 1 2 1-1 1 1 1 0 1 0 1-1 1 0 1 1 1 0 1 0 1 1 1 0 1-1 1 0 1 1 1 0 1 0 1 0 1-1 1 0 1 0 1 1 1 0 1-1 1 0 1 2 1-1 1 0 1-1 1 1 1-1 1 1 1-1 1 1 1 0 1 0 1 0 1-1 1 1 1-1 1 0 1 0 1 0 1 0 1 1 1-1 1 3 1-2 1 0 1 0 1 0 1 0 1 0 1-1 1 1 1-1 1 1 1 0 1-1 1 0 1 1" stroke="#daa520" vector-effect="non-scaling-stroke"/>
<path d="M0 489l 1 1 1-1 1 2 1-1 1-1 1 0 1 0 1 2 1-2 1 0 1 0 1 0 1 1 1-1 1 1 1-1 1 0 1 1 1-1 1 2 1-1 1-1 1 1 1 0 1 0 1-1 1 1 1-1 1 1 1 0 1 0 1-2 1 1 1 1 1 0 1 0 1-1 1 1 1 0 1-1 1 0 1 1 1 0 1-1 1 1 1 0 1-1 1 0 1 1 1 1 1 0 1-1 1-1 1 1 1-1 1 0 1 1 1-1 1 0 1 0 1 1 1-2 1 0 1 0 1 0 1 0 1 0 1 2 1-2 1 0 1-1 1 0 1 2 1-1 1-2 1 2 1-1 1 0 1 1 1-1 1 0 1 0 1 1 1-1 1 1 1-1 1 0 1 0 1 0 1 0 1 0 1 0 1 0 1-1 1 0 1 0 1 0 1 0 1 0 1 0 1-1 1 0 1 1 1 0 1-1 1 1 1 0 1 0 1 0 1 1 1 0 1 1 1 0 1-1 1 1 1-1 1 1 1 1 1-1 1 1 1 0 1 0 1 0 1-1 1 1 1-1 1 0 1 0 1-1 1 0 1 0 1-1 1 0 1-1 1 1 1-1 1 1 1 0 1 0 1 0 1 1 1 0 1 1 1 0 1-1 1 1 1-1 1 1 1 0 1 1 1-1 1 2 1-3 1 1 1 1 1 0 1-1 1 1 1 0 1 0 1 1 1 0 1-1 1 1 1 1 1-1 1-1 1-1 1 1 1 1 1-1 1 0 1 1 1 1 1-2 1 0 1 2 1-2 1 1 1-1 1 0 1 0 1 2 1-2 1 1 1-1 1 2 1-2 1 1 1-1 1-1 1 2 1-1 1 0 1 0 1 1 1-1 1 0 1-1 1 2 1-2 1 2 1 0 1 0 1 0 1-1 1 2 1-2 1 0 1 1" stroke="#87cefa" vector-effect="non-scaling-stroke"/>
<path d="M0 490l 1-1 1 0 1 1 1 0 1 0 1 0 1 0 1 1 1-1 1 0 1 1 1-1 1-1 1 1 1-1 1 1 1 1 1-1 1 0 1 0 1 1 1-2 1 1 1-1 1 1 1-1 1 0 1 0 1 1 1 1 1-2 1 0 1 1 1 0 1 0 1 1 1-1 1-1 1 1 1-1 1 0 1 1 1-1 1 0 1 0 1 1 1-1 1 1 1-1 1-1 1 1 1 1 1 0 1-1 1 1 1-1 1 0 1 0 1 0 1 0 1 0 1-1 1 1 1-1 1 1 1 0 1 0 1 0 1 0 1-1 1 0 1-1 1 2 1-1 1 1 1-1 1 0 1-1 1 0 1 1 1 0 1 0 1 1 1-2 1 0 1 1 1 0 1-1 1 1 1 1 1-1 1-1 1 0 1 1 1-1 1 0 1-1 1 1 1-2 1 1 1 0 1 0 1 0 1 0 1 0 1 0 1 0 1 1 1 1 1-1 1 0 1 0 1 0 1 2 1-1 1 0 1 1 1-1 1 1 1 0 1 0 1 0 1 0 1-1 1-1 1 2 1 0 1-1 1 0 1 0 1-1 1 0 1-1 1 0 1 1 1-1 1 0 1 0 1 0 1 0 1-1 1 3 1-1 1 0 1 1 1 0 1-1 1 2 1 0 1 1 1-1 1-1 1 1 1 0 1 0 1 0 1 0 1 1 1 0 1 0 1-1 1 0 1 0 1-1 1 1 1 1 1 0 1 0 1 0 1 1 1-2 1 1 1-1 1-1 1 1 1 0 1 2 1-2 1 1 1-1 1 1 1-1 1 0 1 0 1 1 1 0 1 0 1 0 1 0 1-1 1 1 1 0 1-1 1 1 1-1 1 0 1 0 1 1 1-1 1-1 1 3 1-1 1-1 1 1 1-1 1 0 1 2 1-1 1 0 1 0" stroke="#f08080" vector-effect="non-scaling-stroke"/>
<path d="M0 490l 1-1 1 1 1 0 1 0 1 0 1 0 1-1 1 1 1 1 1-1 1-1 1 1 1-1 1 0 1 0 1 0 1 2 1-2 1 0 1 0 1 1 1-1 1 1 1-1 1 1 1-1 1 0 1 1 1 0 1 0 1-2 1 1 1 0 1 1 1 0 1-1 1 0 1 0 1 0 1 0 1 0 1 2 1-2 1 1 1 0 1-1 1 1 1 0 1-2 1 2 1-2 1 1 1 1 1 0 1-1 1-1 1 1 1 0 1 0 1 0 1 0 1 0 1 0 1 0 1 0 1-1 1 0 1 1 1 0 1 0 1-1 1 1 1-1 1 1 1-2 1 1 1 0 1 0 1 1 1-1 1 0 1-1 1 1 1 0 1 0 1 0 1 0 1 0 1-1 1 1 1 0 1-2 1 2 1-1 1 1 1-2 1 1 1 0 1 0 1-1 1 0 1 1 1 0 1-1 1 0 1 1 1 0 1 0 1 0 1 0 1 2 1-1 1 0 1-1 1 1 1 1 1 1 1-2 1 1 1 0 1 0 1-1 1 1 1 0 1-1 1 1 1-1 1 0 1 0 1 0 1-1 1 0 1-1 1 1 1 0 1 0 1-1 1 0 1 0 1 1 1 1 1-2 1 2 1 0 1-1 1 1 1-1 1 1 1 0 1 1 1 0 1 0 1 1 1-1 1 1 1-2 1 1 1 1 1-1 1 1 1-1 1 1 1-1 1 1 1-1 1 1 1 0 1 0 1 1 1 0 1-1 1-2 1 1 1 1 1 1 1-1 1 0 1 0 1-1 1 1 1 0 1-1 1 0 1 0 1 1 1-1 1 1 1 0 1 0 1 1 1-1 1 0 1-1 1 1 1 0 1-1 1 2 1-2 1 0 1 0 1 1 1-1 1 0 1 0 1-1 1 1 1 1 1 0 1-2 1 2" stroke="#ffa500" vector-effect="non-scaling-stroke"/>
<path d="M0 490l 1-1 1 1 1 1 1-1 1 0 1-1 1 1 1 0 1 0 1 1 1-1 1 0 1 0 1 0 1-1 1 1 1-1 1 1 1-1 1 1 1 0 1-1 1 0 1 0 1 0 1 1 1 0 1 0 1 1 1-1 1-1 1-1 1 1 1 1 1 0 1 0 1 0 1 0 1 0 1-1 1 1 1 0 1-1 1 1 1 0 1 1 1-1 1 0 1 0 1-1 1 1 1 0 1 0 1 0 1-1 1 1 1-1 1 0 1 1 1-2 1 1 1 0 1 0 1 0 1 0 1-1 1 0 1 1 1 1 1-1 1 0 1 0 1-1 1 1 1-1 1-1 1 1 1 0 1 0 1 0 1 0 1 1 1 0 1-1 1 0 1 0 1 0 1 0 1 0 1 0 1 0 1 0 1 0 1-1 1 0 1-1 1 1 1-1 1 1 1 1 1-1 1 0 1 0 1 1 1 0 1-1 1 0 1 0 1 0 1 0 1 1 1 0 1 0 1 0 1 0 1 0 1 1 1 0 1-1 1 2 1-1 1 0 1 0 1 0 1 0 1 0 1 0 1 1 1-3 1 0 1 1 1 0 1-1 1 0 1-1 1 1 1 0 1 0 1-1 1 1 1 1 1 0 1 0 1 0 1 0 1-1 1 0 1 2 1-1 1 0 1 1 1 1 1-1 1 0 1 0 1 1 1-2 1 1 1 0 1 0 1 1 1-1 1 0 1 0 1 0 1 1 1-1 1 2 1-2 1-2 1 3 1 1 1-1 1 1 1 0 1-2 1 2 1-2 1 0 1 1 1 0 1 0 1-1 1 0 1 0 1 1 1-1 1 0 1 0 1 1 1 0 1-1 1 1 1 0 1-1 1 0 1 0 1 1 1 0 1 0 1 0 1-1 1-1 1 1 1 1 1 0 1-1 1 0 1 0 1 0" stroke="#90ee90" vector-effect="non-scaling-stroke"/>
<path d="M0 490l 1 0 1 1 1-1 1 0 1-1 1 0 1 0 1 0 1 1 1 0 1-1 1 0 1 0 1 0 1 0 1-1 1 1 1 2 1-3 1 2 1-1 1 0 1 0 1 1 1 0 1 0 1-1 1 2 1 1 1-1 1-1 1 0 1 0 1 0 1 0 1 0 1-1 1 1 1 0 1-1 1 1 1 0 1 0 1 0 1-2 1 2 1 1 1-2 1 1 1 0 1 0 1-1 1 0 1 0 1 0 1 0 1 1 1-1 1 1 1-1 1 0 1 0 1 0 1 0 1 1 1-2 1 2 1-1 1 0 1-1 1 2 1-2 1 0 1 1 1 0 1-1 1 1 1-1 1 0 1 0 1 0 1 0 1 0 1 0 1 0 1-1 1 1 1 0 1 0 1 0 1 0 1 1 1-1 1 0 1-1 1 1 1 0 1-1 1-1 1 1 1 1 1-2 1 2 1 1 1-2 1 0 1 0 1 0 1 1 1 0 1 0 1-1 1 0 1 2 1 0 1-1 1 1 1-1 1 1 1-1 1 1 1 0 1 1 1-2 1 0 1 0 1 0 1 1 1-1 1 0 1-1 1 1 1-1 1-1 1 2 1-1 1 1 1-1 1-1 1 2 1-1 1 0 1 0 1 1 1-1 1 1 1 0 1 0 1 1 1-1 1 1 1 0 1 0 1 0 1 0 1 0 1 0 1 0 1 0 1 1 1 1 1-3 1 1 1 0 1 0 1-1 1 0 1 2 1-1 1 1 1-1 1 1 1 0 1 0 1-1 1 0 1 0 1 1 1-1 1 0 1 1 1 0 1 0 1-1 1 0 1 0 1 1 1 0 1-1 1 1 1-1 1 1 1-1 1 0 1 0 1 1 1 0 1 1 1-2 1 0 1 0 1 0 1 1 1 0 1 0 1 0 1-1 1 1 1-1 1 0" stroke="#2f4f4f" vector-effect="non-scaling-stroke"/>
<path d="M0 489l 1 1 1 0 1-1 1 1 1-1 1 0 1 1 1 1 1-2 1 1 1-1 1 1 1-1 1 1 1 0 1 0 1 0 1-1 1 1 1 0 1 0 1-1 1 2 1-2 1 0 1 1 1-1 1 0 1 0 1 1 1-1 1 1 1 0 1 0 1-1 1 1 1-1 1 0 1 0 1 1 1 0 1-1 1 1 1 0 1-1 1 0 1 1 1-1 1 1 1 0 1-1 1 1 1-1 1 2 1-2 1 0 1 1 1-1 1 0 1 0 1 0 1 0 1 0 1 0 1 0 1-1 1 1 1-1 1 1 1 0 1 0 1 0 1-1 1 0 1 1 1 0 1-1 1 1 1 0 1 0 1-1 1 0 1 1 1 0 1-1 1 1 1-1 1 0 1 0 1 0 1 0 1 1 1-1 1 0 1 0 1-1 1 0 1 0 1 0 1 0 1 0 1 1 1-1 1 1 1 0 1 0 1-1 1 1 1 0 1 0 1-1 1 2 1-2 1 1 1 1 1-1 1 1 1 0 1-1 1 0 1 2 1-2 1 1 1 1 1 0 1-1 1 0 1-2 1 1 1 0 1 0 1 0 1 0 1 0 1-2 1 0 1 1 1 1 1-2 1 2 1-1 1 1 1 0 1 0 1 1 1-1 1 0 1-1 1 2 1-1 1 0 1 1 1 0 1 1 1-1 1 1 1 1 1-2 1 0 1 1 1-1 1 1 1-1 1 0 1 0 1 0 1 0 1 1 1-2 1 1 1 0 1 0 1 1 1-1 1 2 1-1 1 0 1-1 1 1 1 0 1-1 1 1 1 1 1-1 1 0 1-1 1 1 1 0 1 0 1 0 1 0 1 0 1 0 1 0 1 0 1 0 1 0 1 0 1-1 1 0 1 1 1 0 1 0 1 0 1-1 1 0 1 0 1 1 1 0 1-1" stroke="#fffacd" vector-effect="non-scaling-stroke"/>
<path d="M0 489l 1 2 1-2 1 0 1 0 1 0 1 1 1 0 1 0 1 0 1 0 1 0 1-1 1 1 1-1 1 0 1 0 1 1 1-1 1 1 1 0 1-1 1 1 1 0 1 0 1-1 1 1 1 0 1 0 1 0 1-1 1 0 1 1 1 0 1 1 1-2 1 0 1 1 1-1 1 1 1-1 1 1 1 0 1 0 1 0 1 0 1-1 1-1 1 2 1 0 1-1 1 1 1-2 1 1 1 0 1 1 1 0 1 0 1-1 1 1 1 0 1 0 1 0 1-1 1 0 1 0 1 0 1 1 1 0 1-2 1 2 1-1 1 0 1-1 1 0 1 0 1 1 1 0 1 1 1-1 1-2 1 1 1 0 1 0 1 0 1 1 1-1 1 0 1-1 1 1 1 1 1-1 1 0 1 0 1 0 1 0 1 0 1 0 1 0 1-1 1 1 1 0 1 1 1-1 1 0 1 0 1 0 1 0 1 1 1-2 1 2 1-2 1 0 1 2 1-1 1 0 1 0 1 1 1 0 1 1 1 0 1-1 1-1 1 0 1 1 1 0 1 0 1-1 1 0 1 0 1 0 1 1 1-1 1-1 1 1 1 0 1 0 1 0 1 0 1 0 1 0 1 0 1 0 1 0 1 0 1 0 1 0 1 0 1 1 1 0 1 0 1 0 1 0 1 0 1 1 1 0 1-1 1 2 1-2 1 1 1-1 1 1 1-1 1 1 1 0 1-1 1 0 1 0 1 0 1 0 1 1 1 1 1-1 1 0 1 1 1-2 1 1 1 0 1 0 1-1 1 0 1 0 1 1 1 1 1-2 1 1 1 0 1-1 1 1 1-1 1 0 1 0 1 1 1 0 1 0 1 0 1-1 1 1 1 0 1-1 1 0 1 0 1 1 1 1 1-2 1 1 1 1 1-2 1 1 1 0 1-1" stroke="#ffb6c1" vector-effect="non-scaling-stroke"/>
<path d="M0 489l 1 1 1 0 1 0 1-1 1 0 1 1 1 0 1 0 1 0 1 0 1 0 1 0 1-1 1 1 1 0 1 1 1-1 1-1 1 2 1-2 1 0 1 0 1 0 1 0 1 2 1-1 1-1 1 0 1 0 1 0 1 1 1-1 1-1 1 2 1 0 1 0 1 0 1 0 1-2 1 2 1 0 1 0 1 0 1-1 1 0 1 1 1 1 1-1 1-1 1 0 1 1 1-2 1 1 1 0 1 1 1-1 1 0 1 1 1-1 1 0 1-1 1 2 1-1 1 1 1-1 1 1 1-1 1 0 1 0 1-1 1 2 1-2 1 1 1-1 1 2 1-1 1-1 1 0 1 1 1-1 1 1 1-1 1 1 1-1 1 0 1 1 1-1 1 1 1 0 1-1 1 0 1 1 1-2 1 2 1-1 1-1 1 0 1 1 1-1 1 1 1 1 1 0 1-1 1 0 1 0 1 0 1 1 1-1 1 0 1-1 1 1 1 1 1 0 1 0 1 0 1 0 1 0 1 0 1 0 1 0 1 0 1 1 1-1 1-1 1 0 1 2 1 0 1-3 1 2 1 0 1-1 1 0 1 1 1-1 1 1 1-1 1 0 1 0 1 0 1 1 1 0 1 0 1-1 1-1 1 1 1 1 1 0 1 0 1 0 1 0 1 1 1-1 1 0 1 1 1-1 1 1 1-1 1 0 1 0 1 0 1 0 1 0 1 0 1 0 1 0 1 1 1-1 1 1 1 0 1-1 1 1 1-1 1 1 1-1 1 0 1 0 1 0 1-1 1 1 1 0 1 0 1 1 1-1 1 0 1 0 1 0 1 1 1 0 1-1 1 1 1-1 1 0 1 0 1 1 1-1 1 0 1 1 1 0 1 0 1-1 1 1 1-1 1 0 1 0 1 2 1-1 1 0 1 0 1 0 1 0" stroke="#800080" vector-effect="non-scaling-stroke"/>
<path d="M0 490l 1 0 1-1 1 0 1 0 1 0 1 0 1 1 1 0 1-1 1 1 1-1 1 2 1-2 1 1 1-1 1 1 1 0 1-1 1 1 1 0 1 0 1-1 1 0 1 1 1 0 1 0 1-2 1 1 1 0 1 0 1 1 1-1 1 1 1-1 1 1 1 0 1-1 1 0 1 1 1 0 1 0 1 0 1-1 1 1 1-2 1 2 1-1 1 1 1 0 1 0 1-2 1 1 1 1 1 0 1-1 1 0 1 1 1-2 1 2 1 0 1-1 1 0 1 0 1 1 1-2 1 0 1 1 1 0 1 0 1 1 1-2 1 1 1 0 1 0 1 0 1 0 1 0 1 0 1 0 1 0 1 1 1-1 1-1 1 1 1-1 1 2 1-2 1 0 1 0 1 2 1-2 1 0 1 1 1-1 1 0 1 0 1 0 1 1 1-1 1 0 1 0 1-1 1 0 1 2 1-1 1 0 1 1 1 1 1 0 1-2 1 1 1 0 1 1 1-1 1 0 1 1 1-2 1 2 1-1 1-1 1 2 1 0 1-1 1 1 1 1 1-2 1 1 1-1 1 0 1 0 1 0 1 1 1-2 1 0 1 1 1 0 1-1 1-1 1 1 1 0 1 0 1 1 1-2 1 2 1 0 1-2 1 1 1 0 1 1 1 1 1-1 1 0 1 1 1-1 1 0 1 2 1-1 1 0 1 0 1 0 1 0 1-1 1 0 1 0 1-1 1 2 1 0 1 0 1-1 1 0 1-1 1 1 1 0 1 1 1 0 1 0 1-1 1 0 1 2 1-3 1 2 1 0 1-1 1 0 1 1 1 1 1-1 1-1 1 0 1 0 1 2 1-2 1 0 1 0 1 1 1 0 1 0 1-1 1 0 1 1 1-1 1 1 1 0 1 0 1 0 1 0 1 0 1 0 1-1 1 0" stroke="#ff0000" vector-effect="non-scaling-stroke"/>
<path d="M0 490l 1-1 1 0 1 1 1-1 1 1 1-1 1 0 1 0 1 1 1 1 1-2 1 0 1 1 1 0 1 0 1 0 1-1 1 1 1-1 1 0 1 0 1 0 1 1 1 0 1 0 1 0 1 0 1-1 1 2 1-1 1 0 1-1 1 1 1-1 1 1 1-1 1 0 1 1 1-1 1 1 1-1 1 1 1 0 1 0 1 1 1-2 1 1 1 1 1-1 1 0 1-1 1 0 1 1 1 0 1-1 1 1 1 0 1 1 1-2 1 0 1 1 1-1 1 1 1 0 1-1 1 1 1-1 1 0 1 0 1 1 1 0 1-1 1 0 1 0 1 0 1 0 1 0 1 0 1 1 1-1 1 0 1 0 1 0 1 0 1 0 1 1 1 0 1-1 1 0 1 1 1-2 1 1 1 0 1-1 1 1 1 0 1 0 1-1 1 0 1 1 1-1 1 0 1 0 1 1 1-1 1 1 1-1 1 1 1-1 1 1 1 0 1-1 1 1 1 0 1 1 1-1 1-1 1 1 1 1 1 0 1-2 1 1 1 0 1 2 1-3 1 1 1 0 1-1 1 1 1 0 1 0 1-1 1 1 1-1 1 0 1 0 1 1 1-1 1 1 1-1 1 1 1-1 1 0 1 1 1-1 1 1 1 0 1-1 1 2 1-1 1-1 1 1 1 0 1 0 1 1 1-1 1 0 1 0 1 1 1-1 1 1 1 0 1 0 1-1 1 1 1-1 1 0 1 0 1 0 1 1 1 1 1-1 1-1 1 0 1 1 1 0 1 0 1 0 1-1 1 0 1 0 1 1 1-1 1 1 1 1 1-2 1 1 1-1 1 0 1 1 1-1 1 1 1 0 1-1 1 0 1 1 1-1 1 0 1 1 1-1 1 1 1 0 1-1 1 1 1 0 1-1 1 1 1 0 1 0 1-1" stroke="#6495ed" vector-effect="non-scaling-stroke"/>
<path d="M0 489l 1-1 1 1 1 0 1 0 1 1 1-1 1 2 1-1 1-1 1 0 1 1 1 0 1 0 1-1 1 1 1 0 1 0 1-1 1 0 1 0 1 0 1 1 1-1 1 1 1 0 1 0 1-1 1 0 1 0 1 0 1 0 1 0 1 1 1 1 1-1 1 0 1-1 1 0 1 1 1 0 1-1 1 0 1 1 1 0 1 0 1-1 1 1 1 0 1-1 1 0 1-1 1 2 1-1 1-1 1 1 1 1 1 0 1 0 1-1 1 1 1-1 1 1 1-1 1 1 1-2 1 2 1-1 1 0 1 0 1 1 1-1 1 0 1 0 1-1 1 1 1 0 1 1 1-2 1 2 1-1 1 0 1 1 1-1 1 0 1 1 1-1 1 1 1-1 1 0 1-1 1 0 1 0 1 1 1 1 1-1 1-1 1 0 1 0 1 0 1 0 1 1 1-1 1 0 1 0 1 1 1 0 1 0 1 0 1 0 1 0 1 0 1 0 1 0 1 0 1 0 1 0 1 0 1 0 1 0 1 0 1 0 1 0 1 1 1 0 1 0 1-1 1 0 1 0 1 1 1-1 1-1 1 2 1-1 1-1 1 1 1-2 1 3 1-1 1 0 1 0 1-1 1 1 1 0 1 0 1 0 1-1 1 2 1 0 1-1 1 1 1-1 1 0 1 1 1-1 1 0 1 0 1 1 1 0 1 0 1-1 1 1 1-1 1 1 1 0 1 0 1 0 1 0 1 0 1 0 1 0 1 0 1-1 1 0 1 0 1 1 1 0 1-1 1 2 1-1 1 0 1-1 1 0 1 1 1-1 1 1 1 0 1 0 1 0 1-1 1-1 1 2 1 0 1 0 1 0 1 0 1-1 1 0 1 1 1-2 1 0 1 3 1-2 1 0 1 1 1 0 1-2 1 2 1 0 1 0 1 0" stroke="#778899" vector-effect="non-scaling-stroke"/>
<path d="M0 491l 1-2 1 1 1 0 1 0 1 0 1-2 1 1 1 1 1 0 1 0 1 0 1-1 1 1 1-1 1 1 1-1 1 0 1 1 1-1 1 1 1 0 1-1 1 2 1-1 1 0 1-2 1 1 1 0 1 0 1-1 1 2 1-1 1 0 1 0 1 1 1-1 1 0 1 0 1 0 1 1 1 0 1-1 1 0 1 0 1 0 1 0 1 1 1 0 1-1 1 0 1 1 1 0 1-1 1 1 1 0 1 0 1 1 1-1 1 0 1 0 1-1 1 1 1-1 1 0 1 2 1-1 1-1 1 0 1 0 1 0 1 0 1 0 1 0 1-1 1 1 1 0 1 0 1 0 1 0 1 1 1-1 1 0 1 0 1 1 1-1 1 0 1 1 1 0 1-1 1 0 1 0 1 0 1 0 1 0 1 0 1 1 1-1 1-1 1 1 1 0 1 0 1 1 1-1 1 0 1 0 1 0 1-1 1 1 1 0 1 1 1-1 1 0 1 0 1 0 1 0 1 0 1 0 1 0 1 0 1 0 1 1 1-1 1 0 1 0 1 0 1 0 1 1 1-1 1 0 1 0 1 0 1 0 1 1 1-1 1-1 1 2 1 0 1-1 1-1 1 1 1 1 1-1 1 1 1-1 1-1 1 2 1-1 1 1 1 0 1 0 1 0 1-1 1 0 1 0 1 1 1 0 1-1 1 0 1 1 1-1 1 0 1 1 1 0 1 0 1 0 1 0 1 1 1-1 1 0 1 0 1 0 1 0 1-1 1 0 1 0 1 1 1 0 1 0 1-1 1 1 1 0 1 0 1 0 1 0 1-1 1 0 1 0 1 0 1 1 1 0 1 0 1-2 1 2 1 0 1-1 1 0 1 0 1 0 1 0 1 1 1-1 1 0 1 0 1 0 1 1 1-1 1 1 1 0 1 0 1-1" stroke="#a0522d" vector-effect="non-scaling-stroke"/>
<path d="M0 491l 1-2 1 0 1 1 1 0 1-1 1 0 1 0 1 0 1 0 1 1 1 0 1 0 1 0 1 0 1-1 1 0 1 0 1 0 1 1 1 0 1 0 1 1 1-1 1 0 1-1 1 1 1-1 1 1 1-1 1 1 1 1 1-1 1 0 1-1 1 2 1-1 1 0 1 0 1 0 1 0 1-1 1 2 1 0 1-1 1 0 1-1 1 0 1 1 1-1 1 0 1 1 1 0 1 0 1 0 1-1 1 0 1 0 1 0 1 1 1-1 1 1 1 0 1 0 1-1 1 0 1 1 1-1 1 1 1 0 1-1 1 1 1 0 1-2 1 1 1 0 1 0 1 0 1-1 1 1 1 0 1 0 1 0 1 0 1 0 1 1 1 0 1-1 1 0 1 0 1 0 1 0 1 0 1 0 1 0 1 0 1 0 1 0 1 1 1-1 1-1 1 0 1 0 1 1 1 0 1 0 1 0 1 0 1 1 1-1 1-1 1 1 1 0 1 0 1 1 1-1 1 1 1-1 1 0 1 0 1 1 1 0 1-1 1 2 1-3 1 2 1-1 1 1 1-1 1 0 1 0 1 1 1-1 1 0 1-1 1 1 1 0 1-1 1 0 1 1 1 1 1 0 1-1 1 1 1-1 1 1 1 0 1 0 1-1 1 0 1 0 1 0 1 1 1 0 1 0 1 0 1 0 1-1 1 0 1 1 1-2 1 1 1 1 1 0 1 1 1-1 1-1 1 1 1-1 1 1 1-1 1 0 1 1 1-1 1 1 1-1 1 1 1 0 1-1 1 0 1 0 1 0 1 2 1-1 1 0 1 0 1-1 1 1 1 0 1-1 1 0 1 0 1 0 1 1 1-1 1 2 1-2 1 0 1 1 1 0 1 0 1-1 1 1 1 0 1-1 1 1 1-1 1 0 1 1 1 0 1 0" stroke="#fa8072" vector-effect="non-scaling-stroke"/>
<path d="M0 490l 1 0 1-1 1 1 1-1 1 0 1 1 1 0 1 0 1 0 1-1 1 1 1 0 1-1 1 1 1 0 1 0 1-1 1 0 1 0 1 0 1 0 1 0 1 1 1 0 1 0 1 0 1-1 1 1 1 1 1-1 1 0 1-2 1 1 1 1 1-1 1 0 1 1 1 0 1 0 1 0 1-1 1 0 1 0 1-1 1 1 1 0 1 1 1 0 1 0 1 0 1-1 1 0 1 1 1 0 1-2 1 1 1 0 1 0 1 0 1 0 1 0 1 0 1 0 1 1 1-1 1 2 1-2 1 0 1 0 1 1 1 0 1-1 1 1 1-1 1 1 1 0 1-1 1 1 1-1 1 0 1 1 1-1 1 1 1-1 1 1 1-2 1 0 1 2 1 0 1 0 1 0 1-1 1 1 1-1 1 0 1-1 1 0 1 2 1-1 1 0 1 0 1 1 1-1 1 1 1-1 1 1 1-1 1 0 1 0 1 1 1-1 1 0 1 0 1 0 1 0 1 0 1 0 1 0 1 1 1 0 1-1 1 0 1 1 1-1 1 1 1-2 1 1 1 0 1 1 1-2 1 0 1 1 1-1 1 1 1 1 1-1 1 1 1 0 1 0 1 0 1-2 1 1 1 0 1 0 1 0 1 1 1-2 1 1 1 0 1 0 1 0 1 1 1-1 1 0 1 1 1 0 1-1 1 1 1 0 1 0 1 0 1 0 1 0 1 0 1-1 1 1 1-1 1 1 1 0 1-1 1 2 1-2 1 0 1 1 1 0 1 0 1 0 1-1 1 1 1 0 1-1 1 1 1 0 1-1 1 0 1 0 1 1 1 0 1 0 1-1 1 0 1 0 1 1 1 0 1 0 1-1 1 1 1-1 1 1 1-1 1 1 1-1 1 0 1-1 1 1 1 0 1 0 1 1 1 0 1 0" stroke="#2e8b57" vector-effect="non-scaling-stroke"/>
<path d="M0 490l 1 0 1-1 1 0 1 1 1-1 1 0 1 1 1-1 1 1 1-1 1 2 1-1 1-1 1 0 1 1 1 0 1-1 1 1 1-1 1 0 1 0 1 0 1 0 1 1 1-1 1 2 1-1 1 0 1 0 1 0 1 0 1 0 1 0 1-1 1 0 1 0 1 0 1 1 1 0 1-1 1 1 1-1 1 0 1 0 1 0 1 0 1 1 1 0 1 0 1 0 1 0 1-1 1 1 1-1 1 1 1 0 1-1 1 1 1 0 1-1 1 1 1 0 1-1 1 0 1-1 1 1 1 0 1 0 1 1 1-1 1 1 1-1 1 1 1-1 1 0 1-1 1 1 1 0 1 2 1-1 1-1 1 0 1 0 1 1 1-1 1 2 1-2 1 0 1 0 1 0 1 0 1 0 1-1 1 2 1-1 1 0 1 1 1-1 1 0 1 0 1 1 1 0 1 0 1-1 1 0 1 0 1 1 1-1 1 1 1-1 1 1 1 0 1-2 1 2 1-1 1 1 1 0 1-1 1 1 1-1 1 1 1-1 1 1 1 0 1 1 1-1 1-2 1 1 1 1 1 0 1-2 1 1 1 0 1 0 1-1 1 2 1-1 1 0 1 0 1 0 1 1 1-1 1 0 1 0 1 0 1 1 1-1 1 0 1 0 1 1 1-1 1 1 1-2 1 1 1 0 1 0 1 1 1 0 1 0 1 0 1 0 1-1 1 0 1 1 1-1 1 1 1-1 1-1 1 2 1 0 1-1 1 0 1 0 1-1 1 1 1 0 1 1 1-1 1 0 1 1 1 0 1 0 1-1 1 0 1 1 1 0 1 0 1-1 1 0 1 2 1-2 1 0 1 2 1 0 1-2 1 0 1 1 1 0 1 0 1-1 1 1 1 1 1 0 1-1 1 0 1 0 1-1 1 0 1 0 1 1" stroke="#ffffff" vector-effect="non-scaling-stroke"/>
<path d="M0 488l 1 1 1 0 1 0 1 1 1 0 1-1 1 1 1-1 1 0 1 0 1 0 1 1 1 0 1 0 1-1 1 1 1 0 1 0 1 0 1-1 1 1 1 0 1-1 1 1 1-1 1 1 1 0 1-1 1 2 1-2 1 1 1 0 1-1 1 1 1 0 1 1 1-1 1-1 1 1 1-1 1 2 1-2 1-1 1 2 1 0 1 0 1 0 1 0 1-1 1 1 1-1 1 1 1-1 1-1 1 1 1 1 1 0 1-1 1 0 1 1 1-1 1 0 1 1 1-1 1 1 1 0 1-1 1 0 1 1 1-1 1 1 1 0 1 0 1 0 1-1 1 0 1 0 1 1 1-1 1 1 1 0 1 0 1-1 1 0 1 1 1-1 1 0 1 0 1 1 1-1 1 2 1-1 1 0 1-1 1 0 1 0 1 1 1-1 1 1 1-1 1 0 1 1 1-1 1 0 1 0 1 0 1 0 1 0 1 0 1 1 1-1 1 1 1 0 1 0 1-1 1 0 1 1 1-1 1 0 1 1 1 0 1-1 1 0 1 0 1 1 1-1 1 1 1 0 1-1 1 0 1 0 1 0 1-1 1 0 1 0 1 2 1-1 1 1 1-1 1 0 1 0 1 0 1 1 1 0 1-1 1 0 1 0 1 1 1 0 1-1 1 2 1 0 1 0 1-2 1 1 1 0 1-1 1 1 1-1 1 0 1 1 1 0 1 0 1 0 1 0 1 0 1-1 1 3 1-3 1-1 1 1 1 0 1 0 1 1 1 0 1-1 1 0 1 0 1 0 1 0 1 1 1-1 1 1 1 0 1-1 1 1 1 0 1-1 1 1 1 0 1-1 1 0 1 0 1 1 1-1 1 1 1-1 1 0 1 0 1-1 1 2 1-1 1 0 1 1 1 0 1 0 1-1 1 1 1 0 1-1" stroke="#d2b48c" vector-effect="non-scaling-stroke"/>
<path d="M0 490l 1 0 1 0 1 0 1-1 1 0 1-1 1 1 1 1 1 0 1-2 1 2 1-1 1 0 1 1 1-1 1 0 1 1 1 0 1 0 1 0 1-1 1 0 1 0 1 1 1 0 1 1 1-1 1-1 1 1 1 0 1-1 1 0 1 1 1 0 1-1 1 1 1 0 1-2 1 2 1 0 1-1 1 0 1 0 1 1 1 0 1-1 1 0 1 0 1 0 1 1 1-1 1 1 1-1 1 1 1 1 1-1 1-1 1 0 1 1 1 1 1-2 1 1 1 0 1 0 1-1 1 1 1-1 1 1 1-1 1 1 1 0 1 0 1 0 1-1 1 1 1-1 1 1 1-1 1 1 1 0 1 0 1-1 1 0 1 0 1 1 1-1 1 1 1 0 1 0 1 0 1-1 1 1 1-1 1 0 1 0 1 0 1 1 1 0 1-1 1 0 1 1 1 1 1-2 1 1 1-1 1 0 1 0 1 0 1 0 1 0 1 0 1 0 1 1 1 0 1 0 1 0 1-1 1 0 1 1 1 0 1 0 1-1 1 0 1 0 1 1 1-1 1 2 1-1 1-1 1 2 1-3 1 2 1-2 1 2 1 0 1 0 1-1 1 1 1 1 1-2 1 1 1-1 1 0 1 0 1 1 1-2 1 0 1 2 1 0 1-1 1 0 1 1 1 0 1 0 1 0 1 0 1-2 1 1 1 0 1 1 1-1 1 1 1-1 1 2 1-1 1-1 1 0 1 0 1 0 1 1 1-1 1 1 1 0 1 0 1-1 1 0 1 1 1-1 1 1 1-1 1 0 1 0 1 1 1 0 1-2 1 2 1 0 1 0 1 0 1-1 1 0 1 0 1-1 1 2 1-1 1 1 1-1 1 0 1 1 1 1 1-1 1-1 1 0 1 1 1 0 1 0 1 0 1 0 1-1 1 1" stroke="#b0c4de" vector-effect="non-scaling-stroke"/>
<path d="M0 490l 1-1 1-1 1 1 1 0 1 0 1 0 1 1 1 1 1-2 1 1 1-1 1 1 1-1 1 0 1 0 1 1 1-1 1 0 1 1 1 0 1 0 1-1 1 1 1 0 1 0 1-1 1 0 1 1 1 0 1-1 1 1 1-1 1 0 1 0 1 0 1 0 1 1 1-1 1 0 1 1 1 0 1 0 1-1 1 1 1 0 1 0 1 0 1 0 1 1 1-1 1-1 1 1 1 0 1 0 1 0 1 0 1 0 1-1 1 0 1 0 1 0 1 0 1 1 1 1 1-1 1 0 1 0 1-2 1 1 1 0 1 0 1 1 1 0 1 0 1-1 1 1 1 0 1-1 1 0 1 0 1 1 1-1 1 0 1 0 1 0 1 0 1 1 1-1 1 1 1 0 1 0 1 0 1-1 1 0 1 1 1 0 1-1 1 0 1 1 1 0 1 0 1-1 1 0 1 0 1 1 1 0 1-1 1 0 1 0 1 0 1 0 1 1 1-1 1 1 1-1 1 1 1-1 1 1 1-1 1 1 1-1 1 1 1-1 1 0 1 0 1 0 1 1 1 0 1-1 1 2 1-2 1 0 1 1 1-1 1 0 1 0 1 0 1 1 1 0 1-2 1 1 1 0 1 1 1 0 1 0 1 0 1-1 1 1 1-1 1 1 1-1 1 0 1 1 1 0 1 0 1-1 1 1 1-1 1 2 1-2 1 1 1 0 1 0 1-1 1 0 1 1 1-1 1 2 1-1 1 1 1-2 1 0 1 1 1 0 1-1 1 2 1-2 1 1 1 0 1-1 1 0 1 1 1-1 1 0 1 1 1 0 1 0 1-1 1 0 1 0 1 0 1 0 1 0 1 0 1 0 1 1 1 0 1-1 1 0 1 0 1 0 1 0 1 1 1-1 1 0 1 0 1 1 1 0 1 0 1-1" stroke="#9370db" vector-effect="non-scaling-stroke"/>
<path d="M0 490l 1-1 1 0 1 0 1 1 1 0 1-1 1 1 1 0 1-1 1 1 1 0 1-1 1 1 1-1 1 1 1 0 1 0 1-1 1 0 1 0 1 1 1-1 1 0 1 2 1-2 1 2 1-1 1 0 1-1 1 1 1 0 1 0 1 0 1 0 1 0 1-1 1 0 1 0 1 1 1-1 1 1 1-2 1 1 1 1 1-1 1 1 1 0 1-1 1 0 1 0 1 0 1 1 1-2 1 1 1 0 1 1 1-1 1 0 1 1 1 0 1 0 1-2 1 2 1 0 1-1 1 2 1-3 1 2 1 0 1 0 1-1 1 1 1 0 1 0 1-2 1 2 1 0 1 0 1-1 1 1 1-1 1 0 1 1 1 0 1-1 1 0 1 1 1-1 1 1 1 0 1-1 1 1 1 0 1-1 1 2 1-2 1 0 1 1 1-1 1 0 1 1 1-1 1 1 1 0 1-2 1 2 1 1 1-1 1-1 1 2 1 0 1-1 1-1 1-1 1 1 1 0 1 0 1 0 1 0 1 0 1 1 1-1 1 1 1-1 1 1 1-1 1 0 1 1 1-1 1 1 1 0 1-1 1 0 1 1 1-1 1 0 1 0 1-1 1 2 1-1 1 1 1 0 1 0 1-1 1 0 1 1 1 0 1 0 1-1 1 0 1 0 1 0 1 1 1-1 1 1 1-1 1-1 1 2 1-1 1 0 1 0 1 0 1 1 1 0 1-1 1 0 1 0 1 1 1 0 1 0 1-1 1 1 1 0 1 0 1-1 1 0 1 1 1-1 1 0 1 0 1 0 1 2 1-2 1 1 1 1 1-2 1 1 1 0 1 0 1 0 1-1 1 0 1-1 1 2 1-1 1 1 1-1 1 1 1-1 1 0 1 1 1 0 1-1 1 0 1 0 1 1 1 0 1 0 1 0 1-1" stroke="#00ff7f" vector-effect="non-scaling-stroke"/>
<path d="M0 490l 1-1 1 1 1-1 1 0 1 1 1-1 1 1 1-1 1 0 1 1 1-1 1 0 1 1 1-1 1 1 1-1 1 1 1-1 1 1 1-1 1 0 1 0 1 1 1 0 1-1 1 1 1 1 1-2 1 1 1 0 1 0 1 0 1-1 1 1 1-1 1 0 1 0 1 1 1-1 1 1 1 0 1-1 1 0 1 2 1-2 1-1 1 2 1 0 1-1 1 1 1-1 1 0 1 0 1 1 1 0 1 0 1 0 1-1 1 1 1 0 1-1 1 1 1 0 1-1 1 1 1-1 1 1 1-1 1 1 1 1 1-1 1 0 1 0 1 0 1 0 1-1 1 1 1-1 1 1 1 1 1-1 1 0 1 0 1 0 1 0 1 0 1-1 1 0 1 1 1-1 1 1 1 0 1-1 1 0 1 0 1 0 1 1 1-2 1 2 1-1 1 0 1 0 1 1 1-1 1-1 1 2 1 0 1 0 1-1 1 1 1-1 1 0 1 0 1 0 1 1 1-1 1 1 1-1 1 1 1-1 1 1 1 0 1 0 1-1 1 0 1 1 1 0 1-1 1 1 1 0 1 0 1 0 1-1 1 1 1 0 1 0 1-1 1 2 1-1 1-1 1 1 1 0 1 0 1 0 1 0 1 1 1-1 1 0 1-1 1 1 1 0 1 0 1 0 1 0 1 0 1-1 1 1 1-1 1 0 1 1 1 0 1 0 1 0 1 0 1-1 1 1 1 1 1-1 1-1 1 1 1-1 1 0 1 0 1 0 1 0 1 1 1 0 1-1 1 1 1-2 1 0 1 2 1 0 1-1 1 1 1-1 1 2 1-2 1 1 1-1 1 0 1 1 1 0 1-1 1 1 1 0 1 0 1 0 1 0 1 0 1-1 1 0 1 0 1 1 1 0 1 0 1-1 1 0 1 2 1-2" stroke="#008080" vector-effect="non-scaling-stroke"/>
<path d="M0 490l 1-1 1 1 1 0 1-1 1 2 1-1 1-1 1 0 1 0 1 0 1 1 1 0 1 0 1 0 1-1 1 0 1 1 1-1 1 0 1 0 1 0 1 0 1 1 1-1 1 1 1-1 1 1 1-1 1 1 1 0 1 0 1-1 1 1 1 0 1 0 1 1 1-1 1-1 1 1 1-1 1 1 1 0 1-1 1 0 1 1 1 0 1 0 1-1 1 1 1 1 1-1 1-1 1 0 1 1 1 0 1 0 1 0 1 0 1-1 1 1 1 0 1-1 1 0 1 1 1-1 1 0 1 1 1 0 1 0 1 0 1-1 1 0 1 1 1 0 1 0 1 0 1-1 1 0 1 0 1 0 1 1 1 0 1 0 1 0 1-1 1 1 1-1 1 1 1-1 1 0 1 0 1 0 1 0 1 0 1 0 1 1 1-1 1 1 1-1 1 1 1 0 1 0 1 0 1-1 1 1 1-1 1 0 1 0 1 2 1-1 1 0 1 0 1-1 1 1 1 0 1 0 1-1 1 1 1-1 1 2 1-1 1-1 1 1 1 0 1 0 1 1 1-1 1-1 1 0 1 0 1 1 1-1 1 1 1 1 1-2 1 1 1 0 1-1 1 1 1 0 1-1 1 0 1 1 1-1 1 1 1-1 1 0 1 1 1-1 1 0 1 1 1-1 1 0 1 0 1 0 1 0 1 1 1-1 1 1 1 0 1-1 1 0 1 1 1-1 1 0 1 0 1 1 1 0 1 0 1 0 1 1 1-1 1 0 1-2 1 2 1 0 1-1 1 1 1 1 1-1 1-1 1 0 1 1 1 0 1-1 1 0 1 0 1 1 1 0 1 1 1-1 1-1 1 1 1 0 1-1 1 1 1 0 1-1 1 1 1-1 1 1 1 0 1-1 1 0 1 0 1 0 1 1 1-1 1 0 1 0" stroke="#00ffff" vector-effect="non-scaling-stroke"/>
<path d="M0 490l 1 0 1 0 1 0 1 0 1 0 1-1 1 2 1-1 1-1 1 0 1 1 1-1 1 0 1 1 1-1 1 0 1 2 1-2 1 1 1 0 1-1 1 1 1 0 1 0 1 0 1 0 1-1 1 1 1 0 1-1 1 2 1-1 1 1 1-1 1 0 1 0 1-1 1 1 1 0 1-1 1 1 1-1 1 0 1 0 1 1 1-1 1 2 1-1 1 0 1 0 1 0 1-2 1 1 1 1 1-1 1 1 1 0 1 0 1 0 1 0 1-1 1-1 1 2 1-1 1 1 1 0 1-1 1 2 1-2 1 1 1-1 1 1 1-1 1 1 1-1 1 0 1 1 1 0 1-1 1 2 1-2 1 1 1-1 1 1 1 0 1 0 1-1 1 0 1 0 1 0 1 1 1 0 1 0 1 1 1-1 1 0 1 1 1-1 1-1 1 0 1 1 1 0 1-1 1 0 1 2 1-2 1 1 1 0 1-1 1 1 1 0 1 0 1-1 1 0 1 1 1-1 1 1 1 0 1 0 1-1 1 1 1 0 1 0 1-1 1 1 1-1 1 0 1 1 1 0 1-1 1 0 1 1 1 0 1-1 1 0 1 1 1 0 1-1 1 1 1 0 1 0 1 0 1-1 1 0 1 2 1-1 1 0 1 0 1 0 1-1 1 0 1 0 1 2 1-2 1 1 1 0 1-1 1 2 1-1 1 0 1 0 1-1 1 0 1 0 1 1 1 1 1-1 1 0 1 0 1-1 1 0 1 1 1-1 1 0 1 1 1-1 1 2 1-2 1 1 1-1 1 1 1-1 1 1 1-1 1 1 1-1 1 0 1 1 1-2 1 2 1-1 1 1 1 0 1-1 1 1 1 0 1-1 1 0 1 1 1 0 1 0 1-1 1 0 1-1 1 2 1-1 1 1 1 0 1 0 1 0" stroke="#ff00ff" vector-effect="non-scaling-stroke"/>
</g>
<path d="M727.4 490H1346.69" stroke="#8b8b00" stroke-width="2.5" fill="none"/>
</svg>
<path d="M718.5 38V504M714 503.5H718M710 489.5H718M714 476.5H718M714 462.5H718M714 449.5H718M714 435.5H718M710 422.5H718M714 408.5H718M714 395.5H718M714 382.5H718M714 368.5H718M710 355.5H718M714 341.5H718M714 328.5H718M714 314.5H718M714 301.5H718M710 287.5H718M714 274.5H718M714 260.5H718M714 247.5H718M714 234.5H718M710 220.5H718M714 207.5H718M714 193.5H718M714 180.5H718M714 166.5H718M710 153.5H718M714 139.5H718M714 126.5H718M714 113.5H718M714 99.5H718M710 86.5H718M714 72.5H718M714 59.5H718M714 45.5H718M727 513.5H1347M727.5 513V522M756.5 513V518M786.5 513V518M815.5 513V518M845.5 513V518M874.5 513V522M904.5 513V518M933.5 513V518M963.5 513V518M992.5 513V518M1022.5 513V522M1051.5 513V518M1081.5 513V518M1110.5 513V518M1140.5 513V518M1169.5 513V522M1199.5 513V518M1228.5 513V518M1258.5 513V518M1287.5 513V518M1317.5 513V522M1346.5 513V518" stroke="#000" stroke-width="1" fill="none"/>
</svg>
<div class="t" style="left:599px;width:107px;text-align:right;top:481px;line-height:16px">0</div>
<div class="t" style="left:599px;width:107px;text-align:right;top:414px;line-height:16px">5e-05</div>
<div class="t" style="left:599px;width:107px;text-align:right;top:347px;line-height:16px">0.0001</div>
<div class="t" style="left:599px;width:107px;text-align:right;top:279px;line-height:16px">0.00015</div>
<div class="t" style="left:599px;width:107px;text-align:right;top:212px;line-height:16px">0.0002</div>
<div class="t" style="left:599px;width:107px;text-align:right;top:145px;line-height:16px">0.00025</div>
<div class="t" style="left:599px;width:107px;text-align:right;top:78px;line-height:16px">0.0003</div>
<div class="t" style="left:689.4px;width:80px;text-align:center;top:522px;line-height:16px;letter-spacing:0.6px;text-indent:0.6px">0</div>
<div class="t" style="left:836.8px;width:80px;text-align:center;top:522px;line-height:16px;letter-spacing:0.6px;text-indent:0.6px">50</div>
<div class="t" style="left:984.3px;width:80px;text-align:center;top:522px;line-height:16px;letter-spacing:0.6px;text-indent:0.6px">100</div>
<div class="t" style="left:1131.8px;width:80px;text-align:center;top:522px;line-height:16px;letter-spacing:0.6px;text-indent:0.6px">150</div>
<div class="t" style="left:1279.2px;width:80px;text-align:center;top:522px;line-height:16px;letter-spacing:0.6px;text-indent:0.6px">200</div>
<div class="t" style="left:941px;width:200px;text-align:center;top:537px;line-height:20px;font-weight:bold;font-size:14px">Time [a.u.]</div>
<div class="t" style="left:602px;top:262px;width:100px;text-align:center;line-height:20px;font-weight:bold;font-size:14px;transform:rotate(-90deg);transform-origin:50px 10px">I(t) [a.u.]</div>
<div style="position:absolute;left:0px;top:0px;width:1369px;height:22px;background:#000;"></div>
<div style="position:absolute;left:0px;top:22px;width:1369px;height:1px;background:#007878;"></div>
<div class="t" style="left:0;top:3px;width:1369px;text-align:center;color:#fff;font-weight:bold;line-height:16px">Developed by Emre Brookes, Javier P&eacute;rez, Patrice Vachette and Mattia Rocco (see J. App. Cryst. 46:1823-1833, 2013)</div>
<div class="hdr" style="left:0;top:23px;width:633px;height:22px;line-height:22px">Data files</div>
<div style="position:absolute;left:54px;top:45px;width:579px;height:18px;background:#fff;"></div>
<div class="cb" style="left:-1px;top:48px"></div>
<div class="t" style="left:18px;top:45px;line-height:18px">Lock</div>
<div class="t" style="left:54px;top:45px;width:579px;text-align:center;line-height:18px">/home/ultrascan/HPLC_SAXS/Aldolase_25_11_SOMO/I_t_sd3</div>
<div style="position:absolute;left:54px;top:63px;width:579px;height:1px;background:#007878;"></div>
<div class="b" style="left:0px;top:64px;width:156px;height:22px"><span style="top:0px">Add files</span></div>

<div class="b r" style="left:158px;top:64px;width:156px;height:22px"><span style="top:0px">Similar</span></div>

<div class="b" style="left:316px;top:64px;width:156px;height:22px"><span style="top:0px">Concentrations</span></div>

<div class="b" style="left:474px;top:64px;width:157px;height:22px"><span style="top:0px">Remove files</span></div>

<div class="frame" style="left:0;top:88px;width:633px;height:176px"><div style="position:absolute;left:1px;top:1px;width:613px;height:172px;background:#000080;overflow:hidden"><div class="li" style="left:3px;top:-8px;color:#fff">aldo_pH7p5_Elution1_0022__It_q0_234744-bl-1_7434232e-10--1_1300757e-07s</div><div class="li" style="left:3px;top:10px;color:#fff">aldo_pH7p5_Elution1_0022__It_q0_235315-bl-1_5213706e-09-1_9204904e-07s</div><div class="li" style="left:3px;top:28px;color:#fff">aldo_pH7p5_Elution1_0022__It_q0_235885-bl-9_5049613e-10-1_2437213e-07s</div><div class="li" style="left:3px;top:46px;color:#fff">aldo_pH7p5_Elution1_0022__It_q0_236456-bl-2_2540632e-09-4_4615682e-07s</div><div class="li" style="left:3px;top:64px;color:#fff">aldo_pH7p5_Elution1_0022__It_q0_237026-bl-1_1718461e-09-3_5993837e-07s</div><div class="li" style="left:3px;top:82px;color:#fff">aldo_pH7p5_Elution1_0022__It_q0_237597-bl-3_2202233e-09-8_5736717e-07s</div><div class="li" style="left:3px;top:100px;color:#fff">aldo_pH7p5_Elution1_0022__It_q0_238167-bl-2_3245609e-09-6_4261267e-07s</div><div class="li" style="left:3px;top:118px;color:#fff">aldo_pH7p5_Elution1_0022__It_q0_238738-bl-1_792122e-09-4_0570974e-07s</div><div class="li" style="left:3px;top:136px;color:#fff">aldo_pH7p5_Elution1_0022__It_q0_239308-bl-8_4350245e-10-1_6652802e-07s</div><div class="li" style="left:3px;top:154px;color:#fff">aldo_pH7p5_Elution1_0022__It_q0_239879-bl-1_0801758e-09-9_1663265e-08s</div></div><div class="sb" style="left:614px;top:1px;height:172px"><div class="sbb" style="top:0"><div class="au"></div></div><div class="sbt" style="top:16px;height:140px"></div><div class="sbb" style="top:147px;height:7px"></div><div class="sbb" style="top:156px"><div class="ad"></div></div></div></div>
<div class="t" style="left:0;top:263px;width:633px;text-align:center;line-height:16px">409 of 818 files selected</div>
<div class="b" style="left:0px;top:278px;width:78px;height:20px"><span style="top:0px">Sel. all</span></div>

<div class="b" style="left:80px;top:278px;width:78px;height:20px"><span style="top:0px">Sel. Unsel.</span></div>

<div class="b" style="left:160px;top:278px;width:78px;height:20px"><span style="top:0px">Adv. Sel.</span></div>

<div class="b r" style="left:240px;top:278px;width:58px;height:20px"><span style="top:0px">View</span></div>

<div class="b" style="left:300px;top:278px;width:68px;height:20px"><span style="top:0px">Movie</span></div>

<div class="b" style="left:370px;top:278px;width:68px;height:20px"><span style="top:0px">Log X</span></div>

<div class="b" style="left:440px;top:278px;width:68px;height:20px"><span style="top:0px">Log Y</span></div>

<div class="cb" style="left:510px;top:282px;background:#c6c6c6"></div>
<div class="t" style="left:528px;top:280px;line-height:18px">Err</div>
<div class="b" style="left:553px;top:278px;width:78px;height:20px"><span style="top:0px">Rescale</span></div>

<div class="b r" style="left:0px;top:300px;width:108px;height:20px"><span style="top:0px">Normalize</span></div>

<div class="b r" style="left:110px;top:300px;width:216px;height:20px"><span style="top:0px">Average</span></div>

<div class="b r" style="left:328px;top:300px;width:215px;height:20px"><span style="top:0px">To SOMO/SAS</span></div>

<div class="b" style="left:545px;top:300px;width:42px;height:20px"><span style="top:0px">Width</span></div>

<div class="b" style="left:589px;top:300px;width:42px;height:20px"><span style="top:0px">Color</span></div>

<div class="b r" style="left:0px;top:322px;width:104px;height:20px"><span style="top:0px">Bin</span></div>

<div class="b" style="left:106px;top:322px;width:103px;height:20px"><span style="top:0px">Smooth</span></div>

<div class="b" style="left:211px;top:322px;width:104px;height:20px"><span style="top:0px">SVD</span></div>

<div class="b r" style="left:317px;top:322px;width:103px;height:20px"><span style="top:0px">Make I(t)</span></div>

<div class="b" style="left:422px;top:322px;width:104px;height:20px"><span style="top:0px">Test I(t)</span></div>

<div class="b" style="left:528px;top:322px;width:103px;height:20px"><span style="top:0px">Make I(q)</span></div>

<div class="b" style="left:0px;top:344px;width:156px;height:20px"><span style="top:0px">Concentration load</span><div class="focus"></div></div>

<div class="b r" style="left:158px;top:344px;width:156px;height:20px"><span style="top:0px">Repeak</span></div>

<div class="b r" style="left:316px;top:344px;width:156px;height:20px"><span style="top:0px">Set</span></div>

<div class="b" style="left:474px;top:344px;width:157px;height:20px"><span style="top:0px">Detector</span></div>

<div class="hdr" style="left:0;top:388px;width:633px;height:22px;line-height:22px">Produced Data</div>
<div style="position:absolute;left:0px;top:410px;width:633px;height:18px;background:#fff;"></div>
<div class="t" style="left:0;top:410px;width:633px;text-align:center;line-height:18px">/home/ultrascan/HPLC_SAXS/Aldolase_25_11_SOMO/I_t_sd3/produced</div>
<div class="frame" style="left:0;top:428px;width:633px;height:66px"><div style="position:absolute;left:1px;top:1px;width:613px;height:62px;background:#fff;overflow:hidden"><div class="li" style="left:3px;top:-11px;color:#000">aldo_pH7p5_Elution1_0022__It_q0_238167-bl-2_3245609e-09-6_4261267e-07s</div><div class="li" style="left:3px;top:7px;color:#000">aldo_pH7p5_Elution1_0022__It_q0_238738-bl-1_792122e-09-4_0570974e-07s</div><div class="li" style="left:3px;top:25px;color:#000">aldo_pH7p5_Elution1_0022__It_q0_239308-bl-8_4350245e-10-1_6652802e-07s</div><div class="li" style="left:3px;top:43px;color:#000">aldo_pH7p5_Elution1_0022__It_q0_239879-bl-1_0801758e-09-9_1663265e-08s</div></div><div class="sb" style="left:614px;top:1px;height:62px"><div class="sbb" style="top:0"><div class="au"></div></div><div class="sbt" style="top:16px;height:30px"></div><div class="sbb" style="top:37px;height:7px"></div><div class="sbb" style="top:46px"><div class="ad"></div></div></div></div>
<div class="t" style="left:0;top:493px;width:633px;text-align:center;line-height:16px">0 of 409 files selected</div>
<div class="b" style="left:0px;top:508px;width:201px;height:20px"><span style="top:0px">Select all</span></div>

<div class="b" style="left:203px;top:508px;width:78px;height:20px"><span style="top:0px">Invert</span></div>

<div class="b" style="left:283px;top:508px;width:88px;height:20px"><span style="top:0px">Similar</span></div>

<div class="b r" style="left:373px;top:508px;width:78px;height:20px"><span style="top:0px">Remove</span></div>

<div class="b r" style="left:453px;top:508px;width:118px;height:20px"><span style="top:0px">Save CSV</span></div>

<div class="b r" style="left:573px;top:508px;width:58px;height:20px"><span style="top:0px">Save</span></div>

<div class="b r" style="left:0px;top:530px;width:315px;height:20px"><span style="top:0px">Show</span></div>

<div class="b r" style="left:317px;top:530px;width:314px;height:20px"><span style="top:0px">Show only</span></div>

<div class="hdr" style="left:0;top:552px;width:633px;height:22px;line-height:22px">Messages</div>
<div class="t" style="left:7px;top:576px;line-height:18px"><u>F</u>ile</div>
<div style="position:absolute;left:0px;top:596px;width:633px;height:2px;background:#007878;"></div>
<div class="frame" style="left:0;top:598px;width:633px;height:66px"><div style="position:absolute;left:1px;top:1px;width:613px;height:62px;background:#fff;overflow:hidden"></div><div class="sb" style="left:614px;top:1px;height:62px"><div class="sbb" style="top:0"><div class="au"></div></div><div class="sbt" style="top:16px;height:30px"></div><div class="sbb" style="top:37px;height:7px"></div><div class="sbb" style="top:46px"><div class="ad"></div></div></div></div>
<div class="li" style="left:7px;top:597px;color:#a0a0a0;line-height:16px">Created aldo_pH7p5_Elution1_0022__It_q0_238738-bl-1_792122e-09-4_0570974e-07s</div>
<div class="li" style="left:7px;top:613px;color:#a0a0a0;line-height:16px">Created aldo_pH7p5_Elution1_0022__It_q0_239308-bl-8_4350245e-10-1_6652802e-07s</div>
<div class="li" style="left:7px;top:629px;color:#a0a0a0;line-height:16px">Created aldo_pH7p5_Elution1_0022__It_q0_239879-bl-1_0801758e-09-9_1663265e-08s</div>
<div style="position:absolute;left:0px;top:664px;width:1369px;height:1px;background:#007878;"></div>
<div class="b" style="left:0px;top:665px;width:164px;height:20px"><span style="top:0px">Help</span></div>

<div class="b" style="left:166px;top:665px;width:164px;height:20px"><span style="top:0px">Options</span></div>

<div style="position:absolute;left:332px;top:686px;width:666px;height:1px;background:#fff;"></div>
<div style="position:absolute;left:997px;top:665px;width:1px;height:22px;background:#fff;"></div>
<div style="position:absolute;left:332px;top:665px;width:665px;height:1px;background:#8a7a7a;"></div>
<div class="b" style="left:1036px;top:665px;width:331px;height:20px"><span style="top:0px">Close</span></div>

<div style="position:absolute;left:0px;top:687px;width:1369px;height:1px;background:#007878;"></div>
<div class="b" style="left:633px;top:565px;width:38px;height:22px"><span style="top:0px">3D</span></div>

<div class="b r" style="left:673px;top:565px;width:143px;height:22px"><span style="top:0px">Concentration reference</span></div>

<div class="b r" style="left:818px;top:565px;width:108px;height:22px"><span style="top:0px">Residuals</span></div>

<div class="b" style="left:928px;top:565px;width:108px;height:22px"><span style="top:0px">CorMap Analysis</span></div>

<div class="b" style="left:1038px;top:565px;width:109px;height:22px"><span style="top:0px">Save Plots</span></div>

<div class="b r" style="left:1149px;top:565px;width:108px;height:22px"><span style="top:0px">Cancel</span></div>

<div class="b r" style="left:1259px;top:565px;width:108px;height:22px"><span style="top:0px">Keep</span></div>

<div class="b r" style="left:633px;top:589px;width:104px;height:22px"><span style="top:0px">Blanks analysis</span></div>

<div class="b r" style="left:739px;top:589px;width:98px;height:22px"><span style="top:0px">Baseline</span></div>

<div class="b" style="left:839px;top:589px;width:104px;height:22px"><span style="top:0px">Baseline apply</span></div>

<div class="b r" style="left:945px;top:589px;width:104px;height:22px"><span style="top:0px">Timeshift</span></div>

<div class="b r" style="left:1051px;top:589px;width:104px;height:22px"><span style="top:0px">Timescale</span></div>

<div class="b r" style="left:1157px;top:589px;width:104px;height:22px"><span style="top:0px">SD eval.</span></div>

<div class="b r" style="left:1263px;top:589px;width:104px;height:22px"><span style="top:0px">SD apply</span></div>

<div class="b r" style="left:633px;top:613px;width:108px;height:22px"><span style="top:0px">EMG+GMG</span></div>

<div class="b r" style="left:743px;top:613px;width:155px;height:22px"><span style="top:0px">Global Gaussians</span></div>

<div class="b" style="left:900px;top:613px;width:154px;height:22px"><span style="top:0px">Scale Analysis</span></div>

<div class="b" style="left:1056px;top:613px;width:155px;height:22px"><span style="top:0px">Trial make I(q)</span></div>

<div class="b r" style="left:1213px;top:613px;width:154px;height:22px"><span style="top:0px">Guinier</span></div>

<div class="b r" style="left:633px;top:638px;width:85px;height:24px"><span style="top:0px">Select Visible</span></div>

<div class="b r" style="left:720px;top:638px;width:78px;height:24px"><span style="top:0px">Remove Vis</span></div>

<div class="b" style="left:800px;top:638px;width:87px;height:24px"><span style="top:0px">Crop Common</span></div>

<div class="b r" style="left:889px;top:638px;width:78px;height:24px"><span style="top:0px">Crop Vis</span></div>

<div class="b" style="left:969px;top:638px;width:78px;height:24px"><span style="top:0px">Crop Zeros</span></div>

<div class="b r" style="left:1049px;top:638px;width:78px;height:24px"><span style="top:0px">Crop Left</span></div>

<div class="b r" style="left:1129px;top:638px;width:78px;height:24px"><span style="top:0px">Undo</span></div>

<div class="b r" style="left:1209px;top:638px;width:78px;height:24px"><span style="top:0px">Crop Right</span></div>

<div class="b r" style="left:1289px;top:638px;width:78px;height:24px"><span style="top:0px">Legend</span></div>

<div style="position:absolute;left:633px;top:639px;width:736px;height:1px;background:#fff;"></div>
</body></html>
